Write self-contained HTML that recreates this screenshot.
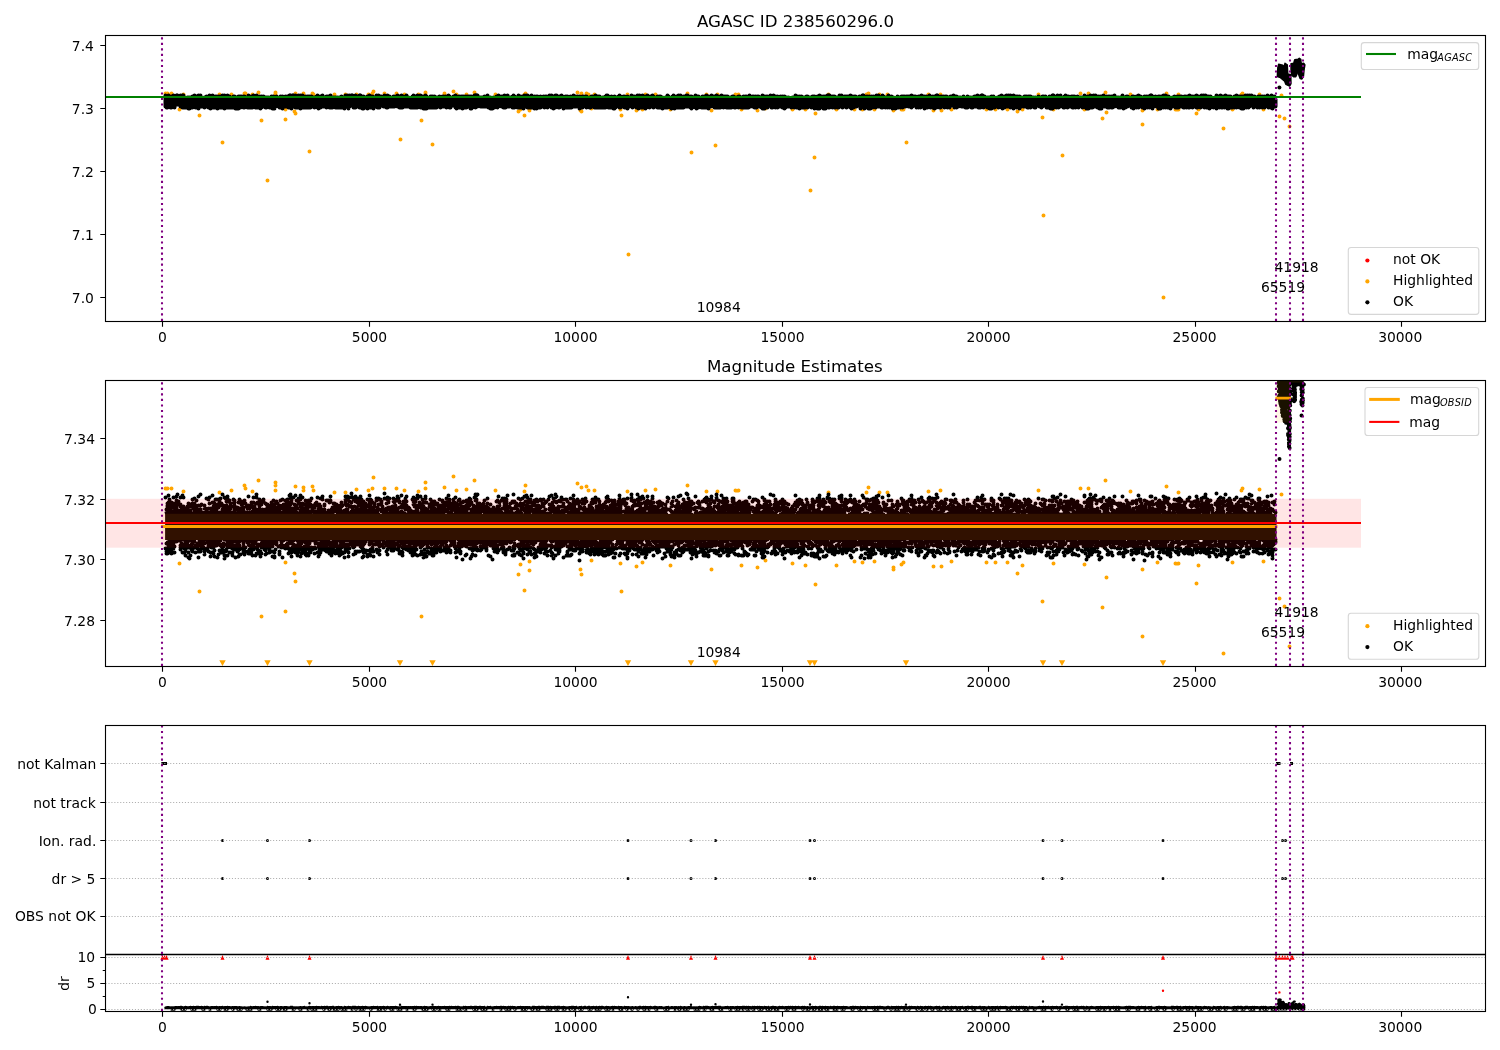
<!DOCTYPE html>
<html><head><meta charset="utf-8"><title>AGASC ID 238560296.0</title>
<style>html,body{margin:0;padding:0;background:#fff}svg{display:block}text{font-family:'DejaVu Sans','Liberation Sans',sans-serif;font-size:13.89px;fill:#000}.t{font-size:16.67px}.sub{font-size:9.72px;font-style:oblique}.sp{fill:none;stroke:#000;stroke-width:1.11;shape-rendering:auto}.tk{stroke:#000;stroke-width:1.11;fill:none}.vl{stroke:#800080;stroke-width:2.08;stroke-dasharray:2.08 3.44;fill:none}.gr{stroke:#b0b0b0;stroke-width:1.11;stroke-dasharray:1.11 1.83;fill:none}.pk{stroke:#000;stroke-linecap:round;fill:none}.po{stroke:#ffa500;stroke-linecap:round;fill:none}.pr{stroke:#f00;stroke-linecap:round;fill:none}.lg{fill:#fff;fill-opacity:.8;stroke:#ccc;stroke-opacity:.8;stroke-width:1.11}</style></head><body>
<svg width="1500" height="1050" viewBox="0 0 1500 1050">
<rect width="1500" height="1050" fill="#fff"/>
<defs>
<clipPath id="c1"><rect x="105.5" y="35.5" width="1380.0" height="286.0"/></clipPath>
<clipPath id="c2"><rect x="105.5" y="380.5" width="1380.0" height="286.0"/></clipPath>
<clipPath id="c3"><rect x="105.5" y="725.5" width="1380.0" height="286.0"/></clipPath>
</defs>
<g clip-path="url(#c1)">
<path class="po" stroke-width="4.0" d="M179.5 109.5h0M199.5 115.5h0M261.5 120.5h0M285.5 119.5h0M285.5 109.5h0M294.5 111.5h0M295.5 113.5h0M421.5 120.5h0M518.5 111.5h0M520.5 109.5h0M524.5 115.5h0M529.5 109.5h0M529.5 110.5h0M580.5 110.5h0M581.5 111.5h0M591.5 108.5h0M620.5 109.5h0M621.5 115.5h0M636.5 110.5h0M642.5 109.5h0M670.5 109.5h0M711.5 110.5h0M741.5 109.5h0M757.5 110.5h0M765.5 108.5h0M792.5 109.5h0M805.5 109.5h0M815.5 113.5h0M836.5 109.5h0M854.5 109.5h0M862.5 109.5h0M874.5 109.5h0M893.5 110.5h0M893.5 110.5h0M901.5 109.5h0M903.5 109.5h0M933.5 110.5h0M941.5 110.5h0M951.5 109.5h0M986.5 109.5h0M995.5 109.5h0M1007.5 109.5h0M1017.5 111.5h0M1022.5 109.5h0M1042.5 117.5h0M1053.5 109.5h0M1084.5 109.5h0M1102.5 118.5h0M1106.5 112.5h0M1142.5 124.5h0M1142.5 110.5h0M1157.5 109.5h0M1175.5 109.5h0M1178.5 109.5h0M1196.5 113.5h0M1198.5 109.5h0M1223.5 128.5h0M1232.5 109.5h0M1263.5 109.5h0M1279.5 116.5h0M1284.5 118.5h0M1289.5 126.5h0M1281.5 95.5h0M165.5 93.5h0M167.5 93.5h0M171.5 93.5h0M183.5 94.5h0M219.5 94.5h0M231.5 94.5h0M244.5 93.5h0M245.5 93.5h0M252.5 94.5h0M258.5 92.5h0M275.5 92.5h0M275.5 93.5h0M275.5 94.5h0M295.5 93.5h0M303.5 93.5h0M303.5 94.5h0M312.5 93.5h0M313.5 94.5h0M334.5 94.5h0M345.5 94.5h0M356.5 94.5h0M368.5 94.5h0M372.5 93.5h0M373.5 91.5h0M384.5 93.5h0M396.5 93.5h0M404.5 94.5h0M418.5 94.5h0M425.5 92.5h0M425.5 93.5h0M444.5 93.5h0M453.5 91.5h0M456.5 94.5h0M466.5 94.5h0M474.5 92.5h0M495.5 94.5h0M525.5 93.5h0M524.5 94.5h0M577.5 92.5h0M581.5 93.5h0M586.5 93.5h0M588.5 94.5h0M594.5 94.5h0M627.5 94.5h0M645.5 94.5h0M655.5 94.5h0M687.5 93.5h0M706.5 94.5h0M717.5 94.5h0M735.5 94.5h0M738.5 94.5h0M828.5 94.5h0M868.5 93.5h0M866.5 94.5h0M879.5 94.5h0M887.5 94.5h0M928.5 94.5h0M940.5 94.5h0M1038.5 94.5h0M1080.5 93.5h0M1088.5 93.5h0M1105.5 92.5h0M1130.5 94.5h0M1166.5 93.5h0M1178.5 94.5h0M1242.5 93.5h0M1241.5 94.5h0M1259.5 94.5h0M222.5 142.5h0M267.5 180.5h0M309.5 151.5h0M400.5 139.5h0M432.5 144.5h0M628.5 254.5h0M691.5 152.5h0M715.5 145.5h0M810.5 190.5h0M814.5 157.5h0M906.5 142.5h0M1043.5 215.5h0M1062.5 155.5h0M1163.5 297.5h0"/>
<path class="pk" stroke-width="4.0" d="M165.5 95.5V106.5M166.5 98.5V107.5M167.5 97.5V107.5M168.5 95.5V106.5M169.5 96.5V106.5M170.5 98.5V107.5M171.5 96.5V107.5M172.5 97.5V105.5M173.5 95.5V106.5M174.5 97.5V107.5M175.5 97.5V104.5M176.5 95.5V104.5M177.5 95.5V104.5M178.5 96.5V104.5M179.5 98.5V104.5M180.5 95.5V106.5M181.5 98.5V105.5M182.5 95.5V107.5M183.5 95.5V106.5M184.5 98.5V107.5M185.5 99.5V107.5M186.5 98.5V106.5M187.5 97.5V106.5M188.5 97.5V108.5M189.5 97.5V108.5M190.5 97.5V107.5M191.5 97.5V106.5M192.5 96.5V107.5M193.5 98.5V104.5M194.5 95.5V106.5M195.5 97.5V107.5M196.5 96.5V105.5M197.5 98.5V106.5M198.5 95.5V108.5M199.5 99.5V105.5M200.5 95.5V106.5M201.5 97.5V106.5M202.5 99.5V106.5M203.5 99.5V106.5M204.5 97.5V107.5M205.5 98.5V104.5M206.5 96.5V106.5M207.5 99.5V106.5M208.5 96.5V107.5M209.5 95.5V106.5M210.5 98.5V108.5M211.5 98.5V106.5M212.5 95.5V107.5M213.5 96.5V107.5M214.5 97.5V107.5M215.5 96.5V105.5M216.5 96.5V105.5M217.5 97.5V108.5M218.5 96.5V107.5M219.5 96.5V106.5M220.5 96.5V107.5M221.5 97.5V106.5M222.5 95.5V107.5M223.5 97.5V106.5M224.5 95.5V108.5M225.5 96.5V107.5M226.5 96.5V106.5M227.5 95.5V107.5M228.5 97.5V105.5M229.5 96.5V107.5M230.5 97.5V107.5M231.5 99.5V105.5M232.5 98.5V107.5M233.5 96.5V106.5M234.5 96.5V106.5M235.5 99.5V108.5M236.5 97.5V106.5M237.5 97.5V107.5M238.5 96.5V108.5M239.5 96.5V107.5M240.5 96.5V107.5M241.5 96.5V104.5M242.5 99.5V106.5M243.5 96.5V107.5M244.5 96.5V107.5M245.5 97.5V106.5M246.5 97.5V104.5M247.5 97.5V107.5M248.5 95.5V107.5M249.5 97.5V107.5M250.5 98.5V106.5M251.5 96.5V107.5M252.5 97.5V107.5M253.5 95.5V106.5M254.5 97.5V104.5M255.5 98.5V107.5M256.5 95.5V107.5M257.5 96.5V106.5M258.5 100.5V107.5M259.5 96.5V104.5M260.5 98.5V108.5M261.5 96.5V107.5M262.5 98.5V105.5M263.5 96.5V105.5M264.5 98.5V106.5M265.5 97.5V107.5M266.5 97.5V107.5M267.5 97.5V104.5M268.5 97.5V106.5M269.5 98.5V107.5M270.5 100.5V105.5M271.5 96.5V104.5M272.5 98.5V108.5M273.5 96.5V105.5M274.5 97.5V108.5M275.5 99.5V106.5M276.5 96.5V105.5M277.5 97.5V104.5M278.5 98.5V106.5M279.5 97.5V107.5M280.5 96.5V105.5M281.5 100.5V106.5M282.5 96.5V108.5M283.5 97.5V106.5M284.5 97.5V105.5M285.5 96.5V106.5M286.5 97.5V105.5M287.5 96.5V105.5M288.5 97.5V107.5M289.5 95.5V106.5M290.5 95.5V107.5M291.5 96.5V108.5M292.5 95.5V106.5M293.5 95.5V105.5M294.5 97.5V106.5M295.5 95.5V107.5M296.5 96.5V106.5M297.5 98.5V107.5M298.5 95.5V107.5M299.5 96.5V106.5M300.5 95.5V108.5M301.5 97.5V107.5M302.5 95.5V104.5M303.5 97.5V107.5M304.5 98.5V106.5M305.5 96.5V107.5M306.5 97.5V107.5M307.5 96.5V106.5M308.5 96.5V107.5M309.5 96.5V107.5M310.5 96.5V107.5M311.5 96.5V106.5M312.5 98.5V106.5M313.5 97.5V106.5M314.5 97.5V107.5M315.5 97.5V106.5M316.5 96.5V104.5M317.5 95.5V107.5M318.5 97.5V108.5M319.5 97.5V107.5M320.5 96.5V107.5M321.5 99.5V105.5M322.5 95.5V106.5M323.5 98.5V105.5M324.5 97.5V106.5M325.5 99.5V106.5M326.5 96.5V107.5M327.5 96.5V106.5M328.5 96.5V106.5M329.5 96.5V107.5M330.5 95.5V105.5M331.5 98.5V107.5M332.5 97.5V107.5M333.5 97.5V105.5M334.5 97.5V106.5M335.5 97.5V107.5M336.5 97.5V107.5M337.5 97.5V106.5M338.5 98.5V107.5M339.5 97.5V107.5M340.5 97.5V107.5M341.5 96.5V107.5M342.5 97.5V107.5M343.5 98.5V107.5M344.5 98.5V108.5M345.5 95.5V106.5M346.5 96.5V106.5M347.5 95.5V105.5M348.5 97.5V108.5M349.5 95.5V106.5M350.5 99.5V105.5M351.5 95.5V104.5M352.5 95.5V105.5M353.5 96.5V107.5M354.5 97.5V105.5M355.5 95.5V107.5M356.5 97.5V104.5M357.5 96.5V106.5M358.5 97.5V105.5M359.5 95.5V107.5M360.5 95.5V105.5M361.5 96.5V106.5M362.5 98.5V108.5M363.5 96.5V108.5M364.5 97.5V107.5M365.5 97.5V107.5M366.5 97.5V106.5M367.5 96.5V108.5M368.5 97.5V107.5M369.5 95.5V107.5M370.5 96.5V107.5M371.5 96.5V107.5M372.5 96.5V106.5M373.5 98.5V108.5M374.5 97.5V104.5M375.5 99.5V105.5M376.5 95.5V106.5M377.5 97.5V107.5M378.5 95.5V103.5M379.5 96.5V107.5M380.5 96.5V105.5M381.5 96.5V105.5M382.5 97.5V105.5M383.5 99.5V106.5M384.5 95.5V105.5M385.5 98.5V105.5M386.5 97.5V107.5M387.5 95.5V107.5M388.5 96.5V105.5M389.5 96.5V106.5M390.5 97.5V105.5M391.5 98.5V106.5M392.5 97.5V106.5M393.5 96.5V106.5M394.5 96.5V106.5M395.5 97.5V104.5M396.5 96.5V105.5M397.5 95.5V106.5M398.5 96.5V106.5M399.5 96.5V107.5M400.5 99.5V107.5M401.5 95.5V107.5M402.5 97.5V107.5M403.5 96.5V106.5M404.5 97.5V105.5M405.5 96.5V106.5M406.5 95.5V106.5M407.5 97.5V106.5M408.5 97.5V106.5M409.5 98.5V105.5M410.5 98.5V107.5M411.5 98.5V106.5M412.5 96.5V107.5M413.5 95.5V106.5M414.5 96.5V107.5M415.5 96.5V107.5M416.5 97.5V106.5M417.5 95.5V107.5M418.5 99.5V105.5M419.5 96.5V104.5M420.5 95.5V107.5M421.5 97.5V106.5M422.5 96.5V105.5M423.5 96.5V108.5M424.5 98.5V107.5M425.5 95.5V105.5M426.5 96.5V108.5M427.5 98.5V107.5M428.5 100.5V106.5M429.5 97.5V107.5M430.5 96.5V105.5M431.5 96.5V107.5M432.5 96.5V107.5M433.5 98.5V107.5M434.5 96.5V107.5M435.5 97.5V106.5M436.5 97.5V107.5M437.5 97.5V106.5M438.5 97.5V106.5M439.5 96.5V106.5M440.5 97.5V107.5M441.5 97.5V105.5M442.5 96.5V106.5M443.5 96.5V106.5M444.5 97.5V106.5M445.5 96.5V105.5M446.5 96.5V107.5M447.5 96.5V106.5M448.5 95.5V106.5M449.5 96.5V107.5M450.5 97.5V107.5M451.5 98.5V105.5M452.5 97.5V105.5M453.5 96.5V105.5M454.5 96.5V105.5M455.5 95.5V107.5M456.5 97.5V108.5M457.5 97.5V104.5M458.5 96.5V107.5M459.5 96.5V107.5M460.5 99.5V107.5M461.5 96.5V106.5M462.5 96.5V108.5M463.5 96.5V105.5M464.5 97.5V104.5M465.5 96.5V107.5M466.5 96.5V107.5M467.5 96.5V105.5M468.5 96.5V104.5M469.5 96.5V106.5M470.5 96.5V108.5M471.5 96.5V108.5M472.5 98.5V107.5M473.5 97.5V105.5M474.5 95.5V106.5M475.5 95.5V107.5M476.5 95.5V106.5M477.5 95.5V106.5M478.5 97.5V104.5M479.5 97.5V105.5M480.5 97.5V106.5M481.5 97.5V106.5M482.5 97.5V106.5M483.5 97.5V105.5M484.5 96.5V106.5M485.5 97.5V106.5M486.5 98.5V106.5M487.5 95.5V105.5M488.5 98.5V107.5M489.5 98.5V104.5M490.5 97.5V108.5M491.5 98.5V105.5M492.5 99.5V108.5M493.5 97.5V106.5M494.5 98.5V107.5M495.5 98.5V106.5M496.5 96.5V106.5M497.5 96.5V107.5M498.5 95.5V106.5M499.5 96.5V104.5M500.5 98.5V105.5M501.5 96.5V106.5M502.5 96.5V106.5M503.5 98.5V107.5M504.5 95.5V105.5M505.5 96.5V107.5M506.5 96.5V105.5M507.5 95.5V106.5M508.5 97.5V104.5M509.5 97.5V106.5M510.5 97.5V105.5M511.5 98.5V106.5M512.5 96.5V107.5M513.5 95.5V106.5M514.5 96.5V107.5M515.5 97.5V105.5M516.5 97.5V103.5M517.5 98.5V107.5M518.5 95.5V107.5M519.5 98.5V107.5M520.5 96.5V106.5M521.5 97.5V107.5M522.5 96.5V106.5M523.5 97.5V108.5M524.5 95.5V104.5M525.5 96.5V106.5M526.5 95.5V105.5M527.5 95.5V107.5M528.5 96.5V106.5M529.5 97.5V107.5M530.5 96.5V107.5M531.5 95.5V107.5M532.5 97.5V104.5M533.5 98.5V106.5M534.5 96.5V108.5M535.5 97.5V107.5M536.5 96.5V108.5M537.5 96.5V106.5M538.5 97.5V107.5M539.5 97.5V106.5M540.5 96.5V107.5M541.5 97.5V106.5M542.5 97.5V106.5M543.5 96.5V106.5M544.5 97.5V107.5M545.5 96.5V106.5M546.5 96.5V106.5M547.5 99.5V107.5M548.5 96.5V105.5M549.5 95.5V104.5M550.5 99.5V106.5M551.5 95.5V107.5M552.5 96.5V107.5M553.5 96.5V108.5M554.5 96.5V105.5M555.5 95.5V107.5M556.5 95.5V105.5M557.5 96.5V106.5M558.5 97.5V107.5M559.5 96.5V107.5M560.5 96.5V104.5M561.5 95.5V106.5M562.5 96.5V105.5M563.5 97.5V108.5M564.5 98.5V104.5M565.5 96.5V105.5M566.5 96.5V107.5M567.5 96.5V107.5M568.5 97.5V107.5M569.5 97.5V106.5M570.5 96.5V107.5M571.5 97.5V107.5M572.5 98.5V104.5M573.5 95.5V106.5M574.5 97.5V106.5M575.5 96.5V106.5M576.5 97.5V106.5M577.5 96.5V105.5M578.5 97.5V106.5M579.5 96.5V108.5M580.5 97.5V106.5M581.5 98.5V105.5M582.5 96.5V107.5M583.5 96.5V106.5M584.5 97.5V105.5M585.5 96.5V105.5M586.5 96.5V107.5M587.5 98.5V106.5M588.5 99.5V105.5M589.5 97.5V107.5M590.5 97.5V107.5M591.5 96.5V106.5M592.5 96.5V106.5M593.5 98.5V105.5M594.5 96.5V107.5M595.5 95.5V106.5M596.5 97.5V107.5M597.5 96.5V107.5M598.5 96.5V107.5M599.5 96.5V107.5M600.5 98.5V107.5M601.5 98.5V106.5M602.5 97.5V107.5M603.5 97.5V107.5M604.5 97.5V105.5M605.5 96.5V107.5M606.5 95.5V106.5M607.5 95.5V106.5M608.5 96.5V107.5M609.5 98.5V107.5M610.5 97.5V107.5M611.5 96.5V104.5M612.5 97.5V107.5M613.5 97.5V108.5M614.5 96.5V108.5M615.5 98.5V107.5M616.5 97.5V106.5M617.5 98.5V104.5M618.5 96.5V104.5M619.5 95.5V107.5M620.5 96.5V107.5M621.5 97.5V105.5M622.5 97.5V106.5M623.5 96.5V106.5M624.5 96.5V107.5M625.5 97.5V107.5M626.5 97.5V107.5M627.5 96.5V108.5M628.5 97.5V104.5M629.5 98.5V106.5M630.5 98.5V105.5M631.5 95.5V106.5M632.5 97.5V107.5M633.5 96.5V106.5M634.5 96.5V106.5M635.5 97.5V105.5M636.5 98.5V107.5M637.5 95.5V106.5M638.5 96.5V108.5M639.5 95.5V105.5M640.5 96.5V106.5M641.5 97.5V107.5M642.5 95.5V106.5M643.5 96.5V107.5M644.5 96.5V106.5M645.5 96.5V108.5M646.5 96.5V107.5M647.5 95.5V106.5M648.5 99.5V105.5M649.5 97.5V107.5M650.5 96.5V105.5M651.5 97.5V106.5M652.5 95.5V106.5M653.5 96.5V107.5M654.5 97.5V105.5M655.5 98.5V106.5M656.5 97.5V106.5M657.5 96.5V107.5M658.5 97.5V106.5M659.5 96.5V107.5M660.5 96.5V105.5M661.5 97.5V106.5M662.5 97.5V108.5M663.5 98.5V105.5M664.5 100.5V107.5M665.5 97.5V107.5M666.5 99.5V106.5M667.5 95.5V107.5M668.5 96.5V105.5M669.5 98.5V106.5M670.5 98.5V107.5M671.5 97.5V108.5M672.5 96.5V106.5M673.5 95.5V104.5M674.5 99.5V108.5M675.5 97.5V107.5M676.5 96.5V107.5M677.5 97.5V105.5M678.5 95.5V107.5M679.5 97.5V106.5M680.5 95.5V107.5M681.5 99.5V105.5M682.5 97.5V107.5M683.5 96.5V107.5M684.5 96.5V105.5M685.5 96.5V106.5M686.5 95.5V106.5M687.5 95.5V106.5M688.5 96.5V106.5M689.5 97.5V106.5M690.5 96.5V107.5M691.5 96.5V108.5M692.5 97.5V107.5M693.5 97.5V106.5M694.5 98.5V105.5M695.5 95.5V107.5M696.5 98.5V108.5M697.5 96.5V105.5M698.5 96.5V107.5M699.5 97.5V105.5M700.5 98.5V106.5M701.5 98.5V107.5M702.5 96.5V107.5M703.5 100.5V107.5M704.5 96.5V107.5M705.5 96.5V107.5M706.5 95.5V106.5M707.5 98.5V106.5M708.5 96.5V108.5M709.5 97.5V105.5M710.5 97.5V106.5M711.5 95.5V105.5M712.5 99.5V105.5M713.5 96.5V106.5M714.5 96.5V107.5M715.5 99.5V107.5M716.5 95.5V107.5M717.5 97.5V107.5M718.5 96.5V107.5M719.5 98.5V107.5M720.5 96.5V107.5M721.5 95.5V106.5M722.5 96.5V106.5M723.5 96.5V107.5M724.5 96.5V106.5M725.5 96.5V105.5M726.5 96.5V107.5M727.5 96.5V107.5M728.5 97.5V107.5M729.5 98.5V107.5M730.5 97.5V107.5M731.5 97.5V107.5M732.5 96.5V106.5M733.5 96.5V105.5M734.5 97.5V107.5M735.5 97.5V107.5M736.5 97.5V106.5M737.5 98.5V106.5M738.5 96.5V107.5M739.5 96.5V105.5M740.5 97.5V105.5M741.5 97.5V107.5M742.5 97.5V106.5M743.5 96.5V107.5M744.5 97.5V107.5M745.5 96.5V107.5M746.5 96.5V107.5M747.5 97.5V107.5M748.5 97.5V107.5M749.5 95.5V105.5M750.5 97.5V106.5M751.5 98.5V104.5M752.5 96.5V106.5M753.5 96.5V106.5M754.5 99.5V107.5M755.5 96.5V107.5M756.5 98.5V107.5M757.5 96.5V106.5M758.5 96.5V106.5M759.5 97.5V106.5M760.5 97.5V106.5M761.5 97.5V107.5M762.5 95.5V108.5M763.5 98.5V108.5M764.5 96.5V108.5M765.5 97.5V106.5M766.5 96.5V106.5M767.5 96.5V107.5M768.5 97.5V105.5M769.5 96.5V105.5M770.5 95.5V105.5M771.5 98.5V107.5M772.5 98.5V107.5M773.5 95.5V105.5M774.5 97.5V106.5M775.5 96.5V107.5M776.5 98.5V104.5M777.5 96.5V107.5M778.5 97.5V106.5M779.5 97.5V106.5M780.5 96.5V106.5M781.5 98.5V104.5M782.5 96.5V107.5M783.5 97.5V106.5M784.5 96.5V108.5M785.5 97.5V107.5M786.5 97.5V106.5M787.5 98.5V106.5M788.5 97.5V105.5M789.5 98.5V106.5M790.5 98.5V105.5M791.5 98.5V107.5M792.5 97.5V105.5M793.5 98.5V106.5M794.5 97.5V107.5M795.5 95.5V104.5M796.5 97.5V107.5M797.5 96.5V107.5M798.5 97.5V106.5M799.5 96.5V108.5M800.5 97.5V107.5M801.5 96.5V107.5M802.5 97.5V107.5M803.5 97.5V107.5M804.5 97.5V107.5M805.5 98.5V107.5M806.5 96.5V104.5M807.5 96.5V107.5M808.5 98.5V106.5M809.5 97.5V105.5M810.5 97.5V105.5M811.5 98.5V107.5M812.5 96.5V105.5M813.5 96.5V107.5M814.5 96.5V108.5M815.5 99.5V107.5M816.5 98.5V104.5M817.5 96.5V108.5M818.5 97.5V107.5M819.5 95.5V108.5M820.5 98.5V106.5M821.5 96.5V105.5M822.5 98.5V107.5M823.5 96.5V108.5M824.5 96.5V105.5M825.5 96.5V108.5M826.5 98.5V107.5M827.5 95.5V106.5M828.5 95.5V107.5M829.5 95.5V107.5M830.5 96.5V106.5M831.5 98.5V106.5M832.5 96.5V107.5M833.5 96.5V106.5M834.5 96.5V107.5M835.5 97.5V107.5M836.5 97.5V105.5M837.5 98.5V107.5M838.5 97.5V107.5M839.5 95.5V106.5M840.5 96.5V106.5M841.5 95.5V104.5M842.5 97.5V107.5M843.5 97.5V106.5M844.5 96.5V105.5M845.5 96.5V106.5M846.5 96.5V107.5M847.5 96.5V106.5M848.5 96.5V106.5M849.5 99.5V106.5M850.5 95.5V107.5M851.5 99.5V108.5M852.5 96.5V105.5M853.5 97.5V107.5M854.5 96.5V105.5M855.5 96.5V104.5M856.5 97.5V106.5M857.5 97.5V103.5M858.5 97.5V105.5M859.5 96.5V105.5M860.5 97.5V108.5M861.5 98.5V107.5M862.5 95.5V105.5M863.5 95.5V104.5M864.5 97.5V108.5M865.5 97.5V107.5M866.5 96.5V106.5M867.5 96.5V106.5M868.5 99.5V108.5M869.5 96.5V104.5M870.5 98.5V108.5M871.5 96.5V107.5M872.5 97.5V107.5M873.5 96.5V106.5M874.5 97.5V105.5M875.5 97.5V107.5M876.5 95.5V104.5M877.5 96.5V106.5M878.5 95.5V106.5M879.5 97.5V106.5M880.5 98.5V106.5M881.5 98.5V107.5M882.5 95.5V107.5M883.5 96.5V106.5M884.5 97.5V106.5M885.5 97.5V107.5M886.5 97.5V105.5M887.5 99.5V107.5M888.5 95.5V105.5M889.5 98.5V107.5M890.5 98.5V105.5M891.5 96.5V107.5M892.5 97.5V108.5M893.5 97.5V107.5M894.5 98.5V105.5M895.5 98.5V108.5M896.5 97.5V107.5M897.5 96.5V107.5M898.5 99.5V107.5M899.5 97.5V106.5M900.5 99.5V107.5M901.5 96.5V105.5M902.5 96.5V107.5M903.5 96.5V106.5M904.5 96.5V106.5M905.5 99.5V106.5M906.5 96.5V104.5M907.5 96.5V105.5M908.5 96.5V106.5M909.5 96.5V106.5M910.5 98.5V106.5M911.5 95.5V107.5M912.5 96.5V106.5M913.5 96.5V105.5M914.5 96.5V104.5M915.5 96.5V105.5M916.5 98.5V107.5M917.5 98.5V106.5M918.5 96.5V107.5M919.5 96.5V105.5M920.5 99.5V107.5M921.5 95.5V106.5M922.5 96.5V106.5M923.5 96.5V106.5M924.5 96.5V108.5M925.5 98.5V107.5M926.5 96.5V107.5M927.5 97.5V107.5M928.5 96.5V106.5M929.5 95.5V106.5M930.5 97.5V107.5M931.5 97.5V105.5M932.5 96.5V107.5M933.5 99.5V107.5M934.5 96.5V108.5M935.5 96.5V104.5M936.5 95.5V107.5M937.5 95.5V106.5M938.5 97.5V106.5M939.5 97.5V107.5M940.5 96.5V107.5M941.5 96.5V105.5M942.5 97.5V105.5M943.5 96.5V106.5M944.5 97.5V107.5M945.5 96.5V105.5M946.5 96.5V105.5M947.5 99.5V107.5M948.5 97.5V106.5M949.5 98.5V107.5M950.5 96.5V105.5M951.5 96.5V104.5M952.5 97.5V105.5M953.5 95.5V105.5M954.5 96.5V107.5M955.5 96.5V105.5M956.5 96.5V107.5M957.5 98.5V106.5M958.5 97.5V106.5M959.5 97.5V104.5M960.5 97.5V105.5M961.5 98.5V106.5M962.5 98.5V106.5M963.5 96.5V106.5M964.5 98.5V106.5M965.5 99.5V107.5M966.5 97.5V107.5M967.5 96.5V107.5M968.5 98.5V104.5M969.5 97.5V106.5M970.5 97.5V105.5M971.5 98.5V107.5M972.5 97.5V107.5M973.5 97.5V105.5M974.5 96.5V106.5M975.5 96.5V106.5M976.5 96.5V106.5M977.5 95.5V105.5M978.5 97.5V107.5M979.5 96.5V107.5M980.5 98.5V107.5M981.5 95.5V104.5M982.5 95.5V106.5M983.5 97.5V107.5M984.5 96.5V106.5M985.5 97.5V105.5M986.5 98.5V103.5M987.5 97.5V107.5M988.5 97.5V106.5M989.5 97.5V108.5M990.5 98.5V104.5M991.5 96.5V108.5M992.5 97.5V105.5M993.5 96.5V107.5M994.5 98.5V107.5M995.5 98.5V105.5M996.5 98.5V105.5M997.5 97.5V106.5M998.5 98.5V107.5M999.5 96.5V105.5M1000.5 96.5V104.5M1001.5 95.5V107.5M1002.5 96.5V108.5M1003.5 98.5V107.5M1004.5 96.5V107.5M1005.5 98.5V105.5M1006.5 95.5V106.5M1007.5 96.5V105.5M1008.5 95.5V106.5M1009.5 96.5V106.5M1010.5 95.5V107.5M1011.5 96.5V105.5M1012.5 97.5V107.5M1013.5 95.5V108.5M1014.5 97.5V106.5M1015.5 96.5V106.5M1016.5 96.5V107.5M1017.5 96.5V106.5M1018.5 98.5V104.5M1019.5 96.5V108.5M1020.5 97.5V106.5M1021.5 97.5V106.5M1022.5 98.5V105.5M1023.5 97.5V106.5M1024.5 96.5V106.5M1025.5 96.5V106.5M1026.5 96.5V106.5M1027.5 97.5V107.5M1028.5 96.5V107.5M1029.5 96.5V105.5M1030.5 96.5V107.5M1031.5 98.5V106.5M1032.5 97.5V106.5M1033.5 97.5V105.5M1034.5 98.5V107.5M1035.5 97.5V107.5M1036.5 98.5V105.5M1037.5 99.5V104.5M1038.5 96.5V105.5M1039.5 98.5V106.5M1040.5 97.5V105.5M1041.5 97.5V107.5M1042.5 96.5V106.5M1043.5 96.5V104.5M1044.5 97.5V105.5M1045.5 96.5V105.5M1046.5 99.5V107.5M1047.5 98.5V107.5M1048.5 97.5V107.5M1049.5 96.5V107.5M1050.5 98.5V108.5M1051.5 96.5V106.5M1052.5 95.5V108.5M1053.5 95.5V107.5M1054.5 96.5V105.5M1055.5 98.5V105.5M1056.5 96.5V107.5M1057.5 95.5V106.5M1058.5 97.5V107.5M1059.5 99.5V106.5M1060.5 95.5V106.5M1061.5 97.5V105.5M1062.5 100.5V106.5M1063.5 97.5V107.5M1064.5 96.5V107.5M1065.5 95.5V106.5M1066.5 97.5V106.5M1067.5 96.5V107.5M1068.5 96.5V106.5M1069.5 97.5V106.5M1070.5 97.5V106.5M1071.5 96.5V106.5M1072.5 96.5V107.5M1073.5 96.5V107.5M1074.5 96.5V105.5M1075.5 97.5V107.5M1076.5 99.5V105.5M1077.5 96.5V106.5M1078.5 97.5V107.5M1079.5 97.5V104.5M1080.5 97.5V105.5M1081.5 97.5V106.5M1082.5 98.5V107.5M1083.5 99.5V106.5M1084.5 95.5V105.5M1085.5 100.5V107.5M1086.5 97.5V108.5M1087.5 96.5V108.5M1088.5 96.5V108.5M1089.5 96.5V107.5M1090.5 95.5V107.5M1091.5 96.5V107.5M1092.5 96.5V107.5M1093.5 95.5V104.5M1094.5 96.5V106.5M1095.5 95.5V106.5M1096.5 96.5V105.5M1097.5 98.5V107.5M1098.5 96.5V107.5M1099.5 98.5V108.5M1100.5 96.5V105.5M1101.5 96.5V108.5M1102.5 97.5V104.5M1103.5 95.5V105.5M1104.5 97.5V106.5M1105.5 97.5V106.5M1106.5 96.5V105.5M1107.5 98.5V107.5M1108.5 96.5V107.5M1109.5 96.5V107.5M1110.5 99.5V106.5M1111.5 96.5V107.5M1112.5 96.5V107.5M1113.5 96.5V105.5M1114.5 95.5V106.5M1115.5 97.5V104.5M1116.5 98.5V105.5M1117.5 97.5V106.5M1118.5 97.5V107.5M1119.5 98.5V107.5M1120.5 97.5V107.5M1121.5 98.5V105.5M1122.5 95.5V105.5M1123.5 97.5V108.5M1124.5 97.5V106.5M1125.5 97.5V107.5M1126.5 96.5V104.5M1127.5 96.5V106.5M1128.5 97.5V105.5M1129.5 97.5V104.5M1130.5 98.5V105.5M1131.5 97.5V107.5M1132.5 96.5V105.5M1133.5 96.5V108.5M1134.5 99.5V107.5M1135.5 98.5V105.5M1136.5 96.5V107.5M1137.5 98.5V106.5M1138.5 95.5V107.5M1139.5 96.5V105.5M1140.5 96.5V106.5M1141.5 97.5V104.5M1142.5 97.5V107.5M1143.5 98.5V106.5M1144.5 96.5V108.5M1145.5 97.5V107.5M1146.5 96.5V105.5M1147.5 97.5V107.5M1148.5 96.5V106.5M1149.5 97.5V107.5M1150.5 95.5V105.5M1151.5 95.5V105.5M1152.5 96.5V108.5M1153.5 97.5V106.5M1154.5 98.5V105.5M1155.5 96.5V105.5M1156.5 97.5V106.5M1157.5 97.5V104.5M1158.5 96.5V108.5M1159.5 96.5V107.5M1160.5 98.5V108.5M1161.5 96.5V106.5M1162.5 97.5V106.5M1163.5 95.5V107.5M1164.5 96.5V104.5M1165.5 95.5V107.5M1166.5 96.5V104.5M1167.5 96.5V107.5M1168.5 96.5V107.5M1169.5 97.5V107.5M1170.5 98.5V108.5M1171.5 99.5V105.5M1172.5 97.5V106.5M1173.5 97.5V105.5M1174.5 96.5V105.5M1175.5 97.5V107.5M1176.5 100.5V107.5M1177.5 96.5V107.5M1178.5 96.5V107.5M1179.5 96.5V105.5M1180.5 96.5V106.5M1181.5 96.5V106.5M1182.5 98.5V105.5M1183.5 97.5V107.5M1184.5 96.5V107.5M1185.5 96.5V104.5M1186.5 99.5V107.5M1187.5 96.5V106.5M1188.5 96.5V107.5M1189.5 95.5V107.5M1190.5 97.5V106.5M1191.5 96.5V105.5M1192.5 96.5V107.5M1193.5 97.5V105.5M1194.5 96.5V106.5M1195.5 96.5V106.5M1196.5 95.5V107.5M1197.5 96.5V107.5M1198.5 96.5V106.5M1199.5 97.5V105.5M1200.5 98.5V107.5M1201.5 95.5V106.5M1202.5 97.5V106.5M1203.5 95.5V105.5M1204.5 97.5V107.5M1205.5 95.5V106.5M1206.5 96.5V107.5M1207.5 96.5V107.5M1208.5 96.5V106.5M1209.5 97.5V108.5M1210.5 96.5V107.5M1211.5 97.5V106.5M1212.5 98.5V104.5M1213.5 100.5V107.5M1214.5 100.5V104.5M1215.5 97.5V107.5M1216.5 95.5V108.5M1217.5 96.5V106.5M1218.5 96.5V105.5M1219.5 96.5V107.5M1220.5 95.5V105.5M1221.5 97.5V107.5M1222.5 96.5V107.5M1223.5 96.5V106.5M1224.5 96.5V107.5M1225.5 95.5V104.5M1226.5 100.5V107.5M1227.5 96.5V108.5M1228.5 96.5V108.5M1229.5 96.5V106.5M1230.5 96.5V107.5M1231.5 97.5V107.5M1232.5 98.5V107.5M1233.5 97.5V106.5M1234.5 96.5V107.5M1235.5 97.5V106.5M1236.5 95.5V107.5M1237.5 97.5V106.5M1238.5 96.5V104.5M1239.5 96.5V107.5M1240.5 96.5V107.5M1241.5 96.5V108.5M1242.5 96.5V105.5M1243.5 96.5V108.5M1244.5 97.5V104.5M1245.5 95.5V104.5M1246.5 99.5V107.5M1247.5 95.5V106.5M1248.5 96.5V107.5M1249.5 95.5V106.5M1250.5 98.5V103.5M1251.5 95.5V105.5M1252.5 96.5V104.5M1253.5 98.5V107.5M1254.5 96.5V105.5M1255.5 97.5V106.5M1256.5 97.5V106.5M1257.5 97.5V107.5M1258.5 96.5V106.5M1259.5 96.5V107.5M1260.5 96.5V106.5M1261.5 97.5V106.5M1262.5 96.5V107.5M1263.5 98.5V106.5M1264.5 96.5V107.5M1265.5 97.5V104.5M1266.5 96.5V105.5M1267.5 95.5V106.5M1268.5 96.5V107.5M1269.5 98.5V106.5M1270.5 98.5V107.5M1271.5 95.5V107.5M1272.5 96.5V108.5M1273.5 99.5V105.5M1274.5 96.5V106.5M1275.5 99.5V106.5"/>
<polygon points="1278.7,64.4 1282.8,65.2 1284.3,67.4 1285,63.4 1287.2,64.8 1287.7,74 1290.7,74.8 1290.9,83.6 1289.7,86 1285.9,84.3 1284.7,81.1 1280.5,77.6 1277.4,76.4 1277.9,67.6" fill="#000" stroke="#000" stroke-width="1.6" stroke-linejoin="round"/>
<polygon points="1291.1,63.7 1293.8,63.3 1294.8,59.7 1298,59.3 1299.3,58.3 1300.7,59.3 1301.1,63.7 1303.8,63.3 1304.8,64.9 1303.9,70.5 1303.4,76.1 1301.9,78.9 1300.2,78.4 1298.4,73.6 1297.6,71.7 1296.5,71.2 1296.7,74.5 1295.7,76.8 1293.8,76.8 1291.8,75.2 1291.1,69.3" fill="#000" stroke="#000" stroke-width="1.6" stroke-linejoin="round"/>
<path class="pk" stroke-width="4.0" d="M1279.4 87.5h0"/>
</g>
<path d="M105.5 97H1361" stroke="#008000" stroke-width="2.08" fill="none"/>
<g clip-path="url(#c2)">
<path class="po" stroke-width="4.0" d="M179.5 563.5h0M199.5 591.5h0M261.5 616.5h0M285.5 611.5h0M285.5 562.5h0M294.5 573.5h0M295.5 581.5h0M421.5 616.5h0M518.5 574.5h0M520.5 564.5h0M524.5 590.5h0M529.5 561.5h0M529.5 570.5h0M580.5 569.5h0M581.5 574.5h0M591.5 560.5h0M620.5 563.5h0M621.5 591.5h0M636.5 566.5h0M642.5 562.5h0M670.5 565.5h0M711.5 569.5h0M741.5 565.5h0M757.5 567.5h0M765.5 560.5h0M792.5 563.5h0M805.5 565.5h0M815.5 584.5h0M836.5 565.5h0M854.5 561.5h0M862.5 562.5h0M874.5 561.5h0M893.5 567.5h0M893.5 569.5h0M901.5 564.5h0M903.5 562.5h0M933.5 566.5h0M941.5 566.5h0M951.5 561.5h0M986.5 562.5h0M995.5 562.5h0M1007.5 562.5h0M1017.5 573.5h0M1022.5 565.5h0M1042.5 601.5h0M1053.5 563.5h0M1084.5 564.5h0M1102.5 607.5h0M1106.5 577.5h0M1142.5 636.5h0M1142.5 569.5h0M1157.5 562.5h0M1175.5 563.5h0M1178.5 563.5h0M1196.5 583.5h0M1198.5 565.5h0M1223.5 653.5h0M1232.5 562.5h0M1263.5 561.5h0M1279.5 598.5h0M1284.5 606.5h0M1289.5 646.5h0M1281.5 494.5h0M165.5 488.5h0M167.5 488.5h0M171.5 488.5h0M183.5 491.5h0M219.5 492.5h0M231.5 490.5h0M244.5 485.5h0M245.5 488.5h0M252.5 491.5h0M258.5 480.5h0M275.5 482.5h0M275.5 485.5h0M275.5 490.5h0M295.5 486.5h0M303.5 487.5h0M303.5 490.5h0M312.5 486.5h0M313.5 490.5h0M334.5 492.5h0M345.5 492.5h0M356.5 489.5h0M368.5 490.5h0M372.5 488.5h0M373.5 477.5h0M384.5 488.5h0M396.5 488.5h0M404.5 490.5h0M418.5 491.5h0M425.5 482.5h0M425.5 488.5h0M444.5 487.5h0M453.5 476.5h0M456.5 490.5h0M466.5 489.5h0M474.5 480.5h0M495.5 490.5h0M525.5 485.5h0M524.5 491.5h0M577.5 483.5h0M581.5 487.5h0M586.5 486.5h0M588.5 490.5h0M594.5 490.5h0M627.5 491.5h0M645.5 490.5h0M655.5 489.5h0M687.5 485.5h0M706.5 491.5h0M717.5 491.5h0M735.5 490.5h0M738.5 490.5h0M828.5 492.5h0M868.5 487.5h0M866.5 492.5h0M879.5 492.5h0M887.5 492.5h0M928.5 491.5h0M940.5 490.5h0M1038.5 490.5h0M1080.5 488.5h0M1088.5 488.5h0M1105.5 480.5h0M1130.5 491.5h0M1166.5 486.5h0M1178.5 492.5h0M1242.5 488.5h0M1241.5 490.5h0M1259.5 489.5h0"/>
<path d="M222.5 660.3l3.2 0l-3.2 5.8l-3.2 -5.8zM267.5 660.3l3.2 0l-3.2 5.8l-3.2 -5.8zM309.5 660.3l3.2 0l-3.2 5.8l-3.2 -5.8zM400 660.3l3.2 0l-3.2 5.8l-3.2 -5.8zM432.5 660.3l3.2 0l-3.2 5.8l-3.2 -5.8zM628 660.3l3.2 0l-3.2 5.8l-3.2 -5.8zM691 660.3l3.2 0l-3.2 5.8l-3.2 -5.8zM715.5 660.3l3.2 0l-3.2 5.8l-3.2 -5.8zM810 660.3l3.2 0l-3.2 5.8l-3.2 -5.8zM814.5 660.3l3.2 0l-3.2 5.8l-3.2 -5.8zM906 660.3l3.2 0l-3.2 5.8l-3.2 -5.8zM1043 660.3l3.2 0l-3.2 5.8l-3.2 -5.8zM1062 660.3l3.2 0l-3.2 5.8l-3.2 -5.8zM1163 660.3l3.2 0l-3.2 5.8l-3.2 -5.8z" fill="#ffa500"/>
<rect x="165.1" y="514.0" width="1111.4" height="26.0" fill="#000"/>
<path class="pk" stroke-width="4.0" d="M165.5 497.5h0M165.5 548.5h0M166.5 509.5h0M166.5 512.5h0M166.5 543.5h0M166.5 551.5h0M166.5 553.5h0M167.5 503.5h0M167.5 505.5h0M167.5 506.5h0M167.5 507.5h0M167.5 508.5h0M167.5 510.5h0M167.5 513.5h0M167.5 542.5h0M167.5 543.5h0M167.5 553.5h0M168.5 495.5h0M168.5 502.5h0M168.5 503.5h0M168.5 514.5h0M168.5 542.5h0M168.5 545.5h0M168.5 546.5h0M168.5 548.5h0M168.5 551.5h0M169.5 499.5h0M169.5 504.5h0M169.5 505.5h0M169.5 507.5h0M169.5 514.5h0M169.5 540.5h0M169.5 541.5h0M169.5 550.5h0M170.5 509.5h0M170.5 510.5h0M170.5 511.5h0M170.5 514.5h0M170.5 541.5h0M170.5 542.5h0M170.5 552.5h0M171.5 502.5h0M171.5 505.5h0M171.5 511.5h0M171.5 539.5h0M171.5 541.5h0M171.5 545.5h0M171.5 546.5h0M171.5 549.5h0M171.5 551.5h0M171.5 553.5h0M172.5 505.5h0M172.5 506.5h0M172.5 507.5h0M172.5 541.5h0M172.5 545.5h0M173.5 497.5h0M173.5 503.5h0M173.5 504.5h0M173.5 511.5h0M173.5 512.5h0M173.5 539.5h0M173.5 541.5h0M173.5 543.5h0M173.5 548.5h0M174.5 507.5h0M174.5 512.5h0M174.5 540.5h0M174.5 541.5h0M174.5 546.5h0M174.5 552.5h0M175.5 503.5h0M175.5 505.5h0M175.5 508.5h0M175.5 509.5h0M176.5 496.5h0M176.5 500.5h0M176.5 507.5h0M176.5 511.5h0M176.5 513.5h0M176.5 514.5h0M176.5 539.5h0M176.5 540.5h0M176.5 541.5h0M177.5 494.5h0M177.5 504.5h0M177.5 510.5h0M177.5 511.5h0M177.5 512.5h0M178.5 501.5h0M178.5 502.5h0M178.5 510.5h0M178.5 511.5h0M178.5 513.5h0M178.5 540.5h0M179.5 511.5h0M179.5 512.5h0M179.5 539.5h0M179.5 540.5h0M180.5 497.5h0M180.5 504.5h0M180.5 506.5h0M180.5 512.5h0M180.5 545.5h0M180.5 547.5h0M180.5 549.5h0M181.5 509.5h0M181.5 511.5h0M181.5 539.5h0M181.5 543.5h0M182.5 495.5h0M182.5 509.5h0M182.5 510.5h0M182.5 511.5h0M182.5 514.5h0M182.5 552.5h0M183.5 497.5h0M183.5 506.5h0M183.5 508.5h0M183.5 510.5h0M183.5 539.5h0M183.5 544.5h0M183.5 545.5h0M183.5 547.5h0M184.5 508.5h0M184.5 511.5h0M184.5 512.5h0M184.5 513.5h0M184.5 544.5h0M184.5 548.5h0M184.5 552.5h0M185.5 514.5h0M185.5 539.5h0M185.5 540.5h0M185.5 541.5h0M185.5 545.5h0M185.5 549.5h0M185.5 550.5h0M185.5 555.5h0M186.5 511.5h0M186.5 512.5h0M186.5 545.5h0M186.5 547.5h0M187.5 506.5h0M187.5 508.5h0M187.5 510.5h0M187.5 512.5h0M187.5 513.5h0M187.5 514.5h0M187.5 540.5h0M187.5 542.5h0M187.5 545.5h0M187.5 547.5h0M188.5 503.5h0M188.5 511.5h0M188.5 514.5h0M188.5 552.5h0M188.5 557.5h0M189.5 504.5h0M189.5 506.5h0M189.5 540.5h0M189.5 547.5h0M189.5 558.5h0M190.5 504.5h0M190.5 510.5h0M190.5 545.5h0M190.5 555.5h0M191.5 506.5h0M191.5 513.5h0M191.5 514.5h0M191.5 544.5h0M191.5 545.5h0M191.5 547.5h0M191.5 549.5h0M192.5 499.5h0M192.5 503.5h0M192.5 504.5h0M192.5 539.5h0M192.5 542.5h0M192.5 543.5h0M192.5 549.5h0M192.5 551.5h0M193.5 508.5h0M193.5 514.5h0M193.5 540.5h0M193.5 541.5h0M194.5 498.5h0M194.5 503.5h0M194.5 504.5h0M194.5 509.5h0M194.5 511.5h0M194.5 541.5h0M194.5 547.5h0M195.5 505.5h0M195.5 509.5h0M195.5 512.5h0M195.5 545.5h0M195.5 552.5h0M196.5 500.5h0M196.5 506.5h0M196.5 512.5h0M196.5 546.5h0M197.5 509.5h0M197.5 513.5h0M197.5 543.5h0M197.5 546.5h0M197.5 547.5h0M197.5 548.5h0M198.5 496.5h0M198.5 505.5h0M198.5 510.5h0M198.5 512.5h0M198.5 513.5h0M198.5 514.5h0M198.5 545.5h0M198.5 551.5h0M198.5 557.5h0M199.5 540.5h0M199.5 543.5h0M200.5 494.5h0M200.5 505.5h0M200.5 509.5h0M200.5 511.5h0M200.5 541.5h0M200.5 544.5h0M200.5 545.5h0M200.5 549.5h0M200.5 551.5h0M201.5 504.5h0M201.5 514.5h0M201.5 539.5h0M201.5 542.5h0M201.5 548.5h0M202.5 512.5h0M202.5 539.5h0M202.5 540.5h0M202.5 541.5h0M202.5 542.5h0M202.5 546.5h0M203.5 541.5h0M203.5 547.5h0M203.5 548.5h0M204.5 505.5h0M204.5 508.5h0M204.5 513.5h0M204.5 539.5h0M204.5 543.5h0M204.5 549.5h0M204.5 551.5h0M204.5 554.5h0M205.5 508.5h0M205.5 512.5h0M205.5 539.5h0M206.5 498.5h0M206.5 510.5h0M206.5 548.5h0M207.5 541.5h0M207.5 542.5h0M207.5 549.5h0M208.5 499.5h0M208.5 508.5h0M208.5 513.5h0M208.5 539.5h0M208.5 541.5h0M208.5 545.5h0M208.5 551.5h0M209.5 497.5h0M209.5 503.5h0M209.5 512.5h0M209.5 542.5h0M209.5 545.5h0M209.5 546.5h0M210.5 508.5h0M210.5 514.5h0M210.5 539.5h0M210.5 552.5h0M210.5 556.5h0M211.5 511.5h0M211.5 514.5h0M211.5 540.5h0M211.5 543.5h0M211.5 547.5h0M212.5 495.5h0M212.5 502.5h0M212.5 509.5h0M212.5 539.5h0M212.5 540.5h0M212.5 552.5h0M213.5 502.5h0M213.5 506.5h0M213.5 509.5h0M213.5 512.5h0M213.5 545.5h0M213.5 547.5h0M213.5 553.5h0M214.5 503.5h0M214.5 504.5h0M214.5 507.5h0M214.5 513.5h0M214.5 539.5h0M214.5 541.5h0M214.5 543.5h0M214.5 545.5h0M214.5 550.5h0M214.5 556.5h0M215.5 499.5h0M215.5 505.5h0M215.5 510.5h0M215.5 512.5h0M215.5 513.5h0M215.5 543.5h0M216.5 499.5h0M216.5 508.5h0M216.5 509.5h0M216.5 540.5h0M216.5 541.5h0M216.5 542.5h0M216.5 543.5h0M216.5 545.5h0M217.5 504.5h0M217.5 505.5h0M217.5 512.5h0M217.5 513.5h0M217.5 543.5h0M217.5 544.5h0M217.5 557.5h0M218.5 499.5h0M218.5 507.5h0M218.5 514.5h0M218.5 554.5h0M219.5 500.5h0M219.5 502.5h0M219.5 505.5h0M219.5 512.5h0M219.5 540.5h0M219.5 544.5h0M219.5 550.5h0M220.5 498.5h0M220.5 540.5h0M220.5 544.5h0M220.5 545.5h0M220.5 550.5h0M220.5 552.5h0M221.5 503.5h0M221.5 504.5h0M221.5 505.5h0M221.5 513.5h0M221.5 546.5h0M222.5 494.5h0M222.5 509.5h0M222.5 510.5h0M222.5 511.5h0M222.5 512.5h0M222.5 514.5h0M222.5 547.5h0M222.5 549.5h0M222.5 552.5h0M223.5 505.5h0M223.5 506.5h0M223.5 507.5h0M223.5 508.5h0M223.5 510.5h0M223.5 511.5h0M223.5 513.5h0M223.5 543.5h0M223.5 545.5h0M223.5 546.5h0M223.5 550.5h0M224.5 497.5h0M224.5 510.5h0M224.5 511.5h0M224.5 513.5h0M224.5 539.5h0M224.5 555.5h0M224.5 558.5h0M225.5 498.5h0M225.5 511.5h0M225.5 512.5h0M225.5 514.5h0M225.5 551.5h0M226.5 501.5h0M226.5 505.5h0M226.5 507.5h0M226.5 508.5h0M226.5 512.5h0M226.5 544.5h0M226.5 549.5h0M226.5 550.5h0M227.5 496.5h0M227.5 498.5h0M227.5 501.5h0M227.5 513.5h0M227.5 541.5h0M227.5 542.5h0M227.5 547.5h0M227.5 555.5h0M228.5 507.5h0M228.5 510.5h0M228.5 512.5h0M228.5 513.5h0M228.5 543.5h0M228.5 546.5h0M229.5 500.5h0M229.5 508.5h0M229.5 510.5h0M229.5 541.5h0M229.5 552.5h0M230.5 503.5h0M230.5 505.5h0M230.5 508.5h0M230.5 514.5h0M230.5 540.5h0M230.5 545.5h0M230.5 547.5h0M230.5 552.5h0M231.5 539.5h0M231.5 543.5h0M231.5 546.5h0M232.5 512.5h0M232.5 513.5h0M232.5 547.5h0M232.5 548.5h0M232.5 552.5h0M232.5 555.5h0M233.5 499.5h0M233.5 502.5h0M233.5 506.5h0M233.5 514.5h0M233.5 541.5h0M233.5 545.5h0M233.5 547.5h0M234.5 500.5h0M234.5 502.5h0M234.5 505.5h0M234.5 509.5h0M234.5 511.5h0M234.5 540.5h0M234.5 545.5h0M234.5 546.5h0M234.5 549.5h0M235.5 513.5h0M235.5 541.5h0M235.5 547.5h0M235.5 557.5h0M236.5 507.5h0M236.5 540.5h0M236.5 541.5h0M236.5 545.5h0M236.5 547.5h0M237.5 507.5h0M237.5 509.5h0M237.5 542.5h0M237.5 543.5h0M237.5 546.5h0M237.5 549.5h0M237.5 551.5h0M238.5 502.5h0M238.5 511.5h0M238.5 512.5h0M238.5 513.5h0M238.5 542.5h0M238.5 543.5h0M238.5 544.5h0M238.5 550.5h0M238.5 556.5h0M239.5 499.5h0M239.5 500.5h0M239.5 508.5h0M239.5 511.5h0M239.5 539.5h0M239.5 541.5h0M239.5 545.5h0M239.5 547.5h0M239.5 549.5h0M239.5 554.5h0M240.5 501.5h0M240.5 508.5h0M240.5 513.5h0M240.5 514.5h0M240.5 554.5h0M241.5 501.5h0M241.5 504.5h0M241.5 507.5h0M241.5 509.5h0M241.5 513.5h0M241.5 539.5h0M242.5 540.5h0M242.5 548.5h0M243.5 501.5h0M243.5 503.5h0M243.5 507.5h0M243.5 510.5h0M243.5 514.5h0M243.5 540.5h0M243.5 541.5h0M243.5 543.5h0M243.5 546.5h0M243.5 548.5h0M243.5 551.5h0M243.5 552.5h0M244.5 500.5h0M244.5 502.5h0M244.5 512.5h0M244.5 513.5h0M244.5 539.5h0M244.5 548.5h0M244.5 551.5h0M244.5 554.5h0M245.5 503.5h0M245.5 513.5h0M245.5 547.5h0M246.5 506.5h0M246.5 512.5h0M246.5 540.5h0M247.5 506.5h0M247.5 508.5h0M247.5 512.5h0M247.5 539.5h0M247.5 541.5h0M247.5 542.5h0M247.5 551.5h0M248.5 496.5h0M248.5 505.5h0M248.5 513.5h0M248.5 514.5h0M248.5 539.5h0M248.5 540.5h0M248.5 541.5h0M248.5 544.5h0M248.5 553.5h0M249.5 506.5h0M249.5 508.5h0M249.5 512.5h0M249.5 539.5h0M249.5 545.5h0M249.5 549.5h0M249.5 551.5h0M249.5 553.5h0M250.5 512.5h0M250.5 513.5h0M250.5 540.5h0M250.5 541.5h0M250.5 550.5h0M251.5 502.5h0M251.5 504.5h0M251.5 505.5h0M251.5 513.5h0M251.5 539.5h0M251.5 540.5h0M251.5 545.5h0M251.5 546.5h0M251.5 549.5h0M251.5 550.5h0M251.5 553.5h0M252.5 506.5h0M252.5 511.5h0M252.5 539.5h0M252.5 544.5h0M252.5 555.5h0M253.5 497.5h0M253.5 502.5h0M253.5 507.5h0M253.5 508.5h0M253.5 512.5h0M253.5 539.5h0M253.5 540.5h0M253.5 541.5h0M253.5 544.5h0M253.5 546.5h0M253.5 549.5h0M254.5 506.5h0M254.5 507.5h0M254.5 510.5h0M254.5 514.5h0M255.5 510.5h0M255.5 539.5h0M255.5 541.5h0M255.5 543.5h0M255.5 555.5h0M256.5 494.5h0M256.5 497.5h0M256.5 503.5h0M256.5 509.5h0M256.5 512.5h0M256.5 514.5h0M256.5 547.5h0M256.5 553.5h0M257.5 502.5h0M257.5 511.5h0M257.5 513.5h0M257.5 514.5h0M257.5 539.5h0M257.5 544.5h0M257.5 546.5h0M257.5 549.5h0M258.5 544.5h0M258.5 550.5h0M258.5 553.5h0M259.5 499.5h0M259.5 501.5h0M259.5 503.5h0M259.5 504.5h0M259.5 505.5h0M259.5 506.5h0M259.5 509.5h0M260.5 511.5h0M260.5 514.5h0M260.5 539.5h0M260.5 545.5h0M260.5 551.5h0M260.5 554.5h0M260.5 556.5h0M261.5 501.5h0M261.5 503.5h0M261.5 504.5h0M261.5 511.5h0M261.5 514.5h0M261.5 543.5h0M261.5 547.5h0M261.5 553.5h0M262.5 509.5h0M262.5 541.5h0M262.5 543.5h0M262.5 544.5h0M262.5 545.5h0M263.5 499.5h0M263.5 501.5h0M263.5 539.5h0M263.5 544.5h0M264.5 511.5h0M264.5 513.5h0M264.5 539.5h0M264.5 541.5h0M264.5 548.5h0M264.5 549.5h0M265.5 503.5h0M265.5 509.5h0M265.5 514.5h0M265.5 542.5h0M265.5 546.5h0M265.5 549.5h0M265.5 550.5h0M265.5 554.5h0M266.5 504.5h0M266.5 513.5h0M266.5 514.5h0M266.5 540.5h0M266.5 541.5h0M266.5 543.5h0M266.5 547.5h0M266.5 553.5h0M267.5 504.5h0M267.5 505.5h0M267.5 506.5h0M267.5 514.5h0M267.5 539.5h0M268.5 505.5h0M268.5 507.5h0M268.5 510.5h0M268.5 511.5h0M268.5 514.5h0M268.5 540.5h0M268.5 542.5h0M268.5 546.5h0M269.5 509.5h0M269.5 512.5h0M269.5 541.5h0M269.5 545.5h0M269.5 547.5h0M269.5 549.5h0M269.5 550.5h0M269.5 552.5h0M270.5 539.5h0M270.5 541.5h0M270.5 544.5h0M271.5 502.5h0M271.5 505.5h0M271.5 506.5h0M271.5 508.5h0M271.5 511.5h0M272.5 508.5h0M272.5 509.5h0M272.5 513.5h0M272.5 544.5h0M272.5 546.5h0M272.5 551.5h0M272.5 556.5h0M273.5 500.5h0M273.5 506.5h0M273.5 539.5h0M273.5 541.5h0M273.5 543.5h0M274.5 504.5h0M274.5 507.5h0M274.5 511.5h0M274.5 512.5h0M274.5 552.5h0M274.5 556.5h0M274.5 557.5h0M275.5 513.5h0M275.5 543.5h0M275.5 549.5h0M276.5 501.5h0M276.5 508.5h0M276.5 540.5h0M276.5 542.5h0M276.5 543.5h0M276.5 544.5h0M277.5 503.5h0M277.5 507.5h0M277.5 510.5h0M277.5 514.5h0M278.5 510.5h0M278.5 511.5h0M278.5 513.5h0M278.5 546.5h0M279.5 505.5h0M279.5 508.5h0M279.5 509.5h0M279.5 510.5h0M279.5 513.5h0M279.5 539.5h0M279.5 546.5h0M279.5 551.5h0M279.5 553.5h0M279.5 554.5h0M280.5 500.5h0M280.5 506.5h0M280.5 508.5h0M280.5 539.5h0M280.5 545.5h0M281.5 539.5h0M281.5 542.5h0M281.5 544.5h0M281.5 547.5h0M282.5 499.5h0M282.5 505.5h0M282.5 512.5h0M282.5 539.5h0M282.5 545.5h0M282.5 557.5h0M283.5 504.5h0M283.5 507.5h0M283.5 508.5h0M283.5 511.5h0M283.5 513.5h0M283.5 539.5h0M283.5 540.5h0M283.5 547.5h0M284.5 504.5h0M284.5 505.5h0M284.5 506.5h0M284.5 507.5h0M284.5 539.5h0M284.5 546.5h0M285.5 500.5h0M285.5 507.5h0M285.5 511.5h0M285.5 512.5h0M285.5 545.5h0M285.5 548.5h0M286.5 503.5h0M286.5 511.5h0M286.5 539.5h0M286.5 544.5h0M287.5 499.5h0M287.5 502.5h0M287.5 506.5h0M287.5 508.5h0M287.5 510.5h0M287.5 512.5h0M287.5 543.5h0M287.5 546.5h0M288.5 505.5h0M288.5 510.5h0M288.5 512.5h0M288.5 514.5h0M288.5 539.5h0M288.5 548.5h0M288.5 553.5h0M289.5 495.5h0M289.5 498.5h0M289.5 503.5h0M289.5 507.5h0M289.5 509.5h0M289.5 511.5h0M289.5 512.5h0M289.5 539.5h0M289.5 542.5h0M289.5 543.5h0M289.5 548.5h0M289.5 550.5h0M290.5 494.5h0M290.5 502.5h0M290.5 503.5h0M290.5 504.5h0M290.5 509.5h0M290.5 510.5h0M290.5 511.5h0M290.5 512.5h0M290.5 514.5h0M290.5 541.5h0M290.5 542.5h0M290.5 551.5h0M291.5 500.5h0M291.5 502.5h0M291.5 508.5h0M291.5 513.5h0M291.5 514.5h0M291.5 542.5h0M291.5 543.5h0M291.5 550.5h0M291.5 552.5h0M291.5 556.5h0M292.5 497.5h0M292.5 508.5h0M292.5 509.5h0M292.5 539.5h0M292.5 547.5h0M292.5 551.5h0M293.5 497.5h0M293.5 508.5h0M293.5 510.5h0M293.5 513.5h0M293.5 540.5h0M293.5 544.5h0M294.5 504.5h0M294.5 509.5h0M294.5 548.5h0M294.5 549.5h0M295.5 495.5h0M295.5 505.5h0M295.5 509.5h0M295.5 510.5h0M295.5 511.5h0M295.5 539.5h0M295.5 545.5h0M295.5 552.5h0M296.5 500.5h0M296.5 505.5h0M296.5 507.5h0M296.5 512.5h0M296.5 549.5h0M297.5 508.5h0M297.5 540.5h0M297.5 547.5h0M297.5 548.5h0M297.5 553.5h0M297.5 554.5h0M297.5 555.5h0M298.5 498.5h0M298.5 502.5h0M298.5 513.5h0M298.5 539.5h0M298.5 542.5h0M298.5 543.5h0M298.5 544.5h0M298.5 551.5h0M299.5 503.5h0M299.5 513.5h0M299.5 541.5h0M299.5 542.5h0M299.5 547.5h0M299.5 548.5h0M300.5 495.5h0M300.5 499.5h0M300.5 506.5h0M300.5 510.5h0M300.5 511.5h0M300.5 513.5h0M300.5 541.5h0M300.5 546.5h0M300.5 556.5h0M301.5 504.5h0M301.5 509.5h0M301.5 512.5h0M301.5 514.5h0M301.5 543.5h0M301.5 548.5h0M301.5 549.5h0M301.5 553.5h0M302.5 497.5h0M302.5 503.5h0M302.5 504.5h0M302.5 508.5h0M302.5 540.5h0M302.5 541.5h0M303.5 504.5h0M303.5 508.5h0M303.5 510.5h0M303.5 547.5h0M303.5 548.5h0M303.5 552.5h0M304.5 510.5h0M304.5 512.5h0M304.5 513.5h0M304.5 539.5h0M304.5 546.5h0M304.5 551.5h0M305.5 500.5h0M305.5 504.5h0M305.5 512.5h0M305.5 540.5h0M305.5 542.5h0M305.5 545.5h0M305.5 546.5h0M305.5 550.5h0M305.5 551.5h0M305.5 554.5h0M306.5 506.5h0M306.5 544.5h0M306.5 546.5h0M306.5 553.5h0M306.5 555.5h0M307.5 501.5h0M307.5 503.5h0M307.5 505.5h0M307.5 508.5h0M307.5 509.5h0M307.5 510.5h0M307.5 511.5h0M307.5 512.5h0M307.5 513.5h0M307.5 542.5h0M307.5 548.5h0M308.5 500.5h0M308.5 501.5h0M308.5 502.5h0M308.5 512.5h0M308.5 513.5h0M308.5 514.5h0M308.5 539.5h0M308.5 542.5h0M308.5 546.5h0M308.5 555.5h0M309.5 502.5h0M309.5 503.5h0M309.5 514.5h0M309.5 540.5h0M309.5 543.5h0M309.5 547.5h0M309.5 550.5h0M309.5 552.5h0M310.5 500.5h0M310.5 504.5h0M310.5 506.5h0M310.5 511.5h0M310.5 512.5h0M310.5 513.5h0M310.5 539.5h0M310.5 551.5h0M310.5 552.5h0M311.5 498.5h0M311.5 506.5h0M311.5 540.5h0M311.5 547.5h0M312.5 508.5h0M312.5 509.5h0M312.5 549.5h0M313.5 505.5h0M313.5 511.5h0M313.5 540.5h0M313.5 548.5h0M314.5 507.5h0M314.5 513.5h0M314.5 540.5h0M314.5 547.5h0M314.5 553.5h0M315.5 503.5h0M315.5 505.5h0M315.5 511.5h0M315.5 512.5h0M315.5 513.5h0M315.5 540.5h0M315.5 541.5h0M315.5 543.5h0M315.5 548.5h0M316.5 502.5h0M316.5 511.5h0M316.5 513.5h0M316.5 539.5h0M317.5 497.5h0M317.5 511.5h0M317.5 512.5h0M317.5 513.5h0M317.5 543.5h0M317.5 552.5h0M318.5 505.5h0M318.5 508.5h0M318.5 511.5h0M318.5 513.5h0M318.5 539.5h0M318.5 546.5h0M318.5 556.5h0M319.5 504.5h0M319.5 507.5h0M319.5 509.5h0M319.5 539.5h0M319.5 546.5h0M319.5 549.5h0M319.5 550.5h0M319.5 554.5h0M320.5 498.5h0M320.5 506.5h0M320.5 510.5h0M320.5 543.5h0M320.5 544.5h0M320.5 547.5h0M320.5 550.5h0M320.5 551.5h0M320.5 552.5h0M321.5 512.5h0M321.5 540.5h0M321.5 541.5h0M321.5 545.5h0M322.5 496.5h0M322.5 499.5h0M322.5 509.5h0M322.5 511.5h0M322.5 514.5h0M322.5 541.5h0M322.5 543.5h0M322.5 547.5h0M322.5 549.5h0M323.5 510.5h0M323.5 540.5h0M323.5 541.5h0M323.5 542.5h0M324.5 504.5h0M324.5 505.5h0M324.5 509.5h0M324.5 512.5h0M324.5 539.5h0M324.5 543.5h0M324.5 545.5h0M324.5 546.5h0M325.5 539.5h0M325.5 540.5h0M325.5 542.5h0M325.5 548.5h0M325.5 550.5h0M326.5 500.5h0M326.5 539.5h0M326.5 543.5h0M326.5 547.5h0M326.5 549.5h0M326.5 551.5h0M327.5 500.5h0M327.5 512.5h0M327.5 513.5h0M327.5 544.5h0M327.5 549.5h0M328.5 500.5h0M328.5 510.5h0M328.5 540.5h0M328.5 548.5h0M329.5 502.5h0M329.5 513.5h0M329.5 514.5h0M329.5 543.5h0M329.5 550.5h0M329.5 553.5h0M330.5 496.5h0M330.5 500.5h0M330.5 501.5h0M330.5 513.5h0M330.5 546.5h0M331.5 509.5h0M331.5 510.5h0M331.5 513.5h0M331.5 514.5h0M331.5 542.5h0M331.5 544.5h0M331.5 547.5h0M331.5 555.5h0M332.5 507.5h0M332.5 509.5h0M332.5 513.5h0M332.5 514.5h0M332.5 548.5h0M332.5 549.5h0M332.5 552.5h0M333.5 503.5h0M333.5 507.5h0M333.5 511.5h0M333.5 539.5h0M333.5 542.5h0M333.5 545.5h0M334.5 503.5h0M334.5 511.5h0M334.5 540.5h0M334.5 542.5h0M334.5 545.5h0M334.5 550.5h0M335.5 505.5h0M335.5 508.5h0M335.5 509.5h0M335.5 546.5h0M335.5 553.5h0M336.5 504.5h0M336.5 507.5h0M336.5 508.5h0M336.5 539.5h0M336.5 542.5h0M336.5 543.5h0M336.5 552.5h0M337.5 505.5h0M337.5 506.5h0M337.5 507.5h0M337.5 508.5h0M337.5 510.5h0M337.5 512.5h0M337.5 547.5h0M337.5 550.5h0M338.5 509.5h0M338.5 510.5h0M338.5 546.5h0M338.5 553.5h0M339.5 506.5h0M339.5 507.5h0M339.5 511.5h0M339.5 513.5h0M339.5 540.5h0M339.5 549.5h0M339.5 551.5h0M339.5 555.5h0M340.5 505.5h0M340.5 506.5h0M340.5 509.5h0M340.5 511.5h0M340.5 514.5h0M340.5 541.5h0M340.5 544.5h0M340.5 547.5h0M340.5 550.5h0M340.5 554.5h0M341.5 502.5h0M341.5 506.5h0M341.5 544.5h0M341.5 547.5h0M341.5 553.5h0M342.5 505.5h0M342.5 513.5h0M342.5 539.5h0M342.5 546.5h0M342.5 552.5h0M342.5 553.5h0M343.5 511.5h0M343.5 512.5h0M343.5 542.5h0M343.5 552.5h0M344.5 510.5h0M344.5 512.5h0M344.5 540.5h0M344.5 545.5h0M344.5 546.5h0M344.5 552.5h0M344.5 557.5h0M345.5 496.5h0M345.5 499.5h0M345.5 501.5h0M345.5 503.5h0M345.5 546.5h0M345.5 549.5h0M346.5 499.5h0M346.5 505.5h0M346.5 509.5h0M346.5 511.5h0M346.5 514.5h0M346.5 544.5h0M346.5 548.5h0M346.5 549.5h0M346.5 550.5h0M347.5 496.5h0M347.5 499.5h0M347.5 504.5h0M347.5 509.5h0M347.5 511.5h0M347.5 512.5h0M347.5 514.5h0M347.5 540.5h0M347.5 546.5h0M348.5 505.5h0M348.5 539.5h0M348.5 540.5h0M348.5 548.5h0M348.5 552.5h0M348.5 556.5h0M349.5 497.5h0M349.5 501.5h0M349.5 506.5h0M349.5 513.5h0M349.5 544.5h0M349.5 548.5h0M350.5 513.5h0M350.5 539.5h0M350.5 541.5h0M350.5 544.5h0M351.5 493.5h0M351.5 496.5h0M351.5 502.5h0M351.5 506.5h0M351.5 511.5h0M351.5 512.5h0M351.5 513.5h0M351.5 541.5h0M352.5 497.5h0M352.5 507.5h0M352.5 508.5h0M352.5 510.5h0M352.5 511.5h0M352.5 514.5h0M352.5 539.5h0M352.5 540.5h0M352.5 543.5h0M352.5 544.5h0M352.5 545.5h0M353.5 499.5h0M353.5 510.5h0M353.5 514.5h0M353.5 539.5h0M353.5 540.5h0M353.5 547.5h0M353.5 554.5h0M354.5 506.5h0M354.5 511.5h0M354.5 540.5h0M354.5 546.5h0M355.5 496.5h0M355.5 498.5h0M355.5 501.5h0M355.5 510.5h0M355.5 511.5h0M355.5 512.5h0M355.5 539.5h0M355.5 541.5h0M355.5 544.5h0M355.5 551.5h0M355.5 553.5h0M356.5 507.5h0M356.5 510.5h0M357.5 498.5h0M357.5 500.5h0M357.5 502.5h0M357.5 543.5h0M357.5 544.5h0M357.5 551.5h0M358.5 505.5h0M358.5 509.5h0M358.5 510.5h0M358.5 511.5h0M358.5 514.5h0M358.5 539.5h0M358.5 541.5h0M359.5 498.5h0M359.5 501.5h0M359.5 502.5h0M359.5 504.5h0M359.5 509.5h0M359.5 510.5h0M359.5 512.5h0M359.5 514.5h0M359.5 543.5h0M359.5 551.5h0M360.5 496.5h0M360.5 500.5h0M360.5 502.5h0M360.5 511.5h0M360.5 541.5h0M360.5 543.5h0M360.5 544.5h0M360.5 546.5h0M361.5 499.5h0M361.5 500.5h0M361.5 503.5h0M361.5 507.5h0M361.5 512.5h0M361.5 513.5h0M361.5 539.5h0M361.5 541.5h0M361.5 542.5h0M361.5 547.5h0M362.5 509.5h0M362.5 511.5h0M362.5 514.5h0M362.5 546.5h0M362.5 547.5h0M362.5 550.5h0M362.5 557.5h0M363.5 501.5h0M363.5 505.5h0M363.5 508.5h0M363.5 539.5h0M363.5 540.5h0M363.5 542.5h0M363.5 543.5h0M363.5 544.5h0M363.5 549.5h0M363.5 552.5h0M363.5 556.5h0M364.5 503.5h0M364.5 509.5h0M364.5 510.5h0M364.5 511.5h0M364.5 514.5h0M364.5 542.5h0M364.5 543.5h0M364.5 551.5h0M365.5 503.5h0M365.5 509.5h0M365.5 513.5h0M365.5 541.5h0M365.5 550.5h0M365.5 552.5h0M366.5 505.5h0M366.5 506.5h0M366.5 513.5h0M366.5 514.5h0M366.5 539.5h0M366.5 550.5h0M367.5 499.5h0M367.5 506.5h0M367.5 511.5h0M367.5 514.5h0M367.5 555.5h0M367.5 556.5h0M368.5 506.5h0M368.5 510.5h0M368.5 513.5h0M368.5 554.5h0M369.5 495.5h0M369.5 501.5h0M369.5 503.5h0M369.5 506.5h0M369.5 511.5h0M369.5 514.5h0M369.5 539.5h0M369.5 542.5h0M369.5 544.5h0M369.5 550.5h0M369.5 554.5h0M370.5 499.5h0M370.5 500.5h0M370.5 502.5h0M370.5 505.5h0M370.5 508.5h0M370.5 513.5h0M370.5 541.5h0M370.5 542.5h0M370.5 549.5h0M370.5 550.5h0M370.5 551.5h0M370.5 555.5h0M371.5 500.5h0M371.5 507.5h0M371.5 510.5h0M371.5 514.5h0M371.5 541.5h0M371.5 542.5h0M371.5 543.5h0M371.5 551.5h0M372.5 502.5h0M372.5 509.5h0M372.5 512.5h0M372.5 513.5h0M372.5 539.5h0M372.5 547.5h0M372.5 548.5h0M373.5 509.5h0M373.5 544.5h0M373.5 551.5h0M373.5 556.5h0M374.5 503.5h0M374.5 504.5h0M374.5 506.5h0M374.5 510.5h0M374.5 539.5h0M374.5 540.5h0M375.5 513.5h0M375.5 544.5h0M376.5 498.5h0M376.5 500.5h0M376.5 510.5h0M376.5 513.5h0M376.5 541.5h0M376.5 542.5h0M376.5 549.5h0M377.5 507.5h0M377.5 510.5h0M377.5 513.5h0M377.5 543.5h0M377.5 544.5h0M377.5 552.5h0M378.5 498.5h0M378.5 499.5h0M378.5 504.5h0M378.5 514.5h0M379.5 499.5h0M379.5 504.5h0M379.5 509.5h0M379.5 540.5h0M379.5 543.5h0M379.5 544.5h0M379.5 546.5h0M379.5 550.5h0M379.5 554.5h0M380.5 499.5h0M380.5 539.5h0M380.5 544.5h0M381.5 501.5h0M381.5 502.5h0M381.5 503.5h0M381.5 510.5h0M381.5 511.5h0M381.5 545.5h0M382.5 506.5h0M382.5 509.5h0M382.5 510.5h0M382.5 544.5h0M383.5 512.5h0M383.5 540.5h0M383.5 541.5h0M383.5 547.5h0M384.5 493.5h0M384.5 498.5h0M384.5 509.5h0M384.5 543.5h0M385.5 509.5h0M385.5 512.5h0M385.5 513.5h0M385.5 542.5h0M386.5 503.5h0M386.5 508.5h0M386.5 509.5h0M386.5 512.5h0M386.5 514.5h0M386.5 543.5h0M386.5 545.5h0M386.5 551.5h0M387.5 497.5h0M387.5 499.5h0M387.5 508.5h0M387.5 513.5h0M387.5 539.5h0M387.5 541.5h0M387.5 545.5h0M387.5 549.5h0M387.5 554.5h0M388.5 499.5h0M388.5 501.5h0M388.5 502.5h0M388.5 507.5h0M388.5 513.5h0M388.5 514.5h0M388.5 541.5h0M388.5 543.5h0M389.5 498.5h0M389.5 507.5h0M389.5 508.5h0M389.5 509.5h0M389.5 513.5h0M389.5 541.5h0M389.5 542.5h0M389.5 545.5h0M389.5 547.5h0M390.5 507.5h0M390.5 510.5h0M390.5 539.5h0M390.5 543.5h0M390.5 545.5h0M391.5 508.5h0M391.5 511.5h0M391.5 514.5h0M391.5 541.5h0M391.5 543.5h0M391.5 544.5h0M391.5 550.5h0M392.5 506.5h0M392.5 512.5h0M392.5 542.5h0M392.5 544.5h0M392.5 548.5h0M393.5 498.5h0M393.5 501.5h0M393.5 512.5h0M393.5 514.5h0M393.5 541.5h0M393.5 545.5h0M393.5 550.5h0M394.5 502.5h0M394.5 505.5h0M394.5 506.5h0M394.5 507.5h0M394.5 508.5h0M394.5 510.5h0M394.5 511.5h0M394.5 539.5h0M394.5 544.5h0M394.5 545.5h0M394.5 547.5h0M394.5 548.5h0M395.5 505.5h0M395.5 539.5h0M396.5 499.5h0M396.5 510.5h0M396.5 512.5h0M396.5 513.5h0M396.5 543.5h0M396.5 544.5h0M397.5 496.5h0M397.5 498.5h0M397.5 500.5h0M397.5 508.5h0M397.5 509.5h0M397.5 512.5h0M397.5 544.5h0M397.5 549.5h0M398.5 498.5h0M398.5 513.5h0M398.5 540.5h0M398.5 541.5h0M398.5 547.5h0M398.5 548.5h0M399.5 501.5h0M399.5 502.5h0M399.5 507.5h0M399.5 512.5h0M399.5 545.5h0M399.5 551.5h0M399.5 553.5h0M400.5 514.5h0M400.5 551.5h0M401.5 495.5h0M401.5 506.5h0M401.5 511.5h0M401.5 512.5h0M401.5 513.5h0M401.5 539.5h0M401.5 540.5h0M401.5 543.5h0M401.5 552.5h0M402.5 504.5h0M402.5 507.5h0M402.5 512.5h0M402.5 514.5h0M402.5 539.5h0M402.5 542.5h0M402.5 547.5h0M402.5 552.5h0M402.5 555.5h0M403.5 501.5h0M403.5 504.5h0M403.5 506.5h0M403.5 513.5h0M403.5 540.5h0M403.5 545.5h0M403.5 548.5h0M404.5 504.5h0M404.5 506.5h0M404.5 513.5h0M404.5 543.5h0M405.5 498.5h0M405.5 505.5h0M405.5 509.5h0M405.5 514.5h0M405.5 546.5h0M405.5 547.5h0M406.5 496.5h0M406.5 501.5h0M406.5 505.5h0M406.5 514.5h0M406.5 541.5h0M406.5 542.5h0M406.5 549.5h0M407.5 507.5h0M407.5 508.5h0M407.5 539.5h0M407.5 540.5h0M407.5 541.5h0M407.5 542.5h0M407.5 549.5h0M408.5 507.5h0M408.5 509.5h0M408.5 510.5h0M408.5 513.5h0M408.5 541.5h0M408.5 546.5h0M408.5 550.5h0M409.5 508.5h0M409.5 510.5h0M409.5 542.5h0M409.5 544.5h0M410.5 510.5h0M410.5 511.5h0M410.5 514.5h0M410.5 539.5h0M410.5 542.5h0M410.5 543.5h0M410.5 547.5h0M410.5 552.5h0M411.5 511.5h0M411.5 513.5h0M411.5 543.5h0M411.5 548.5h0M411.5 550.5h0M412.5 499.5h0M412.5 511.5h0M412.5 513.5h0M412.5 514.5h0M412.5 541.5h0M412.5 547.5h0M412.5 548.5h0M412.5 555.5h0M413.5 497.5h0M413.5 501.5h0M413.5 504.5h0M413.5 514.5h0M413.5 539.5h0M413.5 543.5h0M413.5 550.5h0M413.5 551.5h0M414.5 498.5h0M414.5 506.5h0M414.5 514.5h0M414.5 539.5h0M414.5 540.5h0M414.5 544.5h0M414.5 546.5h0M414.5 549.5h0M414.5 551.5h0M414.5 552.5h0M415.5 501.5h0M415.5 505.5h0M415.5 506.5h0M415.5 511.5h0M415.5 514.5h0M415.5 539.5h0M415.5 540.5h0M415.5 545.5h0M415.5 546.5h0M415.5 554.5h0M416.5 505.5h0M416.5 506.5h0M416.5 507.5h0M416.5 509.5h0M416.5 512.5h0M416.5 542.5h0M416.5 543.5h0M416.5 549.5h0M417.5 495.5h0M417.5 498.5h0M417.5 508.5h0M417.5 510.5h0M417.5 514.5h0M417.5 539.5h0M417.5 541.5h0M417.5 543.5h0M417.5 544.5h0M417.5 555.5h0M418.5 513.5h0M418.5 542.5h0M418.5 543.5h0M418.5 544.5h0M419.5 502.5h0M419.5 504.5h0M419.5 506.5h0M420.5 496.5h0M420.5 505.5h0M420.5 513.5h0M420.5 540.5h0M420.5 541.5h0M420.5 543.5h0M420.5 545.5h0M420.5 547.5h0M420.5 554.5h0M421.5 504.5h0M421.5 508.5h0M421.5 511.5h0M421.5 512.5h0M421.5 513.5h0M421.5 540.5h0M421.5 545.5h0M421.5 546.5h0M421.5 551.5h0M422.5 499.5h0M422.5 508.5h0M422.5 510.5h0M422.5 513.5h0M422.5 540.5h0M422.5 545.5h0M423.5 502.5h0M423.5 506.5h0M423.5 543.5h0M423.5 544.5h0M423.5 554.5h0M423.5 557.5h0M424.5 511.5h0M424.5 514.5h0M424.5 539.5h0M424.5 540.5h0M424.5 541.5h0M424.5 543.5h0M424.5 549.5h0M424.5 553.5h0M425.5 496.5h0M425.5 498.5h0M425.5 502.5h0M425.5 508.5h0M425.5 509.5h0M425.5 511.5h0M425.5 512.5h0M425.5 540.5h0M425.5 541.5h0M425.5 543.5h0M426.5 502.5h0M426.5 510.5h0M426.5 511.5h0M426.5 512.5h0M426.5 513.5h0M426.5 514.5h0M426.5 539.5h0M426.5 541.5h0M426.5 556.5h0M427.5 509.5h0M427.5 510.5h0M427.5 513.5h0M427.5 540.5h0M427.5 542.5h0M427.5 544.5h0M427.5 546.5h0M427.5 547.5h0M427.5 551.5h0M427.5 552.5h0M428.5 547.5h0M429.5 504.5h0M429.5 506.5h0M429.5 539.5h0M429.5 552.5h0M429.5 553.5h0M430.5 499.5h0M430.5 511.5h0M430.5 513.5h0M430.5 541.5h0M430.5 542.5h0M431.5 501.5h0M431.5 503.5h0M431.5 508.5h0M431.5 543.5h0M431.5 544.5h0M431.5 548.5h0M431.5 549.5h0M431.5 551.5h0M432.5 501.5h0M432.5 504.5h0M432.5 505.5h0M432.5 508.5h0M432.5 510.5h0M432.5 513.5h0M432.5 514.5h0M432.5 543.5h0M432.5 554.5h0M432.5 555.5h0M433.5 511.5h0M433.5 514.5h0M433.5 541.5h0M433.5 542.5h0M433.5 543.5h0M433.5 553.5h0M433.5 555.5h0M434.5 501.5h0M434.5 508.5h0M434.5 510.5h0M434.5 512.5h0M434.5 540.5h0M434.5 542.5h0M434.5 547.5h0M434.5 550.5h0M434.5 552.5h0M435.5 504.5h0M435.5 511.5h0M435.5 539.5h0M435.5 545.5h0M435.5 549.5h0M435.5 550.5h0M436.5 503.5h0M436.5 509.5h0M436.5 513.5h0M436.5 539.5h0M436.5 541.5h0M436.5 546.5h0M436.5 551.5h0M436.5 552.5h0M437.5 503.5h0M437.5 511.5h0M437.5 512.5h0M437.5 514.5h0M437.5 540.5h0M437.5 543.5h0M437.5 549.5h0M438.5 506.5h0M438.5 511.5h0M438.5 513.5h0M438.5 547.5h0M438.5 548.5h0M439.5 499.5h0M439.5 508.5h0M439.5 510.5h0M439.5 514.5h0M439.5 539.5h0M439.5 548.5h0M440.5 505.5h0M440.5 508.5h0M440.5 539.5h0M440.5 541.5h0M440.5 542.5h0M440.5 546.5h0M440.5 549.5h0M440.5 551.5h0M441.5 505.5h0M441.5 511.5h0M441.5 514.5h0M441.5 540.5h0M441.5 542.5h0M441.5 543.5h0M441.5 544.5h0M442.5 500.5h0M442.5 501.5h0M442.5 505.5h0M442.5 510.5h0M442.5 511.5h0M442.5 514.5h0M442.5 539.5h0M442.5 540.5h0M442.5 542.5h0M442.5 544.5h0M442.5 550.5h0M443.5 502.5h0M443.5 503.5h0M443.5 508.5h0M443.5 509.5h0M443.5 510.5h0M443.5 511.5h0M443.5 514.5h0M443.5 541.5h0M443.5 550.5h0M444.5 504.5h0M444.5 507.5h0M444.5 511.5h0M444.5 541.5h0M444.5 542.5h0M444.5 547.5h0M445.5 502.5h0M445.5 503.5h0M445.5 505.5h0M445.5 511.5h0M445.5 542.5h0M446.5 498.5h0M446.5 502.5h0M446.5 505.5h0M446.5 510.5h0M446.5 541.5h0M446.5 545.5h0M446.5 547.5h0M446.5 549.5h0M446.5 552.5h0M447.5 502.5h0M447.5 504.5h0M447.5 509.5h0M447.5 539.5h0M447.5 547.5h0M448.5 495.5h0M448.5 508.5h0M448.5 513.5h0M448.5 514.5h0M448.5 548.5h0M449.5 499.5h0M449.5 502.5h0M449.5 506.5h0M449.5 512.5h0M449.5 513.5h0M449.5 514.5h0M449.5 551.5h0M450.5 503.5h0M450.5 505.5h0M450.5 507.5h0M450.5 513.5h0M450.5 540.5h0M450.5 545.5h0M450.5 550.5h0M450.5 552.5h0M451.5 509.5h0M451.5 511.5h0M451.5 542.5h0M451.5 543.5h0M451.5 544.5h0M452.5 503.5h0M452.5 504.5h0M452.5 507.5h0M452.5 514.5h0M452.5 540.5h0M452.5 541.5h0M452.5 542.5h0M452.5 544.5h0M453.5 499.5h0M453.5 500.5h0M453.5 506.5h0M453.5 509.5h0M453.5 540.5h0M453.5 544.5h0M454.5 502.5h0M454.5 505.5h0M454.5 539.5h0M454.5 540.5h0M454.5 542.5h0M454.5 545.5h0M454.5 546.5h0M455.5 497.5h0M455.5 507.5h0M455.5 508.5h0M455.5 511.5h0M455.5 513.5h0M455.5 548.5h0M455.5 552.5h0M456.5 503.5h0M456.5 507.5h0M456.5 512.5h0M456.5 514.5h0M456.5 546.5h0M456.5 551.5h0M456.5 557.5h0M457.5 505.5h0M457.5 508.5h0M457.5 509.5h0M457.5 511.5h0M457.5 514.5h0M458.5 500.5h0M458.5 508.5h0M458.5 509.5h0M458.5 512.5h0M458.5 514.5h0M458.5 539.5h0M458.5 543.5h0M458.5 550.5h0M458.5 551.5h0M459.5 499.5h0M459.5 504.5h0M459.5 511.5h0M459.5 512.5h0M459.5 541.5h0M459.5 542.5h0M459.5 546.5h0M459.5 547.5h0M459.5 550.5h0M459.5 551.5h0M460.5 541.5h0M460.5 546.5h0M460.5 551.5h0M460.5 553.5h0M461.5 502.5h0M461.5 506.5h0M461.5 509.5h0M461.5 512.5h0M461.5 539.5h0M461.5 543.5h0M461.5 546.5h0M462.5 502.5h0M462.5 507.5h0M462.5 510.5h0M462.5 513.5h0M462.5 514.5h0M462.5 541.5h0M462.5 544.5h0M462.5 559.5h0M463.5 501.5h0M463.5 510.5h0M463.5 543.5h0M463.5 545.5h0M464.5 506.5h0M464.5 509.5h0M464.5 510.5h0M464.5 512.5h0M464.5 513.5h0M464.5 540.5h0M464.5 541.5h0M465.5 501.5h0M465.5 507.5h0M465.5 508.5h0M465.5 510.5h0M465.5 539.5h0M465.5 541.5h0M465.5 555.5h0M466.5 500.5h0M466.5 505.5h0M466.5 508.5h0M466.5 510.5h0M466.5 511.5h0M466.5 539.5h0M466.5 540.5h0M466.5 542.5h0M466.5 545.5h0M466.5 546.5h0M466.5 554.5h0M467.5 500.5h0M467.5 502.5h0M467.5 504.5h0M467.5 506.5h0M467.5 514.5h0M467.5 540.5h0M467.5 541.5h0M467.5 544.5h0M468.5 500.5h0M468.5 502.5h0M468.5 508.5h0M468.5 514.5h0M468.5 540.5h0M469.5 498.5h0M469.5 499.5h0M469.5 500.5h0M469.5 503.5h0M469.5 505.5h0M469.5 513.5h0M469.5 514.5h0M469.5 540.5h0M469.5 541.5h0M469.5 542.5h0M469.5 548.5h0M470.5 499.5h0M470.5 513.5h0M470.5 539.5h0M470.5 540.5h0M470.5 541.5h0M470.5 544.5h0M470.5 558.5h0M471.5 502.5h0M471.5 503.5h0M471.5 509.5h0M471.5 510.5h0M471.5 513.5h0M471.5 540.5h0M471.5 541.5h0M471.5 548.5h0M471.5 556.5h0M472.5 511.5h0M472.5 512.5h0M472.5 513.5h0M472.5 514.5h0M472.5 540.5h0M472.5 544.5h0M472.5 550.5h0M472.5 554.5h0M473.5 505.5h0M473.5 507.5h0M473.5 508.5h0M473.5 514.5h0M473.5 543.5h0M473.5 545.5h0M473.5 546.5h0M474.5 497.5h0M474.5 507.5h0M474.5 540.5h0M474.5 542.5h0M474.5 546.5h0M474.5 549.5h0M475.5 494.5h0M475.5 500.5h0M475.5 510.5h0M475.5 511.5h0M475.5 513.5h0M475.5 555.5h0M476.5 495.5h0M476.5 499.5h0M476.5 500.5h0M476.5 506.5h0M476.5 512.5h0M476.5 539.5h0M476.5 543.5h0M476.5 547.5h0M476.5 549.5h0M477.5 494.5h0M477.5 503.5h0M477.5 509.5h0M477.5 513.5h0M477.5 541.5h0M477.5 549.5h0M477.5 550.5h0M478.5 507.5h0M478.5 510.5h0M478.5 540.5h0M478.5 541.5h0M479.5 503.5h0M479.5 540.5h0M479.5 542.5h0M480.5 505.5h0M480.5 510.5h0M480.5 512.5h0M480.5 541.5h0M480.5 546.5h0M480.5 550.5h0M481.5 507.5h0M481.5 510.5h0M481.5 542.5h0M481.5 548.5h0M481.5 549.5h0M482.5 504.5h0M482.5 539.5h0M482.5 546.5h0M483.5 503.5h0M483.5 507.5h0M483.5 511.5h0M483.5 539.5h0M483.5 542.5h0M483.5 543.5h0M484.5 500.5h0M484.5 512.5h0M484.5 547.5h0M485.5 506.5h0M485.5 508.5h0M485.5 510.5h0M485.5 514.5h0M485.5 540.5h0M485.5 543.5h0M485.5 544.5h0M485.5 547.5h0M486.5 508.5h0M486.5 510.5h0M486.5 539.5h0M486.5 542.5h0M486.5 544.5h0M486.5 547.5h0M486.5 549.5h0M486.5 550.5h0M487.5 498.5h0M487.5 503.5h0M487.5 507.5h0M487.5 512.5h0M487.5 514.5h0M487.5 542.5h0M487.5 544.5h0M488.5 508.5h0M488.5 510.5h0M488.5 511.5h0M488.5 513.5h0M488.5 539.5h0M488.5 555.5h0M489.5 511.5h0M489.5 513.5h0M489.5 540.5h0M490.5 504.5h0M490.5 509.5h0M490.5 512.5h0M490.5 541.5h0M490.5 542.5h0M490.5 545.5h0M490.5 556.5h0M491.5 510.5h0M491.5 540.5h0M491.5 542.5h0M491.5 545.5h0M492.5 513.5h0M492.5 543.5h0M492.5 559.5h0M493.5 507.5h0M493.5 509.5h0M493.5 540.5h0M493.5 545.5h0M493.5 548.5h0M494.5 509.5h0M494.5 511.5h0M494.5 539.5h0M494.5 551.5h0M495.5 509.5h0M495.5 514.5h0M495.5 539.5h0M495.5 542.5h0M495.5 547.5h0M495.5 548.5h0M496.5 501.5h0M496.5 510.5h0M496.5 511.5h0M496.5 540.5h0M496.5 545.5h0M496.5 549.5h0M497.5 500.5h0M497.5 506.5h0M497.5 511.5h0M497.5 540.5h0M497.5 545.5h0M497.5 548.5h0M497.5 552.5h0M498.5 496.5h0M498.5 508.5h0M498.5 509.5h0M498.5 510.5h0M498.5 513.5h0M498.5 539.5h0M498.5 541.5h0M498.5 550.5h0M499.5 502.5h0M499.5 505.5h0M499.5 514.5h0M500.5 509.5h0M500.5 513.5h0M500.5 514.5h0M500.5 539.5h0M500.5 543.5h0M500.5 544.5h0M501.5 500.5h0M501.5 512.5h0M501.5 513.5h0M501.5 539.5h0M501.5 548.5h0M502.5 498.5h0M502.5 508.5h0M502.5 513.5h0M502.5 514.5h0M502.5 539.5h0M502.5 542.5h0M502.5 545.5h0M502.5 548.5h0M503.5 508.5h0M503.5 542.5h0M503.5 543.5h0M503.5 547.5h0M503.5 551.5h0M503.5 552.5h0M504.5 498.5h0M504.5 501.5h0M504.5 503.5h0M504.5 505.5h0M504.5 513.5h0M504.5 540.5h0M504.5 542.5h0M504.5 543.5h0M505.5 502.5h0M505.5 506.5h0M505.5 509.5h0M505.5 512.5h0M505.5 550.5h0M505.5 552.5h0M505.5 553.5h0M505.5 554.5h0M506.5 499.5h0M506.5 501.5h0M506.5 503.5h0M506.5 508.5h0M506.5 511.5h0M506.5 513.5h0M506.5 541.5h0M506.5 543.5h0M507.5 495.5h0M507.5 506.5h0M507.5 507.5h0M507.5 508.5h0M507.5 512.5h0M507.5 513.5h0M507.5 541.5h0M507.5 549.5h0M508.5 507.5h0M508.5 511.5h0M508.5 513.5h0M509.5 506.5h0M509.5 514.5h0M509.5 541.5h0M509.5 547.5h0M509.5 548.5h0M510.5 503.5h0M510.5 511.5h0M510.5 514.5h0M510.5 539.5h0M510.5 542.5h0M511.5 508.5h0M511.5 511.5h0M511.5 512.5h0M511.5 541.5h0M511.5 550.5h0M512.5 501.5h0M512.5 539.5h0M512.5 550.5h0M512.5 555.5h0M513.5 494.5h0M513.5 501.5h0M513.5 502.5h0M513.5 514.5h0M513.5 546.5h0M513.5 547.5h0M513.5 550.5h0M514.5 501.5h0M514.5 508.5h0M514.5 513.5h0M514.5 514.5h0M514.5 539.5h0M514.5 543.5h0M514.5 548.5h0M514.5 554.5h0M514.5 555.5h0M515.5 506.5h0M515.5 507.5h0M515.5 514.5h0M515.5 545.5h0M516.5 503.5h0M516.5 512.5h0M516.5 513.5h0M517.5 509.5h0M517.5 511.5h0M517.5 514.5h0M517.5 552.5h0M518.5 498.5h0M518.5 505.5h0M518.5 544.5h0M518.5 546.5h0M518.5 552.5h0M519.5 512.5h0M519.5 539.5h0M519.5 544.5h0M519.5 548.5h0M519.5 554.5h0M520.5 499.5h0M520.5 503.5h0M520.5 504.5h0M520.5 511.5h0M520.5 549.5h0M521.5 507.5h0M521.5 508.5h0M521.5 509.5h0M521.5 513.5h0M521.5 539.5h0M521.5 542.5h0M521.5 545.5h0M521.5 550.5h0M521.5 555.5h0M522.5 498.5h0M522.5 506.5h0M522.5 508.5h0M522.5 550.5h0M523.5 503.5h0M523.5 504.5h0M523.5 540.5h0M523.5 541.5h0M523.5 543.5h0M523.5 545.5h0M523.5 547.5h0M523.5 552.5h0M523.5 553.5h0M523.5 558.5h0M524.5 496.5h0M524.5 510.5h0M524.5 541.5h0M525.5 501.5h0M525.5 508.5h0M525.5 513.5h0M525.5 514.5h0M525.5 539.5h0M525.5 547.5h0M525.5 548.5h0M526.5 495.5h0M526.5 505.5h0M526.5 510.5h0M526.5 545.5h0M527.5 497.5h0M527.5 500.5h0M527.5 504.5h0M527.5 512.5h0M527.5 513.5h0M527.5 514.5h0M527.5 539.5h0M527.5 541.5h0M527.5 543.5h0M527.5 549.5h0M527.5 554.5h0M528.5 502.5h0M528.5 507.5h0M528.5 510.5h0M528.5 511.5h0M528.5 512.5h0M528.5 514.5h0M528.5 541.5h0M528.5 545.5h0M528.5 547.5h0M529.5 506.5h0M529.5 511.5h0M529.5 512.5h0M529.5 513.5h0M529.5 541.5h0M529.5 552.5h0M530.5 499.5h0M530.5 539.5h0M530.5 547.5h0M530.5 551.5h0M531.5 495.5h0M531.5 502.5h0M531.5 505.5h0M531.5 506.5h0M531.5 507.5h0M531.5 510.5h0M531.5 543.5h0M531.5 554.5h0M532.5 505.5h0M532.5 509.5h0M532.5 540.5h0M533.5 512.5h0M533.5 514.5h0M533.5 544.5h0M533.5 548.5h0M534.5 500.5h0M534.5 503.5h0M534.5 539.5h0M534.5 541.5h0M534.5 542.5h0M534.5 549.5h0M534.5 553.5h0M534.5 557.5h0M535.5 505.5h0M535.5 508.5h0M535.5 509.5h0M535.5 539.5h0M535.5 540.5h0M535.5 542.5h0M535.5 554.5h0M536.5 499.5h0M536.5 508.5h0M536.5 510.5h0M536.5 513.5h0M536.5 540.5h0M536.5 550.5h0M536.5 551.5h0M536.5 556.5h0M537.5 500.5h0M537.5 501.5h0M537.5 506.5h0M537.5 507.5h0M537.5 510.5h0M537.5 511.5h0M537.5 550.5h0M538.5 505.5h0M538.5 506.5h0M538.5 510.5h0M538.5 511.5h0M538.5 513.5h0M538.5 514.5h0M538.5 539.5h0M538.5 547.5h0M538.5 551.5h0M539.5 506.5h0M539.5 508.5h0M539.5 511.5h0M539.5 512.5h0M539.5 514.5h0M539.5 540.5h0M539.5 548.5h0M540.5 499.5h0M540.5 500.5h0M540.5 507.5h0M540.5 513.5h0M540.5 540.5h0M540.5 544.5h0M540.5 552.5h0M541.5 506.5h0M541.5 513.5h0M541.5 542.5h0M541.5 545.5h0M541.5 547.5h0M541.5 549.5h0M542.5 503.5h0M542.5 511.5h0M542.5 542.5h0M542.5 546.5h0M542.5 547.5h0M542.5 548.5h0M543.5 499.5h0M543.5 506.5h0M543.5 511.5h0M543.5 513.5h0M543.5 539.5h0M543.5 542.5h0M543.5 545.5h0M543.5 547.5h0M544.5 503.5h0M544.5 512.5h0M544.5 540.5h0M544.5 544.5h0M544.5 547.5h0M544.5 553.5h0M545.5 502.5h0M545.5 509.5h0M545.5 539.5h0M545.5 540.5h0M545.5 542.5h0M545.5 543.5h0M545.5 546.5h0M545.5 550.5h0M546.5 501.5h0M546.5 540.5h0M546.5 547.5h0M547.5 513.5h0M547.5 545.5h0M547.5 551.5h0M547.5 555.5h0M548.5 499.5h0M548.5 545.5h0M549.5 496.5h0M549.5 504.5h0M549.5 508.5h0M549.5 509.5h0M549.5 513.5h0M549.5 514.5h0M550.5 514.5h0M550.5 539.5h0M550.5 540.5h0M550.5 545.5h0M550.5 550.5h0M551.5 495.5h0M551.5 505.5h0M551.5 510.5h0M551.5 539.5h0M551.5 540.5h0M551.5 541.5h0M551.5 545.5h0M551.5 547.5h0M551.5 552.5h0M551.5 555.5h0M552.5 502.5h0M552.5 505.5h0M552.5 508.5h0M552.5 510.5h0M552.5 511.5h0M552.5 541.5h0M552.5 553.5h0M553.5 498.5h0M553.5 506.5h0M553.5 507.5h0M553.5 511.5h0M553.5 558.5h0M554.5 501.5h0M554.5 510.5h0M554.5 512.5h0M554.5 540.5h0M554.5 546.5h0M555.5 494.5h0M555.5 497.5h0M555.5 511.5h0M555.5 548.5h0M555.5 549.5h0M555.5 555.5h0M556.5 496.5h0M556.5 502.5h0M556.5 508.5h0M556.5 539.5h0M556.5 540.5h0M556.5 541.5h0M556.5 542.5h0M556.5 543.5h0M556.5 545.5h0M557.5 501.5h0M557.5 508.5h0M557.5 512.5h0M557.5 539.5h0M557.5 543.5h0M557.5 545.5h0M557.5 548.5h0M558.5 506.5h0M558.5 508.5h0M558.5 512.5h0M558.5 543.5h0M558.5 544.5h0M558.5 551.5h0M558.5 553.5h0M559.5 500.5h0M559.5 511.5h0M559.5 513.5h0M559.5 540.5h0M559.5 542.5h0M559.5 548.5h0M559.5 550.5h0M559.5 551.5h0M560.5 501.5h0M560.5 512.5h0M560.5 540.5h0M560.5 541.5h0M561.5 497.5h0M561.5 506.5h0M561.5 512.5h0M561.5 514.5h0M561.5 540.5h0M561.5 541.5h0M561.5 543.5h0M561.5 544.5h0M561.5 546.5h0M562.5 499.5h0M562.5 510.5h0M562.5 513.5h0M562.5 542.5h0M563.5 503.5h0M563.5 506.5h0M563.5 511.5h0M563.5 513.5h0M563.5 540.5h0M563.5 545.5h0M563.5 557.5h0M564.5 510.5h0M565.5 499.5h0M565.5 507.5h0M565.5 508.5h0M565.5 510.5h0M565.5 540.5h0M565.5 543.5h0M566.5 499.5h0M566.5 508.5h0M566.5 511.5h0M566.5 539.5h0M566.5 555.5h0M567.5 501.5h0M567.5 508.5h0M567.5 539.5h0M567.5 541.5h0M567.5 546.5h0M567.5 551.5h0M567.5 552.5h0M568.5 506.5h0M568.5 508.5h0M568.5 512.5h0M568.5 540.5h0M568.5 541.5h0M568.5 546.5h0M568.5 555.5h0M569.5 503.5h0M569.5 504.5h0M569.5 512.5h0M569.5 513.5h0M569.5 514.5h0M569.5 549.5h0M570.5 498.5h0M570.5 504.5h0M570.5 508.5h0M570.5 512.5h0M570.5 539.5h0M570.5 544.5h0M570.5 555.5h0M571.5 504.5h0M571.5 506.5h0M571.5 508.5h0M571.5 510.5h0M571.5 511.5h0M571.5 512.5h0M571.5 540.5h0M571.5 543.5h0M571.5 545.5h0M571.5 546.5h0M571.5 547.5h0M571.5 549.5h0M571.5 554.5h0M572.5 511.5h0M572.5 539.5h0M573.5 495.5h0M573.5 499.5h0M573.5 501.5h0M573.5 507.5h0M573.5 508.5h0M573.5 509.5h0M573.5 513.5h0M573.5 539.5h0M573.5 543.5h0M573.5 544.5h0M573.5 550.5h0M574.5 504.5h0M574.5 507.5h0M574.5 513.5h0M574.5 540.5h0M574.5 543.5h0M574.5 549.5h0M575.5 501.5h0M575.5 509.5h0M575.5 511.5h0M575.5 513.5h0M575.5 545.5h0M575.5 550.5h0M576.5 503.5h0M576.5 514.5h0M576.5 540.5h0M576.5 541.5h0M576.5 542.5h0M576.5 548.5h0M577.5 499.5h0M577.5 500.5h0M577.5 503.5h0M577.5 510.5h0M577.5 512.5h0M577.5 514.5h0M577.5 539.5h0M577.5 540.5h0M577.5 541.5h0M577.5 542.5h0M577.5 544.5h0M578.5 503.5h0M578.5 509.5h0M578.5 511.5h0M578.5 542.5h0M578.5 548.5h0M579.5 501.5h0M579.5 506.5h0M579.5 507.5h0M579.5 508.5h0M579.5 543.5h0M579.5 545.5h0M579.5 548.5h0M579.5 553.5h0M579.5 560.5h0M580.5 507.5h0M580.5 508.5h0M580.5 514.5h0M580.5 546.5h0M580.5 547.5h0M580.5 551.5h0M581.5 508.5h0M581.5 513.5h0M581.5 540.5h0M581.5 543.5h0M582.5 499.5h0M582.5 503.5h0M582.5 508.5h0M582.5 539.5h0M582.5 541.5h0M582.5 542.5h0M582.5 543.5h0M582.5 549.5h0M582.5 551.5h0M583.5 501.5h0M583.5 508.5h0M583.5 509.5h0M583.5 513.5h0M583.5 514.5h0M583.5 540.5h0M583.5 542.5h0M583.5 546.5h0M584.5 503.5h0M584.5 507.5h0M584.5 511.5h0M584.5 514.5h0M584.5 541.5h0M585.5 498.5h0M585.5 539.5h0M585.5 541.5h0M585.5 544.5h0M586.5 501.5h0M586.5 510.5h0M586.5 512.5h0M586.5 543.5h0M586.5 546.5h0M586.5 549.5h0M586.5 551.5h0M586.5 552.5h0M587.5 509.5h0M587.5 512.5h0M587.5 543.5h0M587.5 544.5h0M587.5 548.5h0M587.5 549.5h0M588.5 513.5h0M588.5 539.5h0M588.5 545.5h0M589.5 505.5h0M589.5 506.5h0M589.5 511.5h0M589.5 514.5h0M589.5 539.5h0M589.5 541.5h0M589.5 543.5h0M589.5 550.5h0M589.5 553.5h0M590.5 507.5h0M590.5 511.5h0M590.5 554.5h0M591.5 502.5h0M591.5 503.5h0M591.5 507.5h0M591.5 540.5h0M591.5 544.5h0M591.5 545.5h0M591.5 546.5h0M591.5 548.5h0M591.5 551.5h0M592.5 499.5h0M592.5 503.5h0M592.5 508.5h0M592.5 509.5h0M592.5 513.5h0M592.5 542.5h0M592.5 548.5h0M593.5 511.5h0M593.5 512.5h0M593.5 513.5h0M593.5 539.5h0M593.5 540.5h0M593.5 542.5h0M593.5 544.5h0M594.5 499.5h0M594.5 502.5h0M594.5 513.5h0M594.5 550.5h0M594.5 551.5h0M594.5 552.5h0M594.5 554.5h0M595.5 497.5h0M595.5 502.5h0M595.5 513.5h0M595.5 540.5h0M595.5 541.5h0M595.5 544.5h0M595.5 545.5h0M595.5 547.5h0M595.5 550.5h0M596.5 506.5h0M596.5 509.5h0M596.5 511.5h0M596.5 542.5h0M596.5 549.5h0M596.5 551.5h0M596.5 553.5h0M597.5 499.5h0M597.5 506.5h0M597.5 507.5h0M597.5 509.5h0M597.5 511.5h0M597.5 513.5h0M597.5 514.5h0M597.5 543.5h0M597.5 544.5h0M597.5 551.5h0M598.5 499.5h0M598.5 509.5h0M598.5 513.5h0M598.5 547.5h0M598.5 554.5h0M599.5 501.5h0M599.5 504.5h0M599.5 508.5h0M599.5 510.5h0M599.5 513.5h0M599.5 543.5h0M599.5 544.5h0M599.5 549.5h0M599.5 551.5h0M599.5 552.5h0M600.5 507.5h0M600.5 509.5h0M600.5 512.5h0M600.5 539.5h0M600.5 541.5h0M600.5 544.5h0M600.5 551.5h0M600.5 553.5h0M601.5 509.5h0M601.5 512.5h0M601.5 539.5h0M601.5 546.5h0M601.5 548.5h0M602.5 505.5h0M602.5 508.5h0M602.5 540.5h0M602.5 542.5h0M602.5 546.5h0M602.5 551.5h0M602.5 552.5h0M602.5 554.5h0M603.5 504.5h0M603.5 507.5h0M603.5 511.5h0M603.5 514.5h0M603.5 539.5h0M603.5 541.5h0M603.5 545.5h0M603.5 547.5h0M603.5 555.5h0M604.5 506.5h0M604.5 512.5h0M604.5 514.5h0M604.5 541.5h0M605.5 502.5h0M605.5 506.5h0M605.5 507.5h0M605.5 539.5h0M605.5 540.5h0M605.5 542.5h0M605.5 546.5h0M605.5 551.5h0M605.5 555.5h0M606.5 497.5h0M606.5 500.5h0M606.5 506.5h0M606.5 508.5h0M606.5 511.5h0M606.5 514.5h0M606.5 544.5h0M606.5 547.5h0M606.5 551.5h0M607.5 496.5h0M607.5 499.5h0M607.5 509.5h0M607.5 512.5h0M607.5 540.5h0M607.5 541.5h0M607.5 548.5h0M607.5 550.5h0M608.5 499.5h0M608.5 501.5h0M608.5 508.5h0M608.5 509.5h0M608.5 514.5h0M608.5 539.5h0M608.5 541.5h0M608.5 543.5h0M608.5 545.5h0M608.5 550.5h0M608.5 554.5h0M609.5 508.5h0M609.5 511.5h0M609.5 512.5h0M609.5 539.5h0M609.5 550.5h0M609.5 553.5h0M610.5 505.5h0M610.5 506.5h0M610.5 511.5h0M610.5 512.5h0M610.5 542.5h0M610.5 548.5h0M610.5 553.5h0M611.5 500.5h0M611.5 505.5h0M612.5 503.5h0M612.5 506.5h0M612.5 508.5h0M612.5 509.5h0M612.5 510.5h0M612.5 513.5h0M612.5 539.5h0M612.5 544.5h0M612.5 546.5h0M612.5 547.5h0M612.5 549.5h0M612.5 552.5h0M613.5 503.5h0M613.5 505.5h0M613.5 506.5h0M613.5 511.5h0M613.5 512.5h0M613.5 547.5h0M613.5 549.5h0M613.5 557.5h0M614.5 500.5h0M614.5 501.5h0M614.5 509.5h0M614.5 510.5h0M614.5 511.5h0M614.5 512.5h0M614.5 514.5h0M614.5 548.5h0M614.5 557.5h0M615.5 508.5h0M615.5 513.5h0M615.5 547.5h0M615.5 553.5h0M616.5 504.5h0M616.5 508.5h0M616.5 509.5h0M616.5 510.5h0M616.5 512.5h0M616.5 544.5h0M616.5 548.5h0M617.5 509.5h0M617.5 510.5h0M617.5 511.5h0M617.5 541.5h0M618.5 501.5h0M618.5 503.5h0M618.5 508.5h0M618.5 510.5h0M619.5 495.5h0M619.5 498.5h0M619.5 499.5h0M619.5 506.5h0M619.5 511.5h0M619.5 512.5h0M619.5 513.5h0M619.5 543.5h0M619.5 547.5h0M619.5 555.5h0M620.5 500.5h0M620.5 501.5h0M620.5 506.5h0M620.5 507.5h0M620.5 508.5h0M620.5 511.5h0M620.5 512.5h0M620.5 513.5h0M620.5 540.5h0M620.5 553.5h0M621.5 503.5h0M621.5 539.5h0M621.5 543.5h0M621.5 544.5h0M621.5 545.5h0M622.5 503.5h0M622.5 539.5h0M622.5 541.5h0M622.5 544.5h0M622.5 548.5h0M623.5 499.5h0M623.5 511.5h0M623.5 539.5h0M623.5 547.5h0M623.5 548.5h0M624.5 499.5h0M624.5 501.5h0M624.5 502.5h0M624.5 548.5h0M624.5 553.5h0M625.5 505.5h0M625.5 511.5h0M625.5 514.5h0M625.5 539.5h0M625.5 545.5h0M625.5 547.5h0M625.5 548.5h0M625.5 554.5h0M626.5 503.5h0M626.5 508.5h0M626.5 509.5h0M626.5 511.5h0M626.5 512.5h0M626.5 514.5h0M626.5 548.5h0M626.5 553.5h0M627.5 498.5h0M627.5 508.5h0M627.5 512.5h0M627.5 514.5h0M627.5 542.5h0M627.5 543.5h0M627.5 549.5h0M627.5 550.5h0M627.5 552.5h0M627.5 553.5h0M627.5 557.5h0M627.5 558.5h0M628.5 507.5h0M628.5 514.5h0M628.5 540.5h0M629.5 509.5h0M629.5 510.5h0M629.5 513.5h0M629.5 539.5h0M629.5 542.5h0M629.5 545.5h0M629.5 548.5h0M629.5 550.5h0M630.5 511.5h0M630.5 539.5h0M630.5 545.5h0M631.5 494.5h0M631.5 497.5h0M631.5 498.5h0M631.5 500.5h0M631.5 509.5h0M631.5 514.5h0M631.5 539.5h0M631.5 540.5h0M631.5 543.5h0M631.5 546.5h0M631.5 547.5h0M632.5 506.5h0M632.5 507.5h0M632.5 510.5h0M632.5 512.5h0M632.5 514.5h0M632.5 539.5h0M632.5 544.5h0M632.5 547.5h0M632.5 554.5h0M633.5 501.5h0M633.5 505.5h0M633.5 512.5h0M633.5 514.5h0M633.5 548.5h0M634.5 500.5h0M634.5 501.5h0M634.5 512.5h0M634.5 513.5h0M634.5 539.5h0M634.5 540.5h0M634.5 541.5h0M634.5 542.5h0M634.5 545.5h0M634.5 549.5h0M635.5 504.5h0M635.5 505.5h0M635.5 542.5h0M635.5 543.5h0M635.5 545.5h0M636.5 511.5h0M636.5 540.5h0M636.5 545.5h0M636.5 549.5h0M636.5 554.5h0M637.5 494.5h0M637.5 499.5h0M637.5 510.5h0M637.5 513.5h0M637.5 546.5h0M637.5 548.5h0M638.5 499.5h0M638.5 502.5h0M638.5 505.5h0M638.5 513.5h0M638.5 514.5h0M638.5 551.5h0M638.5 556.5h0M639.5 497.5h0M639.5 509.5h0M639.5 511.5h0M639.5 512.5h0M639.5 513.5h0M639.5 514.5h0M639.5 539.5h0M639.5 540.5h0M639.5 541.5h0M639.5 542.5h0M640.5 498.5h0M640.5 499.5h0M640.5 504.5h0M640.5 505.5h0M640.5 508.5h0M640.5 514.5h0M640.5 547.5h0M640.5 549.5h0M641.5 503.5h0M641.5 508.5h0M641.5 511.5h0M641.5 512.5h0M641.5 513.5h0M641.5 541.5h0M641.5 553.5h0M642.5 496.5h0M642.5 498.5h0M642.5 510.5h0M642.5 514.5h0M642.5 539.5h0M642.5 544.5h0M642.5 550.5h0M643.5 498.5h0M643.5 510.5h0M643.5 512.5h0M643.5 514.5h0M643.5 553.5h0M644.5 502.5h0M644.5 508.5h0M644.5 509.5h0M644.5 510.5h0M644.5 512.5h0M644.5 548.5h0M645.5 502.5h0M645.5 504.5h0M645.5 506.5h0M645.5 513.5h0M645.5 514.5h0M645.5 545.5h0M645.5 546.5h0M645.5 549.5h0M645.5 551.5h0M645.5 557.5h0M646.5 501.5h0M646.5 506.5h0M646.5 507.5h0M646.5 508.5h0M646.5 513.5h0M646.5 540.5h0M646.5 547.5h0M646.5 552.5h0M646.5 554.5h0M647.5 496.5h0M647.5 500.5h0M647.5 501.5h0M647.5 503.5h0M647.5 508.5h0M647.5 542.5h0M647.5 549.5h0M648.5 513.5h0M648.5 539.5h0M648.5 542.5h0M648.5 543.5h0M648.5 544.5h0M649.5 507.5h0M649.5 509.5h0M649.5 511.5h0M649.5 512.5h0M649.5 513.5h0M649.5 542.5h0M649.5 548.5h0M649.5 549.5h0M649.5 551.5h0M650.5 501.5h0M650.5 504.5h0M650.5 544.5h0M651.5 503.5h0M651.5 508.5h0M651.5 511.5h0M651.5 513.5h0M651.5 514.5h0M651.5 548.5h0M652.5 496.5h0M652.5 498.5h0M652.5 506.5h0M652.5 510.5h0M652.5 540.5h0M652.5 546.5h0M652.5 549.5h0M653.5 502.5h0M653.5 507.5h0M653.5 511.5h0M653.5 512.5h0M653.5 514.5h0M653.5 541.5h0M653.5 555.5h0M654.5 506.5h0M654.5 508.5h0M654.5 513.5h0M654.5 539.5h0M654.5 540.5h0M654.5 542.5h0M655.5 509.5h0M655.5 511.5h0M655.5 512.5h0M655.5 542.5h0M655.5 543.5h0M655.5 547.5h0M655.5 548.5h0M656.5 507.5h0M656.5 508.5h0M656.5 512.5h0M656.5 513.5h0M656.5 514.5h0M656.5 540.5h0M656.5 546.5h0M656.5 550.5h0M657.5 502.5h0M657.5 508.5h0M657.5 514.5h0M657.5 545.5h0M657.5 546.5h0M657.5 547.5h0M657.5 552.5h0M658.5 504.5h0M658.5 505.5h0M658.5 506.5h0M658.5 511.5h0M658.5 540.5h0M658.5 541.5h0M658.5 549.5h0M659.5 501.5h0M659.5 502.5h0M659.5 512.5h0M659.5 540.5h0M659.5 541.5h0M659.5 546.5h0M659.5 551.5h0M660.5 502.5h0M660.5 510.5h0M660.5 511.5h0M660.5 512.5h0M660.5 514.5h0M660.5 539.5h0M660.5 543.5h0M661.5 505.5h0M661.5 512.5h0M661.5 540.5h0M661.5 546.5h0M662.5 503.5h0M662.5 509.5h0M662.5 510.5h0M662.5 558.5h0M663.5 508.5h0M663.5 513.5h0M663.5 514.5h0M663.5 540.5h0M663.5 543.5h0M663.5 546.5h0M664.5 542.5h0M664.5 553.5h0M665.5 504.5h0M665.5 507.5h0M665.5 510.5h0M665.5 511.5h0M665.5 512.5h0M665.5 539.5h0M665.5 540.5h0M665.5 556.5h0M666.5 514.5h0M666.5 540.5h0M666.5 545.5h0M666.5 548.5h0M667.5 497.5h0M667.5 501.5h0M667.5 509.5h0M667.5 540.5h0M667.5 543.5h0M667.5 545.5h0M667.5 547.5h0M667.5 551.5h0M668.5 498.5h0M668.5 540.5h0M668.5 541.5h0M668.5 543.5h0M668.5 544.5h0M669.5 509.5h0M669.5 539.5h0M669.5 546.5h0M669.5 548.5h0M669.5 551.5h0M670.5 510.5h0M670.5 541.5h0M670.5 549.5h0M670.5 551.5h0M670.5 554.5h0M671.5 503.5h0M671.5 506.5h0M671.5 511.5h0M671.5 514.5h0M671.5 539.5h0M671.5 546.5h0M671.5 549.5h0M671.5 555.5h0M671.5 556.5h0M672.5 501.5h0M672.5 505.5h0M672.5 512.5h0M672.5 513.5h0M672.5 514.5h0M672.5 541.5h0M672.5 546.5h0M672.5 547.5h0M673.5 497.5h0M673.5 514.5h0M674.5 514.5h0M674.5 544.5h0M674.5 552.5h0M674.5 553.5h0M674.5 554.5h0M674.5 555.5h0M674.5 557.5h0M675.5 506.5h0M675.5 510.5h0M675.5 512.5h0M675.5 514.5h0M675.5 540.5h0M675.5 553.5h0M676.5 500.5h0M676.5 506.5h0M676.5 507.5h0M676.5 509.5h0M676.5 512.5h0M676.5 514.5h0M676.5 540.5h0M676.5 543.5h0M676.5 550.5h0M676.5 553.5h0M677.5 504.5h0M677.5 513.5h0M677.5 514.5h0M677.5 543.5h0M678.5 496.5h0M678.5 502.5h0M678.5 505.5h0M678.5 506.5h0M678.5 507.5h0M678.5 540.5h0M678.5 544.5h0M678.5 545.5h0M678.5 549.5h0M678.5 555.5h0M679.5 506.5h0M679.5 507.5h0M679.5 509.5h0M679.5 511.5h0M679.5 513.5h0M679.5 548.5h0M680.5 495.5h0M680.5 506.5h0M680.5 513.5h0M680.5 514.5h0M680.5 541.5h0M680.5 550.5h0M680.5 555.5h0M681.5 513.5h0M681.5 514.5h0M681.5 542.5h0M682.5 504.5h0M682.5 507.5h0M682.5 511.5h0M682.5 514.5h0M682.5 539.5h0M682.5 541.5h0M682.5 547.5h0M682.5 548.5h0M682.5 552.5h0M683.5 499.5h0M683.5 508.5h0M683.5 539.5h0M683.5 540.5h0M683.5 547.5h0M683.5 550.5h0M683.5 551.5h0M684.5 502.5h0M684.5 504.5h0M684.5 508.5h0M684.5 509.5h0M684.5 510.5h0M684.5 545.5h0M685.5 502.5h0M685.5 510.5h0M685.5 512.5h0M685.5 514.5h0M685.5 539.5h0M685.5 540.5h0M685.5 545.5h0M685.5 549.5h0M686.5 493.5h0M686.5 506.5h0M686.5 511.5h0M686.5 539.5h0M686.5 541.5h0M686.5 549.5h0M687.5 494.5h0M687.5 504.5h0M687.5 506.5h0M687.5 507.5h0M687.5 512.5h0M687.5 513.5h0M687.5 514.5h0M687.5 539.5h0M687.5 541.5h0M687.5 549.5h0M688.5 498.5h0M688.5 502.5h0M688.5 508.5h0M688.5 510.5h0M688.5 539.5h0M688.5 543.5h0M688.5 545.5h0M688.5 548.5h0M689.5 503.5h0M689.5 508.5h0M689.5 512.5h0M689.5 513.5h0M689.5 546.5h0M689.5 549.5h0M690.5 501.5h0M690.5 506.5h0M690.5 507.5h0M690.5 510.5h0M690.5 539.5h0M690.5 540.5h0M690.5 544.5h0M690.5 546.5h0M690.5 552.5h0M691.5 501.5h0M691.5 504.5h0M691.5 514.5h0M691.5 540.5h0M691.5 542.5h0M691.5 546.5h0M691.5 548.5h0M691.5 558.5h0M692.5 503.5h0M692.5 540.5h0M692.5 543.5h0M692.5 549.5h0M692.5 552.5h0M692.5 554.5h0M693.5 503.5h0M693.5 508.5h0M693.5 547.5h0M693.5 549.5h0M694.5 509.5h0M694.5 543.5h0M695.5 496.5h0M695.5 507.5h0M695.5 513.5h0M695.5 550.5h0M695.5 553.5h0M696.5 511.5h0M696.5 539.5h0M696.5 541.5h0M696.5 546.5h0M696.5 553.5h0M696.5 556.5h0M697.5 502.5h0M697.5 513.5h0M697.5 540.5h0M697.5 543.5h0M697.5 544.5h0M698.5 501.5h0M698.5 502.5h0M698.5 503.5h0M698.5 507.5h0M698.5 514.5h0M698.5 539.5h0M698.5 542.5h0M698.5 552.5h0M699.5 503.5h0M699.5 505.5h0M699.5 513.5h0M699.5 539.5h0M699.5 541.5h0M700.5 512.5h0M700.5 541.5h0M700.5 544.5h0M700.5 546.5h0M700.5 547.5h0M700.5 550.5h0M701.5 508.5h0M701.5 540.5h0M701.5 546.5h0M701.5 549.5h0M701.5 551.5h0M702.5 501.5h0M702.5 508.5h0M702.5 512.5h0M702.5 513.5h0M702.5 539.5h0M702.5 544.5h0M702.5 551.5h0M703.5 544.5h0M703.5 546.5h0M703.5 550.5h0M703.5 553.5h0M703.5 555.5h0M704.5 499.5h0M704.5 509.5h0M704.5 512.5h0M704.5 513.5h0M704.5 541.5h0M704.5 542.5h0M704.5 545.5h0M704.5 552.5h0M705.5 498.5h0M705.5 501.5h0M705.5 512.5h0M705.5 514.5h0M705.5 553.5h0M705.5 555.5h0M706.5 497.5h0M706.5 502.5h0M706.5 510.5h0M706.5 514.5h0M706.5 545.5h0M706.5 547.5h0M706.5 548.5h0M707.5 508.5h0M707.5 510.5h0M707.5 514.5h0M707.5 539.5h0M707.5 543.5h0M707.5 546.5h0M708.5 499.5h0M708.5 500.5h0M708.5 505.5h0M708.5 507.5h0M708.5 509.5h0M708.5 510.5h0M708.5 551.5h0M708.5 555.5h0M708.5 556.5h0M709.5 504.5h0M709.5 509.5h0M709.5 512.5h0M709.5 542.5h0M709.5 544.5h0M709.5 545.5h0M709.5 546.5h0M710.5 503.5h0M710.5 507.5h0M710.5 513.5h0M710.5 514.5h0M710.5 539.5h0M710.5 541.5h0M710.5 542.5h0M710.5 544.5h0M710.5 550.5h0M711.5 496.5h0M711.5 499.5h0M711.5 509.5h0M711.5 511.5h0M711.5 512.5h0M711.5 513.5h0M711.5 541.5h0M711.5 545.5h0M711.5 546.5h0M712.5 513.5h0M712.5 514.5h0M712.5 540.5h0M712.5 542.5h0M713.5 501.5h0M713.5 509.5h0M713.5 511.5h0M713.5 512.5h0M713.5 513.5h0M713.5 541.5h0M713.5 542.5h0M713.5 543.5h0M713.5 545.5h0M713.5 550.5h0M714.5 501.5h0M714.5 502.5h0M714.5 506.5h0M714.5 511.5h0M714.5 513.5h0M714.5 544.5h0M714.5 551.5h0M714.5 552.5h0M715.5 543.5h0M715.5 545.5h0M715.5 550.5h0M715.5 552.5h0M716.5 494.5h0M716.5 497.5h0M716.5 499.5h0M716.5 506.5h0M716.5 513.5h0M716.5 514.5h0M716.5 540.5h0M716.5 541.5h0M716.5 542.5h0M716.5 543.5h0M716.5 544.5h0M716.5 553.5h0M717.5 507.5h0M717.5 512.5h0M717.5 514.5h0M717.5 551.5h0M718.5 500.5h0M718.5 504.5h0M718.5 508.5h0M718.5 511.5h0M718.5 542.5h0M718.5 544.5h0M718.5 551.5h0M719.5 510.5h0M719.5 511.5h0M719.5 545.5h0M719.5 549.5h0M719.5 555.5h0M720.5 501.5h0M720.5 507.5h0M720.5 512.5h0M720.5 513.5h0M720.5 539.5h0M720.5 541.5h0M720.5 542.5h0M720.5 555.5h0M721.5 495.5h0M721.5 507.5h0M721.5 511.5h0M721.5 514.5h0M721.5 540.5h0M721.5 545.5h0M721.5 548.5h0M722.5 501.5h0M722.5 502.5h0M722.5 506.5h0M722.5 509.5h0M722.5 514.5h0M722.5 540.5h0M722.5 541.5h0M722.5 544.5h0M722.5 550.5h0M723.5 498.5h0M723.5 501.5h0M723.5 502.5h0M723.5 508.5h0M723.5 512.5h0M723.5 547.5h0M723.5 552.5h0M724.5 499.5h0M724.5 504.5h0M724.5 507.5h0M724.5 508.5h0M724.5 510.5h0M724.5 512.5h0M724.5 514.5h0M724.5 547.5h0M725.5 500.5h0M725.5 540.5h0M725.5 541.5h0M726.5 498.5h0M726.5 501.5h0M726.5 503.5h0M726.5 504.5h0M726.5 505.5h0M726.5 506.5h0M726.5 508.5h0M726.5 513.5h0M726.5 514.5h0M726.5 539.5h0M726.5 545.5h0M726.5 547.5h0M726.5 550.5h0M726.5 551.5h0M727.5 501.5h0M727.5 505.5h0M727.5 508.5h0M727.5 509.5h0M727.5 514.5h0M727.5 540.5h0M727.5 542.5h0M727.5 547.5h0M727.5 549.5h0M727.5 551.5h0M727.5 555.5h0M728.5 505.5h0M728.5 511.5h0M728.5 512.5h0M728.5 539.5h0M728.5 544.5h0M728.5 550.5h0M728.5 555.5h0M729.5 507.5h0M729.5 510.5h0M729.5 511.5h0M729.5 512.5h0M729.5 539.5h0M729.5 544.5h0M729.5 549.5h0M729.5 552.5h0M730.5 505.5h0M730.5 511.5h0M730.5 512.5h0M730.5 544.5h0M730.5 545.5h0M730.5 550.5h0M730.5 551.5h0M731.5 506.5h0M731.5 508.5h0M731.5 510.5h0M731.5 512.5h0M731.5 513.5h0M731.5 514.5h0M731.5 539.5h0M731.5 540.5h0M731.5 548.5h0M731.5 551.5h0M732.5 498.5h0M732.5 499.5h0M732.5 501.5h0M732.5 509.5h0M732.5 510.5h0M732.5 512.5h0M732.5 513.5h0M732.5 514.5h0M732.5 544.5h0M732.5 548.5h0M733.5 498.5h0M733.5 499.5h0M733.5 500.5h0M733.5 502.5h0M733.5 503.5h0M733.5 507.5h0M733.5 508.5h0M733.5 510.5h0M733.5 539.5h0M733.5 542.5h0M734.5 507.5h0M734.5 513.5h0M734.5 541.5h0M734.5 548.5h0M734.5 549.5h0M734.5 553.5h0M735.5 503.5h0M735.5 507.5h0M735.5 511.5h0M735.5 513.5h0M735.5 544.5h0M735.5 545.5h0M735.5 554.5h0M736.5 504.5h0M736.5 507.5h0M736.5 508.5h0M736.5 510.5h0M736.5 511.5h0M736.5 513.5h0M736.5 514.5h0M736.5 541.5h0M736.5 542.5h0M736.5 547.5h0M737.5 509.5h0M737.5 512.5h0M737.5 541.5h0M737.5 547.5h0M738.5 502.5h0M738.5 506.5h0M738.5 543.5h0M738.5 545.5h0M738.5 554.5h0M738.5 555.5h0M739.5 501.5h0M739.5 505.5h0M739.5 514.5h0M739.5 539.5h0M739.5 545.5h0M740.5 503.5h0M740.5 509.5h0M740.5 513.5h0M740.5 514.5h0M740.5 542.5h0M740.5 544.5h0M741.5 503.5h0M741.5 505.5h0M741.5 511.5h0M741.5 543.5h0M741.5 555.5h0M742.5 507.5h0M742.5 508.5h0M742.5 510.5h0M742.5 512.5h0M742.5 539.5h0M742.5 541.5h0M742.5 546.5h0M742.5 548.5h0M743.5 502.5h0M743.5 539.5h0M743.5 540.5h0M743.5 555.5h0M744.5 504.5h0M744.5 510.5h0M744.5 512.5h0M744.5 514.5h0M744.5 539.5h0M744.5 540.5h0M744.5 551.5h0M744.5 552.5h0M745.5 501.5h0M745.5 505.5h0M745.5 508.5h0M745.5 513.5h0M745.5 540.5h0M745.5 542.5h0M745.5 552.5h0M745.5 553.5h0M746.5 501.5h0M746.5 502.5h0M746.5 504.5h0M746.5 509.5h0M746.5 510.5h0M746.5 511.5h0M746.5 514.5h0M746.5 539.5h0M746.5 553.5h0M747.5 505.5h0M747.5 508.5h0M747.5 539.5h0M747.5 544.5h0M747.5 545.5h0M747.5 555.5h0M748.5 504.5h0M748.5 509.5h0M748.5 512.5h0M748.5 513.5h0M748.5 540.5h0M748.5 542.5h0M748.5 544.5h0M748.5 554.5h0M749.5 497.5h0M749.5 507.5h0M749.5 512.5h0M749.5 542.5h0M749.5 544.5h0M750.5 507.5h0M750.5 508.5h0M750.5 509.5h0M750.5 541.5h0M750.5 549.5h0M751.5 507.5h0M752.5 501.5h0M752.5 507.5h0M752.5 547.5h0M752.5 549.5h0M753.5 499.5h0M753.5 511.5h0M753.5 539.5h0M753.5 543.5h0M753.5 544.5h0M753.5 548.5h0M754.5 513.5h0M754.5 540.5h0M754.5 548.5h0M754.5 549.5h0M754.5 555.5h0M755.5 499.5h0M755.5 508.5h0M755.5 539.5h0M755.5 542.5h0M755.5 545.5h0M755.5 546.5h0M755.5 555.5h0M756.5 509.5h0M756.5 510.5h0M756.5 513.5h0M756.5 539.5h0M756.5 545.5h0M756.5 546.5h0M756.5 551.5h0M757.5 500.5h0M757.5 505.5h0M757.5 507.5h0M757.5 511.5h0M757.5 540.5h0M757.5 546.5h0M758.5 501.5h0M758.5 504.5h0M758.5 507.5h0M758.5 508.5h0M758.5 509.5h0M758.5 512.5h0M758.5 513.5h0M758.5 547.5h0M758.5 548.5h0M759.5 505.5h0M759.5 506.5h0M759.5 512.5h0M759.5 513.5h0M759.5 539.5h0M759.5 540.5h0M759.5 541.5h0M759.5 542.5h0M759.5 549.5h0M760.5 507.5h0M760.5 544.5h0M760.5 548.5h0M761.5 506.5h0M761.5 512.5h0M761.5 513.5h0M761.5 540.5h0M761.5 543.5h0M761.5 549.5h0M761.5 551.5h0M761.5 553.5h0M762.5 497.5h0M762.5 512.5h0M762.5 514.5h0M762.5 539.5h0M762.5 540.5h0M762.5 541.5h0M762.5 543.5h0M762.5 544.5h0M762.5 545.5h0M762.5 554.5h0M762.5 557.5h0M763.5 507.5h0M763.5 511.5h0M763.5 539.5h0M763.5 547.5h0M763.5 552.5h0M763.5 557.5h0M764.5 499.5h0M764.5 500.5h0M764.5 504.5h0M764.5 506.5h0M764.5 509.5h0M764.5 514.5h0M764.5 543.5h0M764.5 546.5h0M764.5 550.5h0M764.5 556.5h0M765.5 504.5h0M765.5 508.5h0M765.5 512.5h0M765.5 540.5h0M765.5 547.5h0M766.5 502.5h0M766.5 504.5h0M766.5 508.5h0M766.5 510.5h0M766.5 539.5h0M766.5 546.5h0M767.5 501.5h0M767.5 506.5h0M767.5 510.5h0M767.5 512.5h0M767.5 539.5h0M767.5 547.5h0M767.5 552.5h0M768.5 506.5h0M768.5 512.5h0M768.5 544.5h0M768.5 545.5h0M768.5 546.5h0M769.5 501.5h0M769.5 505.5h0M769.5 507.5h0M769.5 510.5h0M769.5 512.5h0M769.5 544.5h0M770.5 494.5h0M770.5 504.5h0M770.5 514.5h0M770.5 543.5h0M770.5 544.5h0M771.5 509.5h0M771.5 513.5h0M771.5 514.5h0M771.5 541.5h0M771.5 553.5h0M772.5 508.5h0M772.5 512.5h0M772.5 539.5h0M772.5 542.5h0M772.5 551.5h0M772.5 552.5h0M773.5 495.5h0M773.5 543.5h0M774.5 504.5h0M774.5 505.5h0M774.5 507.5h0M774.5 514.5h0M774.5 540.5h0M774.5 544.5h0M774.5 546.5h0M774.5 547.5h0M774.5 548.5h0M775.5 499.5h0M775.5 501.5h0M775.5 503.5h0M775.5 509.5h0M775.5 513.5h0M775.5 544.5h0M775.5 546.5h0M775.5 551.5h0M775.5 554.5h0M776.5 511.5h0M776.5 539.5h0M777.5 502.5h0M777.5 505.5h0M777.5 508.5h0M777.5 542.5h0M777.5 544.5h0M777.5 553.5h0M778.5 506.5h0M778.5 507.5h0M778.5 508.5h0M778.5 541.5h0M778.5 543.5h0M778.5 544.5h0M778.5 547.5h0M779.5 503.5h0M779.5 510.5h0M779.5 539.5h0M779.5 545.5h0M779.5 548.5h0M780.5 501.5h0M780.5 508.5h0M780.5 514.5h0M780.5 540.5h0M780.5 543.5h0M780.5 549.5h0M780.5 550.5h0M781.5 509.5h0M782.5 499.5h0M782.5 500.5h0M782.5 504.5h0M782.5 506.5h0M782.5 509.5h0M782.5 513.5h0M782.5 514.5h0M782.5 551.5h0M782.5 554.5h0M783.5 504.5h0M783.5 510.5h0M783.5 511.5h0M783.5 540.5h0M783.5 542.5h0M783.5 548.5h0M784.5 501.5h0M784.5 541.5h0M784.5 551.5h0M784.5 558.5h0M785.5 507.5h0M785.5 509.5h0M785.5 511.5h0M785.5 514.5h0M785.5 541.5h0M785.5 542.5h0M785.5 544.5h0M785.5 552.5h0M786.5 503.5h0M786.5 509.5h0M786.5 511.5h0M786.5 539.5h0M786.5 541.5h0M786.5 545.5h0M786.5 546.5h0M787.5 508.5h0M787.5 510.5h0M787.5 511.5h0M787.5 539.5h0M787.5 542.5h0M787.5 543.5h0M787.5 550.5h0M788.5 504.5h0M788.5 510.5h0M788.5 513.5h0M788.5 540.5h0M788.5 545.5h0M789.5 512.5h0M789.5 542.5h0M789.5 546.5h0M789.5 550.5h0M789.5 551.5h0M790.5 510.5h0M790.5 512.5h0M790.5 541.5h0M790.5 543.5h0M790.5 544.5h0M791.5 508.5h0M791.5 510.5h0M791.5 513.5h0M791.5 514.5h0M791.5 548.5h0M791.5 550.5h0M791.5 553.5h0M792.5 506.5h0M792.5 510.5h0M792.5 512.5h0M792.5 513.5h0M792.5 542.5h0M792.5 543.5h0M792.5 545.5h0M793.5 509.5h0M793.5 512.5h0M793.5 514.5h0M793.5 539.5h0M793.5 550.5h0M794.5 504.5h0M794.5 510.5h0M794.5 511.5h0M794.5 541.5h0M794.5 543.5h0M794.5 545.5h0M794.5 546.5h0M794.5 547.5h0M794.5 552.5h0M795.5 495.5h0M795.5 502.5h0M795.5 505.5h0M795.5 509.5h0M795.5 540.5h0M796.5 503.5h0M796.5 539.5h0M796.5 542.5h0M796.5 551.5h0M797.5 500.5h0M797.5 504.5h0M797.5 506.5h0M797.5 513.5h0M797.5 514.5h0M797.5 540.5h0M797.5 544.5h0M797.5 546.5h0M797.5 552.5h0M798.5 504.5h0M798.5 512.5h0M798.5 513.5h0M798.5 514.5h0M798.5 540.5h0M798.5 548.5h0M798.5 549.5h0M799.5 499.5h0M799.5 503.5h0M799.5 539.5h0M799.5 540.5h0M799.5 557.5h0M800.5 503.5h0M800.5 509.5h0M800.5 510.5h0M800.5 512.5h0M800.5 540.5h0M800.5 547.5h0M800.5 548.5h0M800.5 551.5h0M801.5 500.5h0M801.5 508.5h0M801.5 509.5h0M801.5 512.5h0M801.5 540.5h0M801.5 541.5h0M801.5 542.5h0M801.5 543.5h0M801.5 547.5h0M801.5 555.5h0M802.5 503.5h0M802.5 504.5h0M802.5 510.5h0M802.5 511.5h0M802.5 512.5h0M802.5 539.5h0M802.5 541.5h0M802.5 547.5h0M802.5 550.5h0M802.5 553.5h0M803.5 505.5h0M803.5 514.5h0M803.5 542.5h0M803.5 545.5h0M803.5 547.5h0M803.5 549.5h0M803.5 551.5h0M803.5 553.5h0M804.5 505.5h0M804.5 508.5h0M804.5 511.5h0M804.5 513.5h0M804.5 539.5h0M804.5 545.5h0M804.5 553.5h0M805.5 507.5h0M805.5 511.5h0M805.5 514.5h0M805.5 552.5h0M805.5 553.5h0M806.5 499.5h0M806.5 510.5h0M806.5 539.5h0M806.5 540.5h0M807.5 502.5h0M807.5 503.5h0M807.5 504.5h0M807.5 510.5h0M807.5 513.5h0M807.5 546.5h0M807.5 554.5h0M808.5 510.5h0M808.5 540.5h0M808.5 542.5h0M808.5 545.5h0M808.5 548.5h0M809.5 506.5h0M809.5 507.5h0M809.5 511.5h0M809.5 541.5h0M810.5 505.5h0M810.5 506.5h0M810.5 513.5h0M810.5 542.5h0M810.5 543.5h0M811.5 508.5h0M811.5 514.5h0M811.5 543.5h0M811.5 548.5h0M811.5 553.5h0M811.5 555.5h0M812.5 499.5h0M812.5 501.5h0M812.5 504.5h0M812.5 544.5h0M812.5 545.5h0M812.5 546.5h0M813.5 501.5h0M813.5 503.5h0M813.5 505.5h0M813.5 508.5h0M813.5 511.5h0M813.5 512.5h0M813.5 514.5h0M813.5 539.5h0M813.5 545.5h0M813.5 553.5h0M814.5 501.5h0M814.5 502.5h0M814.5 511.5h0M814.5 512.5h0M814.5 514.5h0M814.5 554.5h0M814.5 556.5h0M815.5 513.5h0M815.5 540.5h0M815.5 541.5h0M815.5 545.5h0M815.5 554.5h0M816.5 510.5h0M816.5 513.5h0M816.5 514.5h0M817.5 498.5h0M817.5 499.5h0M817.5 501.5h0M817.5 511.5h0M817.5 542.5h0M817.5 547.5h0M817.5 553.5h0M817.5 556.5h0M818.5 505.5h0M818.5 509.5h0M818.5 512.5h0M818.5 539.5h0M818.5 546.5h0M818.5 549.5h0M818.5 551.5h0M819.5 495.5h0M819.5 498.5h0M819.5 502.5h0M819.5 507.5h0M819.5 511.5h0M819.5 512.5h0M819.5 513.5h0M819.5 558.5h0M820.5 512.5h0M820.5 514.5h0M820.5 539.5h0M820.5 540.5h0M820.5 542.5h0M820.5 544.5h0M820.5 549.5h0M820.5 551.5h0M821.5 501.5h0M821.5 505.5h0M821.5 514.5h0M821.5 539.5h0M821.5 541.5h0M822.5 512.5h0M822.5 539.5h0M822.5 551.5h0M823.5 499.5h0M823.5 504.5h0M823.5 506.5h0M823.5 543.5h0M823.5 556.5h0M824.5 501.5h0M824.5 510.5h0M824.5 512.5h0M824.5 513.5h0M824.5 544.5h0M825.5 502.5h0M825.5 507.5h0M825.5 508.5h0M825.5 509.5h0M825.5 514.5h0M825.5 541.5h0M825.5 543.5h0M825.5 547.5h0M825.5 548.5h0M825.5 556.5h0M826.5 510.5h0M826.5 513.5h0M826.5 539.5h0M826.5 544.5h0M826.5 555.5h0M827.5 497.5h0M827.5 498.5h0M827.5 510.5h0M827.5 513.5h0M827.5 541.5h0M827.5 544.5h0M827.5 550.5h0M828.5 494.5h0M828.5 507.5h0M828.5 509.5h0M828.5 511.5h0M828.5 551.5h0M829.5 498.5h0M829.5 501.5h0M829.5 510.5h0M829.5 543.5h0M829.5 546.5h0M829.5 548.5h0M829.5 551.5h0M830.5 502.5h0M830.5 511.5h0M830.5 512.5h0M830.5 546.5h0M830.5 548.5h0M830.5 550.5h0M831.5 509.5h0M831.5 510.5h0M831.5 512.5h0M831.5 514.5h0M831.5 539.5h0M831.5 540.5h0M831.5 544.5h0M831.5 548.5h0M832.5 499.5h0M832.5 502.5h0M832.5 505.5h0M832.5 506.5h0M832.5 508.5h0M832.5 512.5h0M832.5 514.5h0M832.5 546.5h0M832.5 551.5h0M832.5 553.5h0M833.5 501.5h0M833.5 505.5h0M833.5 510.5h0M833.5 514.5h0M833.5 541.5h0M833.5 547.5h0M833.5 548.5h0M834.5 499.5h0M834.5 508.5h0M834.5 510.5h0M834.5 539.5h0M834.5 548.5h0M834.5 550.5h0M834.5 551.5h0M834.5 554.5h0M835.5 503.5h0M835.5 508.5h0M835.5 509.5h0M835.5 512.5h0M835.5 540.5h0M835.5 548.5h0M835.5 552.5h0M836.5 504.5h0M836.5 506.5h0M836.5 508.5h0M836.5 511.5h0M836.5 539.5h0M836.5 545.5h0M837.5 508.5h0M837.5 509.5h0M837.5 514.5h0M837.5 540.5h0M837.5 545.5h0M837.5 551.5h0M838.5 505.5h0M838.5 509.5h0M838.5 511.5h0M838.5 512.5h0M838.5 540.5h0M838.5 544.5h0M838.5 552.5h0M839.5 496.5h0M839.5 498.5h0M839.5 507.5h0M839.5 512.5h0M839.5 513.5h0M839.5 539.5h0M839.5 541.5h0M839.5 546.5h0M839.5 547.5h0M840.5 498.5h0M840.5 512.5h0M840.5 514.5h0M840.5 549.5h0M840.5 550.5h0M841.5 495.5h0M841.5 497.5h0M841.5 498.5h0M841.5 501.5h0M841.5 505.5h0M841.5 509.5h0M842.5 505.5h0M842.5 510.5h0M842.5 513.5h0M842.5 514.5h0M842.5 540.5h0M842.5 544.5h0M842.5 552.5h0M842.5 553.5h0M843.5 505.5h0M843.5 509.5h0M843.5 539.5h0M843.5 543.5h0M843.5 547.5h0M843.5 550.5h0M844.5 502.5h0M844.5 511.5h0M844.5 513.5h0M844.5 514.5h0M844.5 539.5h0M844.5 541.5h0M844.5 545.5h0M845.5 499.5h0M845.5 502.5h0M845.5 504.5h0M845.5 508.5h0M845.5 509.5h0M845.5 541.5h0M845.5 542.5h0M845.5 548.5h0M846.5 500.5h0M846.5 503.5h0M846.5 507.5h0M846.5 508.5h0M846.5 539.5h0M846.5 549.5h0M846.5 552.5h0M847.5 502.5h0M847.5 540.5h0M847.5 541.5h0M847.5 545.5h0M847.5 550.5h0M848.5 500.5h0M848.5 509.5h0M848.5 510.5h0M848.5 539.5h0M848.5 540.5h0M848.5 542.5h0M848.5 545.5h0M848.5 546.5h0M848.5 549.5h0M849.5 514.5h0M849.5 539.5h0M849.5 547.5h0M850.5 495.5h0M850.5 499.5h0M850.5 501.5h0M850.5 508.5h0M850.5 514.5h0M850.5 541.5h0M850.5 542.5h0M850.5 555.5h0M851.5 513.5h0M851.5 539.5h0M851.5 542.5h0M851.5 545.5h0M851.5 548.5h0M851.5 550.5h0M851.5 557.5h0M852.5 501.5h0M852.5 502.5h0M852.5 510.5h0M852.5 513.5h0M852.5 541.5h0M852.5 542.5h0M852.5 545.5h0M853.5 507.5h0M853.5 510.5h0M853.5 512.5h0M853.5 513.5h0M853.5 540.5h0M853.5 546.5h0M853.5 551.5h0M854.5 499.5h0M854.5 505.5h0M854.5 506.5h0M854.5 509.5h0M854.5 542.5h0M854.5 545.5h0M855.5 501.5h0M855.5 503.5h0M855.5 508.5h0M855.5 509.5h0M855.5 539.5h0M856.5 504.5h0M856.5 512.5h0M856.5 542.5h0M856.5 544.5h0M856.5 549.5h0M857.5 507.5h0M857.5 511.5h0M858.5 505.5h0M858.5 511.5h0M858.5 512.5h0M858.5 544.5h0M859.5 501.5h0M859.5 506.5h0M859.5 509.5h0M859.5 512.5h0M859.5 541.5h0M860.5 506.5h0M860.5 509.5h0M860.5 514.5h0M860.5 540.5h0M860.5 544.5h0M860.5 557.5h0M861.5 508.5h0M861.5 540.5h0M861.5 547.5h0M861.5 549.5h0M861.5 555.5h0M862.5 495.5h0M862.5 505.5h0M862.5 509.5h0M862.5 542.5h0M862.5 543.5h0M863.5 497.5h0M863.5 504.5h0M863.5 514.5h0M864.5 504.5h0M864.5 513.5h0M864.5 514.5h0M864.5 539.5h0M864.5 541.5h0M864.5 544.5h0M864.5 545.5h0M864.5 548.5h0M864.5 558.5h0M865.5 504.5h0M865.5 506.5h0M865.5 542.5h0M865.5 547.5h0M865.5 553.5h0M866.5 499.5h0M866.5 502.5h0M866.5 513.5h0M866.5 514.5h0M866.5 541.5h0M866.5 543.5h0M866.5 547.5h0M867.5 499.5h0M867.5 500.5h0M867.5 508.5h0M867.5 513.5h0M867.5 514.5h0M867.5 540.5h0M867.5 542.5h0M867.5 544.5h0M867.5 549.5h0M868.5 541.5h0M868.5 543.5h0M868.5 551.5h0M868.5 555.5h0M868.5 557.5h0M869.5 500.5h0M869.5 504.5h0M869.5 506.5h0M869.5 509.5h0M869.5 541.5h0M870.5 509.5h0M870.5 540.5h0M870.5 541.5h0M870.5 544.5h0M870.5 549.5h0M870.5 554.5h0M870.5 555.5h0M870.5 557.5h0M871.5 499.5h0M871.5 504.5h0M871.5 507.5h0M871.5 509.5h0M871.5 514.5h0M871.5 542.5h0M871.5 548.5h0M871.5 551.5h0M872.5 505.5h0M872.5 506.5h0M872.5 509.5h0M872.5 510.5h0M872.5 514.5h0M872.5 541.5h0M872.5 542.5h0M872.5 547.5h0M872.5 554.5h0M873.5 498.5h0M873.5 501.5h0M873.5 513.5h0M873.5 514.5h0M873.5 540.5h0M873.5 544.5h0M873.5 546.5h0M873.5 547.5h0M873.5 550.5h0M874.5 503.5h0M874.5 504.5h0M874.5 508.5h0M874.5 514.5h0M874.5 546.5h0M875.5 503.5h0M875.5 507.5h0M875.5 512.5h0M875.5 514.5h0M875.5 540.5h0M875.5 544.5h0M875.5 553.5h0M876.5 496.5h0M876.5 499.5h0M876.5 501.5h0M876.5 504.5h0M877.5 500.5h0M877.5 506.5h0M877.5 509.5h0M877.5 513.5h0M877.5 546.5h0M877.5 547.5h0M878.5 495.5h0M878.5 502.5h0M878.5 510.5h0M878.5 539.5h0M878.5 541.5h0M878.5 544.5h0M878.5 546.5h0M878.5 549.5h0M879.5 506.5h0M879.5 514.5h0M879.5 541.5h0M879.5 542.5h0M879.5 545.5h0M879.5 548.5h0M880.5 508.5h0M880.5 511.5h0M880.5 512.5h0M880.5 541.5h0M880.5 546.5h0M880.5 550.5h0M881.5 510.5h0M881.5 511.5h0M881.5 513.5h0M881.5 542.5h0M881.5 546.5h0M881.5 553.5h0M882.5 497.5h0M882.5 540.5h0M882.5 545.5h0M882.5 552.5h0M883.5 502.5h0M883.5 503.5h0M883.5 509.5h0M883.5 514.5h0M883.5 543.5h0M883.5 547.5h0M883.5 550.5h0M884.5 505.5h0M884.5 506.5h0M884.5 540.5h0M884.5 541.5h0M884.5 542.5h0M884.5 543.5h0M884.5 544.5h0M884.5 550.5h0M885.5 507.5h0M885.5 509.5h0M885.5 510.5h0M885.5 540.5h0M885.5 552.5h0M885.5 555.5h0M886.5 504.5h0M886.5 508.5h0M886.5 510.5h0M886.5 542.5h0M886.5 543.5h0M887.5 541.5h0M887.5 542.5h0M887.5 545.5h0M887.5 546.5h0M887.5 549.5h0M887.5 552.5h0M888.5 495.5h0M888.5 500.5h0M888.5 512.5h0M888.5 513.5h0M888.5 541.5h0M888.5 544.5h0M888.5 545.5h0M889.5 508.5h0M889.5 509.5h0M889.5 511.5h0M889.5 513.5h0M889.5 514.5h0M889.5 545.5h0M889.5 548.5h0M889.5 551.5h0M890.5 508.5h0M890.5 509.5h0M890.5 510.5h0M890.5 513.5h0M890.5 514.5h0M890.5 543.5h0M890.5 545.5h0M891.5 500.5h0M891.5 509.5h0M891.5 512.5h0M891.5 541.5h0M891.5 545.5h0M891.5 552.5h0M892.5 504.5h0M892.5 506.5h0M892.5 510.5h0M892.5 511.5h0M892.5 513.5h0M892.5 545.5h0M892.5 548.5h0M892.5 550.5h0M892.5 552.5h0M892.5 553.5h0M892.5 557.5h0M893.5 506.5h0M893.5 511.5h0M893.5 513.5h0M893.5 547.5h0M893.5 549.5h0M893.5 552.5h0M894.5 511.5h0M894.5 514.5h0M894.5 540.5h0M894.5 542.5h0M894.5 546.5h0M895.5 512.5h0M895.5 546.5h0M895.5 556.5h0M896.5 504.5h0M896.5 509.5h0M896.5 510.5h0M896.5 512.5h0M896.5 514.5h0M896.5 540.5h0M896.5 543.5h0M896.5 544.5h0M896.5 547.5h0M896.5 548.5h0M896.5 554.5h0M897.5 501.5h0M897.5 506.5h0M897.5 508.5h0M897.5 512.5h0M897.5 539.5h0M897.5 543.5h0M897.5 544.5h0M897.5 550.5h0M897.5 551.5h0M898.5 513.5h0M898.5 541.5h0M898.5 547.5h0M898.5 550.5h0M898.5 552.5h0M899.5 504.5h0M899.5 505.5h0M899.5 514.5h0M899.5 541.5h0M899.5 542.5h0M899.5 547.5h0M899.5 549.5h0M900.5 539.5h0M900.5 545.5h0M900.5 548.5h0M900.5 554.5h0M901.5 498.5h0M901.5 510.5h0M901.5 513.5h0M901.5 543.5h0M902.5 500.5h0M902.5 503.5h0M902.5 510.5h0M902.5 512.5h0M902.5 513.5h0M902.5 555.5h0M903.5 500.5h0M903.5 504.5h0M903.5 510.5h0M903.5 539.5h0M903.5 543.5h0M903.5 544.5h0M903.5 546.5h0M903.5 550.5h0M904.5 502.5h0M904.5 506.5h0M904.5 507.5h0M904.5 512.5h0M904.5 513.5h0M904.5 514.5h0M904.5 540.5h0M904.5 542.5h0M904.5 546.5h0M904.5 550.5h0M905.5 543.5h0M905.5 544.5h0M905.5 546.5h0M906.5 502.5h0M906.5 505.5h0M906.5 508.5h0M906.5 509.5h0M906.5 510.5h0M907.5 501.5h0M907.5 502.5h0M907.5 505.5h0M907.5 507.5h0M907.5 510.5h0M907.5 514.5h0M907.5 542.5h0M908.5 501.5h0M908.5 508.5h0M908.5 547.5h0M909.5 499.5h0M909.5 509.5h0M909.5 543.5h0M909.5 550.5h0M910.5 511.5h0M910.5 540.5h0M910.5 550.5h0M911.5 495.5h0M911.5 498.5h0M911.5 501.5h0M911.5 504.5h0M911.5 513.5h0M911.5 541.5h0M911.5 543.5h0M911.5 547.5h0M911.5 551.5h0M912.5 500.5h0M912.5 504.5h0M912.5 510.5h0M912.5 511.5h0M912.5 514.5h0M912.5 539.5h0M912.5 540.5h0M912.5 547.5h0M913.5 502.5h0M913.5 505.5h0M913.5 508.5h0M913.5 510.5h0M913.5 541.5h0M914.5 500.5h0M914.5 510.5h0M914.5 512.5h0M914.5 514.5h0M914.5 540.5h0M915.5 502.5h0M915.5 507.5h0M915.5 539.5h0M915.5 542.5h0M915.5 544.5h0M916.5 508.5h0M916.5 510.5h0M916.5 513.5h0M916.5 540.5h0M916.5 546.5h0M916.5 550.5h0M916.5 552.5h0M917.5 509.5h0M917.5 514.5h0M917.5 545.5h0M917.5 547.5h0M918.5 499.5h0M918.5 545.5h0M918.5 546.5h0M918.5 548.5h0M918.5 553.5h0M918.5 555.5h0M919.5 502.5h0M919.5 506.5h0M919.5 507.5h0M919.5 511.5h0M919.5 539.5h0M919.5 540.5h0M919.5 542.5h0M919.5 546.5h0M920.5 512.5h0M920.5 542.5h0M920.5 546.5h0M920.5 547.5h0M920.5 551.5h0M921.5 497.5h0M921.5 508.5h0M921.5 541.5h0M921.5 542.5h0M921.5 546.5h0M921.5 547.5h0M921.5 551.5h0M922.5 500.5h0M922.5 501.5h0M922.5 509.5h0M922.5 510.5h0M922.5 514.5h0M922.5 544.5h0M922.5 546.5h0M923.5 501.5h0M923.5 507.5h0M923.5 511.5h0M923.5 512.5h0M923.5 542.5h0M923.5 543.5h0M923.5 544.5h0M923.5 546.5h0M923.5 547.5h0M924.5 502.5h0M924.5 505.5h0M924.5 511.5h0M924.5 512.5h0M924.5 514.5h0M924.5 557.5h0M925.5 509.5h0M925.5 512.5h0M925.5 540.5h0M925.5 548.5h0M925.5 555.5h0M926.5 502.5h0M926.5 509.5h0M926.5 510.5h0M926.5 511.5h0M926.5 513.5h0M926.5 539.5h0M926.5 541.5h0M926.5 542.5h0M926.5 555.5h0M927.5 507.5h0M927.5 509.5h0M927.5 510.5h0M927.5 542.5h0M927.5 543.5h0M927.5 544.5h0M927.5 545.5h0M927.5 553.5h0M928.5 498.5h0M928.5 501.5h0M928.5 511.5h0M928.5 513.5h0M928.5 546.5h0M928.5 550.5h0M929.5 497.5h0M929.5 500.5h0M929.5 505.5h0M929.5 508.5h0M929.5 512.5h0M929.5 540.5h0M929.5 541.5h0M929.5 550.5h0M930.5 503.5h0M930.5 504.5h0M930.5 505.5h0M930.5 511.5h0M930.5 551.5h0M931.5 504.5h0M931.5 506.5h0M931.5 512.5h0M931.5 514.5h0M931.5 542.5h0M931.5 544.5h0M932.5 498.5h0M932.5 502.5h0M932.5 512.5h0M932.5 539.5h0M932.5 541.5h0M932.5 550.5h0M932.5 552.5h0M933.5 545.5h0M933.5 550.5h0M933.5 555.5h0M934.5 500.5h0M934.5 509.5h0M934.5 510.5h0M934.5 514.5h0M934.5 540.5h0M934.5 541.5h0M934.5 556.5h0M935.5 498.5h0M935.5 510.5h0M935.5 513.5h0M936.5 494.5h0M936.5 502.5h0M936.5 505.5h0M936.5 512.5h0M936.5 513.5h0M936.5 514.5h0M936.5 542.5h0M936.5 543.5h0M936.5 545.5h0M936.5 552.5h0M937.5 497.5h0M937.5 503.5h0M937.5 508.5h0M937.5 514.5h0M937.5 539.5h0M937.5 545.5h0M937.5 546.5h0M937.5 550.5h0M938.5 506.5h0M938.5 512.5h0M938.5 540.5h0M938.5 541.5h0M938.5 551.5h0M939.5 504.5h0M939.5 512.5h0M939.5 514.5h0M939.5 542.5h0M939.5 543.5h0M939.5 544.5h0M939.5 552.5h0M940.5 502.5h0M940.5 507.5h0M940.5 512.5h0M940.5 539.5h0M940.5 542.5h0M940.5 545.5h0M940.5 547.5h0M940.5 553.5h0M941.5 501.5h0M941.5 503.5h0M941.5 508.5h0M941.5 510.5h0M941.5 511.5h0M941.5 512.5h0M941.5 546.5h0M942.5 503.5h0M942.5 543.5h0M942.5 545.5h0M943.5 502.5h0M943.5 506.5h0M943.5 507.5h0M943.5 510.5h0M943.5 514.5h0M943.5 544.5h0M943.5 549.5h0M944.5 504.5h0M944.5 514.5h0M944.5 539.5h0M944.5 552.5h0M945.5 499.5h0M945.5 503.5h0M945.5 507.5h0M945.5 541.5h0M945.5 544.5h0M945.5 545.5h0M946.5 499.5h0M946.5 508.5h0M946.5 514.5h0M946.5 541.5h0M946.5 542.5h0M946.5 544.5h0M947.5 514.5h0M947.5 539.5h0M947.5 553.5h0M948.5 506.5h0M948.5 513.5h0M948.5 540.5h0M948.5 543.5h0M948.5 545.5h0M948.5 546.5h0M948.5 548.5h0M948.5 549.5h0M949.5 509.5h0M949.5 512.5h0M949.5 513.5h0M949.5 545.5h0M949.5 551.5h0M949.5 552.5h0M950.5 500.5h0M950.5 504.5h0M950.5 514.5h0M950.5 543.5h0M951.5 500.5h0M951.5 501.5h0M951.5 508.5h0M951.5 511.5h0M951.5 514.5h0M952.5 505.5h0M952.5 508.5h0M952.5 511.5h0M952.5 514.5h0M952.5 540.5h0M952.5 542.5h0M953.5 494.5h0M953.5 501.5h0M953.5 506.5h0M953.5 509.5h0M953.5 540.5h0M953.5 541.5h0M953.5 542.5h0M953.5 545.5h0M954.5 502.5h0M954.5 507.5h0M954.5 541.5h0M954.5 551.5h0M955.5 499.5h0M955.5 510.5h0M955.5 512.5h0M955.5 543.5h0M955.5 545.5h0M956.5 502.5h0M956.5 507.5h0M956.5 509.5h0M956.5 512.5h0M956.5 542.5h0M956.5 555.5h0M957.5 512.5h0M957.5 514.5h0M957.5 542.5h0M957.5 543.5h0M957.5 550.5h0M958.5 504.5h0M958.5 508.5h0M958.5 539.5h0M958.5 543.5h0M958.5 547.5h0M959.5 505.5h0M959.5 509.5h0M959.5 540.5h0M960.5 506.5h0M960.5 512.5h0M960.5 513.5h0M960.5 514.5h0M960.5 540.5h0M960.5 545.5h0M961.5 508.5h0M961.5 510.5h0M961.5 539.5h0M961.5 541.5h0M961.5 551.5h0M962.5 509.5h0M962.5 549.5h0M962.5 550.5h0M963.5 500.5h0M963.5 502.5h0M963.5 505.5h0M963.5 509.5h0M963.5 512.5h0M963.5 513.5h0M963.5 541.5h0M963.5 542.5h0M963.5 548.5h0M964.5 508.5h0M964.5 543.5h0M964.5 547.5h0M965.5 539.5h0M965.5 548.5h0M965.5 551.5h0M966.5 507.5h0M966.5 508.5h0M966.5 510.5h0M966.5 511.5h0M966.5 514.5h0M966.5 540.5h0M966.5 543.5h0M966.5 554.5h0M967.5 499.5h0M967.5 504.5h0M967.5 506.5h0M967.5 507.5h0M967.5 511.5h0M967.5 513.5h0M967.5 539.5h0M967.5 540.5h0M967.5 541.5h0M967.5 544.5h0M967.5 548.5h0M967.5 551.5h0M967.5 554.5h0M968.5 510.5h0M968.5 511.5h0M968.5 539.5h0M968.5 540.5h0M969.5 504.5h0M969.5 511.5h0M969.5 512.5h0M969.5 514.5h0M969.5 542.5h0M969.5 543.5h0M969.5 544.5h0M969.5 546.5h0M969.5 550.5h0M970.5 506.5h0M970.5 512.5h0M970.5 514.5h0M970.5 542.5h0M970.5 544.5h0M971.5 508.5h0M971.5 510.5h0M971.5 543.5h0M971.5 546.5h0M971.5 548.5h0M971.5 554.5h0M972.5 506.5h0M972.5 513.5h0M972.5 542.5h0M972.5 544.5h0M972.5 551.5h0M973.5 507.5h0M973.5 509.5h0M973.5 510.5h0M973.5 511.5h0M973.5 512.5h0M973.5 540.5h0M973.5 541.5h0M973.5 544.5h0M974.5 502.5h0M974.5 507.5h0M974.5 510.5h0M974.5 539.5h0M974.5 540.5h0M974.5 548.5h0M974.5 549.5h0M975.5 500.5h0M975.5 504.5h0M975.5 513.5h0M975.5 539.5h0M975.5 542.5h0M975.5 545.5h0M975.5 547.5h0M976.5 500.5h0M976.5 511.5h0M976.5 513.5h0M976.5 549.5h0M977.5 497.5h0M977.5 505.5h0M977.5 512.5h0M977.5 514.5h0M977.5 540.5h0M977.5 543.5h0M978.5 506.5h0M978.5 510.5h0M978.5 513.5h0M978.5 514.5h0M978.5 540.5h0M978.5 541.5h0M978.5 542.5h0M978.5 543.5h0M978.5 547.5h0M978.5 554.5h0M979.5 500.5h0M979.5 507.5h0M979.5 539.5h0M979.5 542.5h0M979.5 543.5h0M979.5 544.5h0M979.5 551.5h0M980.5 508.5h0M980.5 555.5h0M981.5 497.5h0M981.5 499.5h0M981.5 507.5h0M981.5 509.5h0M981.5 513.5h0M982.5 495.5h0M982.5 501.5h0M982.5 503.5h0M982.5 540.5h0M982.5 543.5h0M982.5 548.5h0M982.5 551.5h0M983.5 507.5h0M983.5 508.5h0M983.5 511.5h0M983.5 512.5h0M983.5 539.5h0M983.5 543.5h0M983.5 547.5h0M983.5 551.5h0M984.5 499.5h0M984.5 514.5h0M984.5 547.5h0M984.5 550.5h0M985.5 504.5h0M985.5 539.5h0M985.5 542.5h0M985.5 544.5h0M986.5 510.5h0M986.5 513.5h0M987.5 504.5h0M987.5 506.5h0M987.5 509.5h0M987.5 512.5h0M987.5 513.5h0M987.5 514.5h0M987.5 540.5h0M987.5 541.5h0M987.5 552.5h0M988.5 505.5h0M988.5 508.5h0M988.5 513.5h0M988.5 539.5h0M988.5 549.5h0M988.5 550.5h0M989.5 504.5h0M989.5 510.5h0M989.5 541.5h0M989.5 542.5h0M989.5 543.5h0M989.5 556.5h0M990.5 511.5h0M990.5 540.5h0M991.5 498.5h0M991.5 499.5h0M991.5 500.5h0M991.5 509.5h0M991.5 513.5h0M991.5 514.5h0M991.5 548.5h0M991.5 557.5h0M992.5 505.5h0M992.5 539.5h0M992.5 542.5h0M992.5 544.5h0M993.5 500.5h0M993.5 502.5h0M993.5 505.5h0M993.5 508.5h0M993.5 539.5h0M993.5 546.5h0M993.5 550.5h0M993.5 554.5h0M994.5 507.5h0M994.5 513.5h0M994.5 539.5h0M994.5 543.5h0M994.5 544.5h0M994.5 547.5h0M994.5 555.5h0M995.5 510.5h0M995.5 513.5h0M995.5 541.5h0M995.5 544.5h0M996.5 508.5h0M996.5 510.5h0M996.5 514.5h0M996.5 542.5h0M996.5 543.5h0M997.5 504.5h0M997.5 507.5h0M997.5 546.5h0M998.5 512.5h0M998.5 513.5h0M998.5 514.5h0M998.5 553.5h0M999.5 498.5h0M999.5 510.5h0M999.5 513.5h0M999.5 541.5h0M999.5 544.5h0M999.5 545.5h0M1000.5 499.5h0M1000.5 512.5h0M1001.5 494.5h0M1001.5 505.5h0M1001.5 514.5h0M1001.5 548.5h0M1001.5 552.5h0M1001.5 553.5h0M1002.5 501.5h0M1002.5 504.5h0M1002.5 556.5h0M1003.5 509.5h0M1003.5 511.5h0M1003.5 513.5h0M1003.5 514.5h0M1003.5 540.5h0M1003.5 545.5h0M1003.5 549.5h0M1003.5 552.5h0M1004.5 498.5h0M1004.5 500.5h0M1004.5 502.5h0M1004.5 507.5h0M1004.5 512.5h0M1004.5 513.5h0M1004.5 514.5h0M1004.5 542.5h0M1004.5 543.5h0M1004.5 551.5h0M1005.5 508.5h0M1005.5 513.5h0M1005.5 544.5h0M1005.5 545.5h0M1006.5 498.5h0M1006.5 503.5h0M1006.5 505.5h0M1006.5 507.5h0M1006.5 508.5h0M1006.5 512.5h0M1006.5 540.5h0M1006.5 541.5h0M1006.5 543.5h0M1006.5 547.5h0M1007.5 500.5h0M1007.5 506.5h0M1007.5 509.5h0M1007.5 540.5h0M1007.5 543.5h0M1007.5 544.5h0M1008.5 498.5h0M1008.5 503.5h0M1008.5 505.5h0M1008.5 507.5h0M1008.5 512.5h0M1008.5 539.5h0M1008.5 550.5h0M1009.5 500.5h0M1009.5 506.5h0M1009.5 513.5h0M1009.5 514.5h0M1009.5 539.5h0M1009.5 546.5h0M1009.5 548.5h0M1009.5 549.5h0M1010.5 494.5h0M1010.5 500.5h0M1010.5 511.5h0M1010.5 512.5h0M1010.5 539.5h0M1010.5 543.5h0M1010.5 551.5h0M1010.5 555.5h0M1011.5 500.5h0M1011.5 502.5h0M1011.5 504.5h0M1011.5 510.5h0M1011.5 539.5h0M1011.5 542.5h0M1012.5 506.5h0M1012.5 510.5h0M1012.5 514.5h0M1012.5 543.5h0M1012.5 544.5h0M1012.5 546.5h0M1012.5 552.5h0M1012.5 555.5h0M1013.5 495.5h0M1013.5 505.5h0M1013.5 539.5h0M1013.5 542.5h0M1013.5 552.5h0M1013.5 557.5h0M1014.5 504.5h0M1014.5 509.5h0M1014.5 514.5h0M1014.5 539.5h0M1014.5 540.5h0M1014.5 541.5h0M1014.5 544.5h0M1014.5 546.5h0M1015.5 502.5h0M1015.5 504.5h0M1015.5 506.5h0M1015.5 507.5h0M1015.5 514.5h0M1015.5 542.5h0M1015.5 550.5h0M1015.5 551.5h0M1016.5 500.5h0M1016.5 501.5h0M1016.5 505.5h0M1016.5 510.5h0M1016.5 514.5h0M1016.5 543.5h0M1016.5 544.5h0M1016.5 545.5h0M1016.5 551.5h0M1017.5 502.5h0M1017.5 506.5h0M1017.5 510.5h0M1017.5 539.5h0M1017.5 551.5h0M1018.5 511.5h0M1018.5 513.5h0M1018.5 539.5h0M1019.5 501.5h0M1019.5 502.5h0M1019.5 506.5h0M1019.5 508.5h0M1019.5 543.5h0M1019.5 556.5h0M1020.5 505.5h0M1020.5 511.5h0M1020.5 541.5h0M1020.5 545.5h0M1020.5 548.5h0M1021.5 503.5h0M1021.5 505.5h0M1021.5 506.5h0M1021.5 540.5h0M1021.5 541.5h0M1021.5 550.5h0M1022.5 511.5h0M1022.5 514.5h0M1022.5 540.5h0M1022.5 545.5h0M1023.5 507.5h0M1023.5 540.5h0M1023.5 542.5h0M1023.5 546.5h0M1024.5 499.5h0M1024.5 505.5h0M1024.5 510.5h0M1024.5 514.5h0M1024.5 539.5h0M1024.5 546.5h0M1024.5 547.5h0M1025.5 500.5h0M1025.5 502.5h0M1025.5 504.5h0M1025.5 539.5h0M1025.5 540.5h0M1025.5 541.5h0M1025.5 542.5h0M1025.5 544.5h0M1025.5 548.5h0M1026.5 503.5h0M1026.5 510.5h0M1026.5 511.5h0M1026.5 543.5h0M1026.5 551.5h0M1027.5 503.5h0M1027.5 508.5h0M1027.5 509.5h0M1027.5 511.5h0M1027.5 545.5h0M1027.5 551.5h0M1027.5 552.5h0M1028.5 499.5h0M1028.5 502.5h0M1028.5 504.5h0M1028.5 506.5h0M1028.5 510.5h0M1028.5 540.5h0M1028.5 541.5h0M1028.5 546.5h0M1028.5 550.5h0M1028.5 552.5h0M1029.5 500.5h0M1029.5 508.5h0M1029.5 509.5h0M1029.5 513.5h0M1029.5 514.5h0M1029.5 542.5h0M1029.5 543.5h0M1030.5 501.5h0M1030.5 505.5h0M1030.5 509.5h0M1030.5 512.5h0M1030.5 541.5h0M1030.5 542.5h0M1030.5 552.5h0M1031.5 509.5h0M1031.5 513.5h0M1031.5 542.5h0M1031.5 548.5h0M1032.5 506.5h0M1032.5 509.5h0M1032.5 511.5h0M1032.5 512.5h0M1032.5 540.5h0M1032.5 544.5h0M1032.5 550.5h0M1033.5 506.5h0M1033.5 514.5h0M1033.5 540.5h0M1033.5 542.5h0M1034.5 510.5h0M1034.5 511.5h0M1034.5 512.5h0M1034.5 540.5h0M1034.5 553.5h0M1035.5 503.5h0M1035.5 507.5h0M1035.5 508.5h0M1035.5 509.5h0M1035.5 514.5h0M1035.5 544.5h0M1035.5 548.5h0M1035.5 551.5h0M1036.5 510.5h0M1036.5 514.5h0M1036.5 539.5h0M1036.5 540.5h0M1036.5 544.5h0M1037.5 514.5h0M1037.5 540.5h0M1038.5 498.5h0M1038.5 508.5h0M1038.5 509.5h0M1038.5 513.5h0M1038.5 514.5h0M1038.5 541.5h0M1038.5 544.5h0M1038.5 545.5h0M1039.5 509.5h0M1039.5 511.5h0M1039.5 513.5h0M1039.5 541.5h0M1039.5 548.5h0M1039.5 550.5h0M1040.5 503.5h0M1040.5 509.5h0M1040.5 513.5h0M1040.5 514.5h0M1040.5 545.5h0M1041.5 504.5h0M1041.5 509.5h0M1041.5 514.5h0M1041.5 539.5h0M1041.5 540.5h0M1041.5 542.5h0M1041.5 548.5h0M1041.5 551.5h0M1042.5 499.5h0M1042.5 505.5h0M1042.5 514.5h0M1042.5 547.5h0M1042.5 548.5h0M1043.5 499.5h0M1043.5 511.5h0M1043.5 512.5h0M1043.5 513.5h0M1043.5 541.5h0M1044.5 503.5h0M1044.5 504.5h0M1044.5 508.5h0M1044.5 510.5h0M1044.5 514.5h0M1044.5 539.5h0M1044.5 542.5h0M1045.5 500.5h0M1045.5 507.5h0M1045.5 513.5h0M1045.5 542.5h0M1045.5 543.5h0M1045.5 545.5h0M1046.5 513.5h0M1046.5 514.5h0M1046.5 555.5h0M1047.5 510.5h0M1047.5 511.5h0M1047.5 512.5h0M1047.5 541.5h0M1047.5 547.5h0M1047.5 552.5h0M1048.5 507.5h0M1048.5 509.5h0M1048.5 512.5h0M1048.5 539.5h0M1048.5 554.5h0M1049.5 500.5h0M1049.5 505.5h0M1049.5 512.5h0M1049.5 540.5h0M1049.5 547.5h0M1049.5 552.5h0M1050.5 509.5h0M1050.5 512.5h0M1050.5 513.5h0M1050.5 539.5h0M1050.5 540.5h0M1050.5 543.5h0M1050.5 547.5h0M1050.5 557.5h0M1051.5 500.5h0M1051.5 505.5h0M1051.5 508.5h0M1051.5 539.5h0M1051.5 548.5h0M1052.5 496.5h0M1052.5 501.5h0M1052.5 511.5h0M1052.5 512.5h0M1052.5 539.5h0M1052.5 541.5h0M1052.5 547.5h0M1052.5 557.5h0M1053.5 496.5h0M1053.5 508.5h0M1053.5 512.5h0M1053.5 514.5h0M1053.5 546.5h0M1053.5 551.5h0M1053.5 555.5h0M1054.5 498.5h0M1054.5 505.5h0M1054.5 544.5h0M1054.5 545.5h0M1055.5 511.5h0M1055.5 513.5h0M1055.5 514.5h0M1055.5 539.5h0M1055.5 544.5h0M1055.5 545.5h0M1056.5 501.5h0M1056.5 509.5h0M1056.5 511.5h0M1056.5 513.5h0M1056.5 514.5h0M1056.5 539.5h0M1056.5 550.5h0M1056.5 551.5h0M1056.5 554.5h0M1057.5 497.5h0M1057.5 511.5h0M1057.5 512.5h0M1057.5 540.5h0M1057.5 547.5h0M1057.5 549.5h0M1057.5 550.5h0M1058.5 503.5h0M1058.5 504.5h0M1058.5 507.5h0M1058.5 509.5h0M1058.5 539.5h0M1058.5 540.5h0M1058.5 547.5h0M1058.5 551.5h0M1059.5 514.5h0M1059.5 540.5h0M1059.5 541.5h0M1059.5 543.5h0M1059.5 544.5h0M1059.5 549.5h0M1060.5 494.5h0M1060.5 500.5h0M1060.5 502.5h0M1060.5 503.5h0M1060.5 507.5h0M1060.5 514.5h0M1060.5 540.5h0M1060.5 541.5h0M1060.5 547.5h0M1061.5 503.5h0M1061.5 514.5h0M1061.5 541.5h0M1061.5 542.5h0M1062.5 544.5h0M1062.5 547.5h0M1063.5 506.5h0M1063.5 507.5h0M1063.5 509.5h0M1063.5 541.5h0M1063.5 542.5h0M1063.5 552.5h0M1064.5 501.5h0M1064.5 510.5h0M1064.5 511.5h0M1064.5 512.5h0M1064.5 513.5h0M1064.5 514.5h0M1064.5 544.5h0M1064.5 555.5h0M1065.5 496.5h0M1065.5 511.5h0M1065.5 512.5h0M1065.5 543.5h0M1065.5 549.5h0M1065.5 551.5h0M1066.5 504.5h0M1066.5 506.5h0M1066.5 508.5h0M1066.5 550.5h0M1067.5 501.5h0M1067.5 505.5h0M1067.5 512.5h0M1067.5 514.5h0M1067.5 540.5h0M1067.5 551.5h0M1067.5 552.5h0M1068.5 501.5h0M1068.5 505.5h0M1068.5 509.5h0M1068.5 513.5h0M1068.5 546.5h0M1069.5 505.5h0M1069.5 509.5h0M1069.5 547.5h0M1069.5 548.5h0M1069.5 551.5h0M1070.5 503.5h0M1070.5 508.5h0M1070.5 509.5h0M1070.5 514.5h0M1070.5 540.5h0M1070.5 550.5h0M1071.5 499.5h0M1071.5 500.5h0M1071.5 542.5h0M1071.5 543.5h0M1071.5 545.5h0M1071.5 550.5h0M1072.5 501.5h0M1072.5 508.5h0M1072.5 539.5h0M1072.5 540.5h0M1072.5 548.5h0M1072.5 554.5h0M1073.5 500.5h0M1073.5 503.5h0M1073.5 505.5h0M1073.5 506.5h0M1073.5 511.5h0M1073.5 512.5h0M1073.5 544.5h0M1073.5 546.5h0M1073.5 553.5h0M1074.5 502.5h0M1074.5 507.5h0M1074.5 542.5h0M1074.5 546.5h0M1075.5 503.5h0M1075.5 507.5h0M1075.5 512.5h0M1075.5 539.5h0M1075.5 540.5h0M1075.5 554.5h0M1076.5 513.5h0M1076.5 544.5h0M1077.5 501.5h0M1077.5 504.5h0M1077.5 509.5h0M1077.5 542.5h0M1077.5 545.5h0M1077.5 547.5h0M1077.5 548.5h0M1077.5 549.5h0M1078.5 507.5h0M1078.5 511.5h0M1078.5 512.5h0M1078.5 548.5h0M1078.5 555.5h0M1079.5 505.5h0M1079.5 539.5h0M1080.5 506.5h0M1080.5 507.5h0M1080.5 510.5h0M1080.5 514.5h0M1080.5 539.5h0M1080.5 540.5h0M1080.5 543.5h0M1081.5 506.5h0M1081.5 507.5h0M1081.5 511.5h0M1081.5 550.5h0M1082.5 509.5h0M1082.5 511.5h0M1082.5 539.5h0M1082.5 540.5h0M1082.5 543.5h0M1082.5 551.5h0M1083.5 513.5h0M1083.5 545.5h0M1083.5 546.5h0M1084.5 495.5h0M1084.5 496.5h0M1084.5 502.5h0M1084.5 509.5h0M1084.5 510.5h0M1084.5 514.5h0M1084.5 539.5h0M1084.5 543.5h0M1085.5 541.5h0M1085.5 549.5h0M1085.5 553.5h0M1086.5 506.5h0M1086.5 508.5h0M1086.5 511.5h0M1086.5 539.5h0M1086.5 542.5h0M1086.5 545.5h0M1086.5 547.5h0M1086.5 549.5h0M1086.5 559.5h0M1087.5 500.5h0M1087.5 503.5h0M1087.5 505.5h0M1087.5 512.5h0M1087.5 514.5h0M1087.5 539.5h0M1087.5 543.5h0M1087.5 544.5h0M1087.5 545.5h0M1087.5 546.5h0M1087.5 549.5h0M1087.5 556.5h0M1088.5 499.5h0M1088.5 500.5h0M1088.5 503.5h0M1088.5 504.5h0M1088.5 505.5h0M1088.5 510.5h0M1088.5 512.5h0M1088.5 514.5h0M1088.5 540.5h0M1088.5 541.5h0M1088.5 543.5h0M1088.5 550.5h0M1088.5 556.5h0M1089.5 498.5h0M1089.5 506.5h0M1089.5 512.5h0M1089.5 513.5h0M1089.5 514.5h0M1089.5 539.5h0M1089.5 540.5h0M1089.5 542.5h0M1089.5 543.5h0M1089.5 551.5h0M1089.5 553.5h0M1090.5 494.5h0M1090.5 498.5h0M1090.5 505.5h0M1090.5 509.5h0M1090.5 510.5h0M1090.5 511.5h0M1090.5 540.5h0M1090.5 546.5h0M1090.5 552.5h0M1091.5 499.5h0M1091.5 502.5h0M1091.5 504.5h0M1091.5 506.5h0M1091.5 511.5h0M1091.5 513.5h0M1091.5 539.5h0M1091.5 540.5h0M1091.5 543.5h0M1091.5 547.5h0M1091.5 548.5h0M1091.5 554.5h0M1092.5 499.5h0M1092.5 512.5h0M1092.5 514.5h0M1092.5 540.5h0M1092.5 543.5h0M1092.5 544.5h0M1092.5 550.5h0M1092.5 552.5h0M1093.5 497.5h0M1093.5 509.5h0M1093.5 511.5h0M1093.5 514.5h0M1094.5 499.5h0M1094.5 513.5h0M1094.5 540.5h0M1094.5 541.5h0M1094.5 542.5h0M1094.5 548.5h0M1095.5 495.5h0M1095.5 511.5h0M1095.5 512.5h0M1095.5 546.5h0M1095.5 547.5h0M1095.5 551.5h0M1096.5 500.5h0M1096.5 503.5h0M1096.5 509.5h0M1096.5 514.5h0M1096.5 539.5h0M1096.5 542.5h0M1096.5 543.5h0M1097.5 508.5h0M1097.5 512.5h0M1097.5 514.5h0M1097.5 541.5h0M1097.5 545.5h0M1097.5 547.5h0M1097.5 551.5h0M1098.5 500.5h0M1098.5 513.5h0M1098.5 514.5h0M1098.5 545.5h0M1098.5 555.5h0M1099.5 511.5h0M1099.5 542.5h0M1099.5 543.5h0M1099.5 552.5h0M1099.5 559.5h0M1100.5 499.5h0M1100.5 514.5h0M1100.5 542.5h0M1100.5 543.5h0M1101.5 500.5h0M1101.5 501.5h0M1101.5 507.5h0M1101.5 539.5h0M1101.5 540.5h0M1101.5 543.5h0M1101.5 545.5h0M1101.5 557.5h0M1102.5 506.5h0M1102.5 514.5h0M1102.5 541.5h0M1103.5 497.5h0M1103.5 505.5h0M1103.5 508.5h0M1103.5 539.5h0M1103.5 545.5h0M1104.5 504.5h0M1104.5 509.5h0M1104.5 510.5h0M1104.5 511.5h0M1104.5 513.5h0M1104.5 541.5h0M1104.5 544.5h0M1104.5 545.5h0M1104.5 546.5h0M1104.5 547.5h0M1105.5 506.5h0M1105.5 509.5h0M1105.5 510.5h0M1105.5 513.5h0M1105.5 539.5h0M1105.5 541.5h0M1105.5 548.5h0M1106.5 500.5h0M1106.5 504.5h0M1106.5 508.5h0M1106.5 509.5h0M1106.5 514.5h0M1106.5 540.5h0M1106.5 542.5h0M1106.5 544.5h0M1107.5 508.5h0M1107.5 511.5h0M1107.5 513.5h0M1107.5 514.5h0M1107.5 550.5h0M1107.5 554.5h0M1108.5 501.5h0M1108.5 505.5h0M1108.5 513.5h0M1108.5 539.5h0M1108.5 542.5h0M1108.5 552.5h0M1108.5 554.5h0M1109.5 498.5h0M1109.5 502.5h0M1109.5 539.5h0M1109.5 543.5h0M1109.5 552.5h0M1110.5 514.5h0M1110.5 541.5h0M1110.5 542.5h0M1110.5 546.5h0M1111.5 502.5h0M1111.5 503.5h0M1111.5 506.5h0M1111.5 508.5h0M1111.5 509.5h0M1111.5 539.5h0M1111.5 547.5h0M1111.5 552.5h0M1112.5 500.5h0M1112.5 502.5h0M1112.5 503.5h0M1112.5 512.5h0M1112.5 542.5h0M1112.5 555.5h0M1113.5 501.5h0M1113.5 510.5h0M1113.5 511.5h0M1113.5 541.5h0M1113.5 543.5h0M1113.5 544.5h0M1114.5 496.5h0M1114.5 513.5h0M1114.5 539.5h0M1114.5 540.5h0M1114.5 542.5h0M1114.5 543.5h0M1114.5 547.5h0M1115.5 503.5h0M1115.5 511.5h0M1115.5 512.5h0M1115.5 513.5h0M1115.5 539.5h0M1116.5 511.5h0M1116.5 543.5h0M1117.5 504.5h0M1117.5 509.5h0M1117.5 540.5h0M1117.5 548.5h0M1118.5 503.5h0M1118.5 504.5h0M1118.5 505.5h0M1118.5 508.5h0M1118.5 509.5h0M1118.5 514.5h0M1118.5 540.5h0M1118.5 542.5h0M1118.5 547.5h0M1118.5 553.5h0M1119.5 507.5h0M1119.5 509.5h0M1119.5 512.5h0M1119.5 514.5h0M1119.5 539.5h0M1119.5 541.5h0M1119.5 544.5h0M1119.5 552.5h0M1120.5 503.5h0M1120.5 507.5h0M1120.5 508.5h0M1120.5 510.5h0M1120.5 512.5h0M1120.5 514.5h0M1120.5 548.5h0M1120.5 553.5h0M1121.5 508.5h0M1121.5 512.5h0M1121.5 514.5h0M1121.5 542.5h0M1122.5 496.5h0M1122.5 506.5h0M1122.5 540.5h0M1122.5 545.5h0M1123.5 504.5h0M1123.5 511.5h0M1123.5 514.5h0M1123.5 539.5h0M1123.5 540.5h0M1123.5 541.5h0M1123.5 543.5h0M1123.5 544.5h0M1123.5 552.5h0M1123.5 554.5h0M1123.5 556.5h0M1124.5 506.5h0M1124.5 509.5h0M1124.5 510.5h0M1124.5 513.5h0M1124.5 541.5h0M1124.5 543.5h0M1124.5 547.5h0M1124.5 548.5h0M1125.5 507.5h0M1125.5 511.5h0M1125.5 545.5h0M1125.5 550.5h0M1125.5 551.5h0M1125.5 552.5h0M1126.5 500.5h0M1126.5 509.5h0M1126.5 511.5h0M1126.5 514.5h0M1127.5 502.5h0M1127.5 503.5h0M1127.5 504.5h0M1127.5 510.5h0M1127.5 542.5h0M1127.5 543.5h0M1127.5 546.5h0M1127.5 551.5h0M1128.5 503.5h0M1128.5 505.5h0M1128.5 508.5h0M1128.5 510.5h0M1128.5 514.5h0M1128.5 541.5h0M1129.5 503.5h0M1129.5 507.5h0M1129.5 508.5h0M1129.5 512.5h0M1129.5 513.5h0M1129.5 539.5h0M1129.5 540.5h0M1130.5 510.5h0M1130.5 542.5h0M1130.5 543.5h0M1130.5 545.5h0M1131.5 503.5h0M1131.5 510.5h0M1131.5 512.5h0M1131.5 541.5h0M1131.5 543.5h0M1131.5 550.5h0M1131.5 553.5h0M1131.5 554.5h0M1132.5 501.5h0M1132.5 503.5h0M1132.5 512.5h0M1132.5 540.5h0M1132.5 543.5h0M1133.5 501.5h0M1133.5 508.5h0M1133.5 510.5h0M1133.5 511.5h0M1133.5 545.5h0M1133.5 546.5h0M1133.5 559.5h0M1134.5 514.5h0M1134.5 540.5h0M1134.5 548.5h0M1134.5 552.5h0M1135.5 512.5h0M1135.5 543.5h0M1136.5 500.5h0M1136.5 503.5h0M1136.5 507.5h0M1136.5 542.5h0M1136.5 544.5h0M1136.5 545.5h0M1136.5 548.5h0M1136.5 550.5h0M1136.5 553.5h0M1137.5 510.5h0M1137.5 513.5h0M1137.5 514.5h0M1137.5 542.5h0M1137.5 544.5h0M1137.5 547.5h0M1137.5 548.5h0M1138.5 495.5h0M1138.5 508.5h0M1138.5 511.5h0M1138.5 541.5h0M1138.5 549.5h0M1138.5 552.5h0M1139.5 499.5h0M1139.5 506.5h0M1139.5 508.5h0M1139.5 543.5h0M1140.5 499.5h0M1140.5 501.5h0M1140.5 514.5h0M1140.5 540.5h0M1140.5 541.5h0M1140.5 543.5h0M1140.5 547.5h0M1140.5 548.5h0M1141.5 503.5h0M1141.5 506.5h0M1141.5 510.5h0M1141.5 513.5h0M1141.5 539.5h0M1142.5 506.5h0M1142.5 507.5h0M1142.5 540.5h0M1142.5 551.5h0M1142.5 552.5h0M1142.5 553.5h0M1143.5 509.5h0M1143.5 510.5h0M1143.5 512.5h0M1143.5 539.5h0M1143.5 541.5h0M1143.5 545.5h0M1143.5 548.5h0M1144.5 500.5h0M1144.5 509.5h0M1144.5 512.5h0M1144.5 514.5h0M1144.5 540.5h0M1144.5 543.5h0M1144.5 560.5h0M1145.5 504.5h0M1145.5 506.5h0M1145.5 507.5h0M1145.5 508.5h0M1145.5 511.5h0M1145.5 554.5h0M1146.5 501.5h0M1146.5 502.5h0M1146.5 514.5h0M1146.5 539.5h0M1146.5 541.5h0M1146.5 544.5h0M1147.5 503.5h0M1147.5 510.5h0M1147.5 555.5h0M1148.5 502.5h0M1148.5 511.5h0M1148.5 512.5h0M1148.5 513.5h0M1148.5 543.5h0M1148.5 547.5h0M1149.5 505.5h0M1149.5 507.5h0M1149.5 513.5h0M1149.5 514.5h0M1149.5 548.5h0M1149.5 553.5h0M1150.5 496.5h0M1150.5 502.5h0M1150.5 508.5h0M1150.5 509.5h0M1150.5 512.5h0M1150.5 544.5h0M1151.5 496.5h0M1151.5 509.5h0M1151.5 540.5h0M1151.5 543.5h0M1152.5 501.5h0M1152.5 504.5h0M1152.5 508.5h0M1152.5 513.5h0M1152.5 541.5h0M1152.5 542.5h0M1152.5 544.5h0M1152.5 552.5h0M1152.5 553.5h0M1152.5 556.5h0M1153.5 504.5h0M1153.5 512.5h0M1153.5 539.5h0M1153.5 546.5h0M1154.5 509.5h0M1154.5 542.5h0M1154.5 545.5h0M1155.5 498.5h0M1155.5 510.5h0M1155.5 539.5h0M1155.5 545.5h0M1156.5 503.5h0M1156.5 509.5h0M1156.5 511.5h0M1156.5 513.5h0M1156.5 539.5h0M1156.5 540.5h0M1156.5 543.5h0M1156.5 546.5h0M1156.5 548.5h0M1157.5 505.5h0M1157.5 509.5h0M1157.5 514.5h0M1157.5 540.5h0M1158.5 501.5h0M1158.5 508.5h0M1158.5 509.5h0M1158.5 512.5h0M1158.5 514.5h0M1158.5 539.5h0M1158.5 547.5h0M1158.5 556.5h0M1159.5 500.5h0M1159.5 504.5h0M1159.5 508.5h0M1159.5 512.5h0M1159.5 513.5h0M1159.5 540.5h0M1159.5 541.5h0M1159.5 542.5h0M1159.5 546.5h0M1159.5 548.5h0M1159.5 552.5h0M1160.5 509.5h0M1160.5 543.5h0M1160.5 558.5h0M1161.5 502.5h0M1161.5 504.5h0M1161.5 507.5h0M1161.5 508.5h0M1161.5 510.5h0M1161.5 539.5h0M1161.5 545.5h0M1161.5 547.5h0M1161.5 549.5h0M1162.5 506.5h0M1162.5 509.5h0M1162.5 511.5h0M1162.5 541.5h0M1162.5 549.5h0M1163.5 496.5h0M1163.5 505.5h0M1163.5 511.5h0M1163.5 512.5h0M1163.5 513.5h0M1163.5 543.5h0M1163.5 544.5h0M1163.5 545.5h0M1163.5 546.5h0M1163.5 548.5h0M1163.5 549.5h0M1163.5 551.5h0M1163.5 552.5h0M1164.5 499.5h0M1164.5 501.5h0M1164.5 507.5h0M1164.5 511.5h0M1164.5 514.5h0M1165.5 497.5h0M1165.5 502.5h0M1165.5 514.5h0M1165.5 539.5h0M1165.5 540.5h0M1165.5 543.5h0M1165.5 544.5h0M1165.5 547.5h0M1165.5 552.5h0M1166.5 502.5h0M1166.5 514.5h0M1166.5 540.5h0M1167.5 498.5h0M1167.5 500.5h0M1167.5 502.5h0M1167.5 512.5h0M1167.5 540.5h0M1167.5 541.5h0M1167.5 548.5h0M1167.5 550.5h0M1167.5 554.5h0M1168.5 498.5h0M1168.5 504.5h0M1168.5 548.5h0M1168.5 550.5h0M1168.5 554.5h0M1169.5 504.5h0M1169.5 507.5h0M1169.5 509.5h0M1169.5 512.5h0M1169.5 545.5h0M1169.5 546.5h0M1169.5 549.5h0M1169.5 551.5h0M1170.5 508.5h0M1170.5 514.5h0M1170.5 539.5h0M1170.5 545.5h0M1170.5 547.5h0M1170.5 553.5h0M1170.5 556.5h0M1171.5 513.5h0M1171.5 543.5h0M1171.5 544.5h0M1171.5 545.5h0M1172.5 505.5h0M1172.5 508.5h0M1172.5 513.5h0M1172.5 539.5h0M1172.5 540.5h0M1172.5 541.5h0M1172.5 544.5h0M1172.5 545.5h0M1172.5 547.5h0M1172.5 548.5h0M1172.5 549.5h0M1173.5 504.5h0M1173.5 509.5h0M1173.5 511.5h0M1173.5 514.5h0M1173.5 542.5h0M1174.5 499.5h0M1174.5 513.5h0M1174.5 542.5h0M1175.5 504.5h0M1175.5 507.5h0M1175.5 508.5h0M1175.5 509.5h0M1175.5 551.5h0M1176.5 539.5h0M1176.5 541.5h0M1176.5 547.5h0M1176.5 552.5h0M1177.5 499.5h0M1177.5 500.5h0M1177.5 504.5h0M1177.5 505.5h0M1177.5 507.5h0M1177.5 511.5h0M1177.5 540.5h0M1177.5 541.5h0M1177.5 542.5h0M1177.5 551.5h0M1178.5 500.5h0M1178.5 504.5h0M1178.5 506.5h0M1178.5 513.5h0M1178.5 539.5h0M1178.5 540.5h0M1178.5 545.5h0M1178.5 548.5h0M1178.5 552.5h0M1178.5 554.5h0M1179.5 498.5h0M1179.5 509.5h0M1179.5 510.5h0M1179.5 512.5h0M1179.5 539.5h0M1179.5 544.5h0M1180.5 499.5h0M1180.5 501.5h0M1180.5 505.5h0M1180.5 509.5h0M1180.5 543.5h0M1180.5 548.5h0M1181.5 500.5h0M1181.5 505.5h0M1181.5 543.5h0M1181.5 550.5h0M1182.5 508.5h0M1182.5 510.5h0M1182.5 511.5h0M1182.5 513.5h0M1182.5 542.5h0M1183.5 505.5h0M1183.5 514.5h0M1183.5 543.5h0M1183.5 551.5h0M1183.5 552.5h0M1184.5 502.5h0M1184.5 504.5h0M1184.5 507.5h0M1184.5 539.5h0M1184.5 540.5h0M1184.5 541.5h0M1184.5 543.5h0M1184.5 549.5h0M1184.5 553.5h0M1185.5 502.5h0M1185.5 508.5h0M1185.5 511.5h0M1185.5 514.5h0M1186.5 513.5h0M1186.5 540.5h0M1186.5 541.5h0M1186.5 542.5h0M1186.5 547.5h0M1186.5 548.5h0M1186.5 552.5h0M1187.5 499.5h0M1187.5 513.5h0M1187.5 541.5h0M1187.5 550.5h0M1188.5 500.5h0M1188.5 510.5h0M1188.5 539.5h0M1188.5 544.5h0M1188.5 553.5h0M1189.5 497.5h0M1189.5 539.5h0M1189.5 541.5h0M1189.5 542.5h0M1189.5 546.5h0M1189.5 547.5h0M1189.5 552.5h0M1189.5 553.5h0M1190.5 505.5h0M1190.5 513.5h0M1190.5 514.5h0M1190.5 539.5h0M1190.5 545.5h0M1190.5 549.5h0M1190.5 550.5h0M1190.5 551.5h0M1191.5 502.5h0M1191.5 503.5h0M1191.5 506.5h0M1191.5 510.5h0M1191.5 511.5h0M1191.5 513.5h0M1191.5 542.5h0M1192.5 502.5h0M1192.5 503.5h0M1192.5 504.5h0M1192.5 539.5h0M1192.5 551.5h0M1192.5 554.5h0M1193.5 505.5h0M1193.5 511.5h0M1193.5 541.5h0M1193.5 545.5h0M1194.5 501.5h0M1194.5 510.5h0M1194.5 512.5h0M1194.5 514.5h0M1194.5 540.5h0M1194.5 545.5h0M1194.5 548.5h0M1194.5 549.5h0M1195.5 501.5h0M1195.5 513.5h0M1195.5 541.5h0M1195.5 546.5h0M1196.5 496.5h0M1196.5 504.5h0M1196.5 506.5h0M1196.5 511.5h0M1196.5 514.5h0M1196.5 545.5h0M1196.5 547.5h0M1196.5 550.5h0M1196.5 552.5h0M1197.5 499.5h0M1197.5 508.5h0M1197.5 539.5h0M1197.5 541.5h0M1197.5 547.5h0M1197.5 548.5h0M1197.5 551.5h0M1198.5 502.5h0M1198.5 509.5h0M1198.5 510.5h0M1198.5 513.5h0M1198.5 548.5h0M1199.5 505.5h0M1199.5 511.5h0M1199.5 512.5h0M1199.5 543.5h0M1200.5 509.5h0M1200.5 544.5h0M1200.5 547.5h0M1200.5 552.5h0M1201.5 498.5h0M1201.5 500.5h0M1201.5 504.5h0M1201.5 506.5h0M1201.5 509.5h0M1201.5 510.5h0M1201.5 511.5h0M1201.5 546.5h0M1201.5 548.5h0M1201.5 549.5h0M1202.5 504.5h0M1202.5 505.5h0M1202.5 507.5h0M1202.5 509.5h0M1202.5 543.5h0M1202.5 551.5h0M1203.5 497.5h0M1203.5 503.5h0M1203.5 510.5h0M1203.5 511.5h0M1203.5 513.5h0M1203.5 514.5h0M1203.5 545.5h0M1204.5 504.5h0M1204.5 509.5h0M1204.5 510.5h0M1204.5 539.5h0M1204.5 540.5h0M1204.5 541.5h0M1204.5 543.5h0M1204.5 545.5h0M1204.5 547.5h0M1204.5 550.5h0M1204.5 551.5h0M1204.5 552.5h0M1205.5 494.5h0M1205.5 497.5h0M1205.5 503.5h0M1205.5 504.5h0M1205.5 506.5h0M1205.5 512.5h0M1205.5 513.5h0M1205.5 541.5h0M1205.5 542.5h0M1205.5 543.5h0M1205.5 549.5h0M1206.5 501.5h0M1206.5 540.5h0M1206.5 544.5h0M1206.5 553.5h0M1207.5 499.5h0M1207.5 500.5h0M1207.5 505.5h0M1207.5 507.5h0M1207.5 508.5h0M1207.5 510.5h0M1207.5 513.5h0M1207.5 514.5h0M1207.5 543.5h0M1207.5 544.5h0M1207.5 550.5h0M1207.5 553.5h0M1208.5 502.5h0M1208.5 505.5h0M1208.5 508.5h0M1208.5 509.5h0M1208.5 511.5h0M1208.5 513.5h0M1208.5 539.5h0M1208.5 541.5h0M1208.5 544.5h0M1208.5 548.5h0M1208.5 551.5h0M1209.5 506.5h0M1209.5 509.5h0M1209.5 542.5h0M1209.5 547.5h0M1209.5 548.5h0M1209.5 552.5h0M1209.5 556.5h0M1210.5 500.5h0M1210.5 508.5h0M1210.5 509.5h0M1210.5 545.5h0M1210.5 547.5h0M1210.5 552.5h0M1211.5 505.5h0M1211.5 508.5h0M1211.5 509.5h0M1211.5 540.5h0M1211.5 541.5h0M1211.5 545.5h0M1211.5 547.5h0M1212.5 508.5h0M1212.5 510.5h0M1212.5 512.5h0M1212.5 539.5h0M1212.5 540.5h0M1213.5 545.5h0M1213.5 549.5h0M1213.5 552.5h0M1214.5 539.5h0M1215.5 503.5h0M1215.5 504.5h0M1215.5 513.5h0M1215.5 514.5h0M1215.5 540.5h0M1215.5 541.5h0M1215.5 543.5h0M1215.5 544.5h0M1215.5 545.5h0M1215.5 549.5h0M1215.5 554.5h0M1216.5 493.5h0M1216.5 512.5h0M1216.5 513.5h0M1216.5 514.5h0M1216.5 545.5h0M1216.5 556.5h0M1217.5 501.5h0M1217.5 505.5h0M1217.5 506.5h0M1217.5 509.5h0M1217.5 511.5h0M1217.5 550.5h0M1218.5 499.5h0M1218.5 500.5h0M1218.5 506.5h0M1218.5 511.5h0M1218.5 514.5h0M1218.5 544.5h0M1219.5 498.5h0M1219.5 500.5h0M1219.5 504.5h0M1219.5 505.5h0M1219.5 508.5h0M1219.5 512.5h0M1219.5 514.5h0M1219.5 539.5h0M1219.5 541.5h0M1219.5 543.5h0M1219.5 546.5h0M1219.5 554.5h0M1220.5 497.5h0M1220.5 503.5h0M1220.5 507.5h0M1220.5 510.5h0M1220.5 540.5h0M1220.5 541.5h0M1220.5 544.5h0M1220.5 545.5h0M1221.5 503.5h0M1221.5 511.5h0M1221.5 513.5h0M1221.5 539.5h0M1221.5 547.5h0M1221.5 549.5h0M1221.5 551.5h0M1221.5 555.5h0M1222.5 501.5h0M1222.5 503.5h0M1222.5 508.5h0M1222.5 509.5h0M1222.5 511.5h0M1222.5 512.5h0M1222.5 514.5h0M1222.5 546.5h0M1222.5 548.5h0M1222.5 551.5h0M1223.5 498.5h0M1223.5 505.5h0M1223.5 511.5h0M1223.5 513.5h0M1223.5 539.5h0M1223.5 541.5h0M1223.5 542.5h0M1223.5 545.5h0M1223.5 550.5h0M1224.5 501.5h0M1224.5 505.5h0M1224.5 552.5h0M1224.5 553.5h0M1225.5 494.5h0M1225.5 505.5h0M1225.5 541.5h0M1226.5 541.5h0M1226.5 547.5h0M1226.5 553.5h0M1227.5 500.5h0M1227.5 504.5h0M1227.5 505.5h0M1227.5 509.5h0M1227.5 513.5h0M1227.5 559.5h0M1228.5 502.5h0M1228.5 505.5h0M1228.5 508.5h0M1228.5 509.5h0M1228.5 543.5h0M1228.5 544.5h0M1228.5 548.5h0M1228.5 550.5h0M1228.5 553.5h0M1228.5 556.5h0M1229.5 498.5h0M1229.5 503.5h0M1229.5 508.5h0M1229.5 511.5h0M1229.5 512.5h0M1229.5 540.5h0M1229.5 547.5h0M1230.5 500.5h0M1230.5 509.5h0M1230.5 539.5h0M1230.5 547.5h0M1230.5 549.5h0M1230.5 552.5h0M1231.5 503.5h0M1231.5 504.5h0M1231.5 506.5h0M1231.5 510.5h0M1231.5 514.5h0M1231.5 539.5h0M1231.5 540.5h0M1231.5 544.5h0M1231.5 548.5h0M1231.5 549.5h0M1231.5 554.5h0M1232.5 508.5h0M1232.5 514.5h0M1232.5 540.5h0M1232.5 548.5h0M1232.5 553.5h0M1233.5 506.5h0M1233.5 507.5h0M1233.5 509.5h0M1233.5 540.5h0M1233.5 541.5h0M1233.5 542.5h0M1233.5 543.5h0M1233.5 544.5h0M1233.5 545.5h0M1233.5 549.5h0M1233.5 550.5h0M1234.5 499.5h0M1234.5 507.5h0M1234.5 508.5h0M1234.5 511.5h0M1234.5 514.5h0M1234.5 544.5h0M1234.5 546.5h0M1234.5 547.5h0M1234.5 552.5h0M1235.5 506.5h0M1235.5 514.5h0M1235.5 539.5h0M1235.5 546.5h0M1236.5 497.5h0M1236.5 504.5h0M1236.5 505.5h0M1236.5 507.5h0M1236.5 509.5h0M1236.5 510.5h0M1236.5 511.5h0M1236.5 513.5h0M1236.5 514.5h0M1236.5 539.5h0M1236.5 542.5h0M1236.5 553.5h0M1237.5 505.5h0M1237.5 506.5h0M1237.5 509.5h0M1237.5 512.5h0M1237.5 513.5h0M1237.5 542.5h0M1237.5 547.5h0M1238.5 502.5h0M1238.5 505.5h0M1238.5 512.5h0M1238.5 513.5h0M1238.5 539.5h0M1238.5 540.5h0M1239.5 501.5h0M1239.5 505.5h0M1239.5 506.5h0M1239.5 507.5h0M1239.5 508.5h0M1239.5 511.5h0M1239.5 512.5h0M1239.5 539.5h0M1239.5 542.5h0M1239.5 543.5h0M1239.5 551.5h0M1240.5 499.5h0M1240.5 512.5h0M1240.5 541.5h0M1240.5 543.5h0M1240.5 544.5h0M1240.5 548.5h0M1240.5 552.5h0M1241.5 499.5h0M1241.5 506.5h0M1241.5 507.5h0M1241.5 510.5h0M1241.5 514.5h0M1241.5 541.5h0M1241.5 544.5h0M1241.5 546.5h0M1241.5 556.5h0M1242.5 501.5h0M1242.5 504.5h0M1242.5 511.5h0M1242.5 539.5h0M1242.5 541.5h0M1242.5 543.5h0M1242.5 545.5h0M1243.5 499.5h0M1243.5 500.5h0M1243.5 511.5h0M1243.5 512.5h0M1243.5 540.5h0M1243.5 543.5h0M1243.5 551.5h0M1243.5 556.5h0M1244.5 503.5h0M1244.5 504.5h0M1244.5 505.5h0M1244.5 512.5h0M1245.5 497.5h0M1245.5 504.5h0M1245.5 506.5h0M1245.5 513.5h0M1245.5 514.5h0M1246.5 513.5h0M1246.5 514.5h0M1246.5 539.5h0M1246.5 543.5h0M1246.5 546.5h0M1246.5 549.5h0M1246.5 551.5h0M1246.5 553.5h0M1247.5 498.5h0M1247.5 503.5h0M1247.5 551.5h0M1248.5 498.5h0M1248.5 506.5h0M1248.5 509.5h0M1248.5 512.5h0M1248.5 513.5h0M1248.5 542.5h0M1248.5 547.5h0M1248.5 553.5h0M1249.5 494.5h0M1249.5 507.5h0M1249.5 508.5h0M1249.5 509.5h0M1249.5 510.5h0M1249.5 511.5h0M1249.5 513.5h0M1249.5 514.5h0M1249.5 541.5h0M1249.5 542.5h0M1249.5 548.5h0M1250.5 512.5h0M1251.5 495.5h0M1251.5 500.5h0M1251.5 503.5h0M1251.5 507.5h0M1251.5 513.5h0M1251.5 539.5h0M1251.5 540.5h0M1251.5 541.5h0M1251.5 544.5h0M1251.5 545.5h0M1252.5 500.5h0M1252.5 510.5h0M1252.5 511.5h0M1252.5 512.5h0M1252.5 514.5h0M1252.5 539.5h0M1252.5 540.5h0M1253.5 508.5h0M1253.5 513.5h0M1253.5 542.5h0M1253.5 544.5h0M1253.5 545.5h0M1253.5 546.5h0M1253.5 547.5h0M1253.5 551.5h0M1254.5 502.5h0M1254.5 507.5h0M1254.5 508.5h0M1254.5 514.5h0M1254.5 539.5h0M1254.5 540.5h0M1254.5 543.5h0M1254.5 544.5h0M1254.5 545.5h0M1255.5 505.5h0M1255.5 544.5h0M1255.5 546.5h0M1255.5 547.5h0M1255.5 551.5h0M1256.5 504.5h0M1256.5 505.5h0M1256.5 507.5h0M1256.5 514.5h0M1256.5 542.5h0M1256.5 547.5h0M1256.5 549.5h0M1257.5 504.5h0M1257.5 510.5h0M1257.5 512.5h0M1257.5 544.5h0M1257.5 552.5h0M1258.5 498.5h0M1258.5 499.5h0M1258.5 502.5h0M1258.5 503.5h0M1258.5 510.5h0M1258.5 511.5h0M1258.5 546.5h0M1258.5 547.5h0M1258.5 548.5h0M1259.5 498.5h0M1259.5 501.5h0M1259.5 507.5h0M1259.5 510.5h0M1259.5 512.5h0M1259.5 513.5h0M1259.5 539.5h0M1259.5 540.5h0M1259.5 541.5h0M1259.5 544.5h0M1259.5 553.5h0M1260.5 502.5h0M1260.5 510.5h0M1260.5 514.5h0M1260.5 539.5h0M1260.5 546.5h0M1260.5 547.5h0M1261.5 504.5h0M1261.5 508.5h0M1261.5 513.5h0M1261.5 548.5h0M1262.5 502.5h0M1262.5 508.5h0M1262.5 512.5h0M1262.5 553.5h0M1263.5 509.5h0M1263.5 510.5h0M1263.5 513.5h0M1263.5 514.5h0M1263.5 539.5h0M1263.5 540.5h0M1263.5 545.5h0M1263.5 549.5h0M1264.5 501.5h0M1264.5 506.5h0M1264.5 507.5h0M1264.5 512.5h0M1264.5 513.5h0M1264.5 543.5h0M1264.5 548.5h0M1264.5 552.5h0M1265.5 504.5h0M1265.5 506.5h0M1265.5 541.5h0M1266.5 501.5h0M1266.5 508.5h0M1266.5 512.5h0M1266.5 514.5h0M1266.5 542.5h0M1266.5 545.5h0M1267.5 496.5h0M1267.5 509.5h0M1267.5 511.5h0M1267.5 512.5h0M1267.5 539.5h0M1267.5 541.5h0M1267.5 542.5h0M1267.5 549.5h0M1267.5 550.5h0M1268.5 502.5h0M1268.5 503.5h0M1268.5 505.5h0M1268.5 539.5h0M1268.5 540.5h0M1268.5 546.5h0M1268.5 554.5h0M1269.5 509.5h0M1269.5 511.5h0M1269.5 514.5h0M1269.5 540.5h0M1269.5 546.5h0M1269.5 551.5h0M1270.5 508.5h0M1270.5 511.5h0M1270.5 513.5h0M1270.5 514.5h0M1270.5 540.5h0M1270.5 543.5h0M1270.5 544.5h0M1270.5 547.5h0M1270.5 551.5h0M1270.5 553.5h0M1271.5 495.5h0M1271.5 510.5h0M1271.5 539.5h0M1271.5 540.5h0M1271.5 543.5h0M1271.5 547.5h0M1271.5 553.5h0M1272.5 502.5h0M1272.5 509.5h0M1272.5 541.5h0M1272.5 545.5h0M1272.5 549.5h0M1272.5 552.5h0M1272.5 555.5h0M1272.5 558.5h0M1273.5 539.5h0M1273.5 544.5h0M1274.5 501.5h0M1274.5 504.5h0M1274.5 511.5h0M1274.5 540.5h0M1274.5 543.5h0M1274.5 549.5h0M1275.5 512.5h0M1275.5 539.5h0M1275.5 541.5h0M1275.5 542.5h0M1275.5 549.5h0"/>
<path class="pk" stroke-width="4.0" d="M1286.7 420.1h0M1289.9 427.9h0M1287.1 416.5h0M1289.7 436.7h0M1285.8 380.5h0M1282.2 384.2h0M1284.6 421.3h0M1286.7 411.9h0M1289.4 400.4h0M1288 434.1h0M1280.4 390h0M1284.3 419.4h0M1285.6 396.4h0M1280.6 380.9h0M1279.1 384h0M1282.7 390.8h0M1285.4 418h0M1283.4 406.7h0M1278.8 391.5h0M1283.8 406.8h0M1285 396.6h0M1288.4 417.2h0M1287.7 393.9h0M1284.9 416.4h0M1288.5 389.6h0M1280.4 398.5h0M1284.9 414.6h0M1286.8 413.3h0M1288.8 422.4h0M1288 399.6h0M1288.1 415.2h0M1284.8 419.7h0M1288 388.3h0M1283.5 393.8h0M1279.6 389.6h0M1289 442.5h0M1288.9 437.6h0M1283.7 394.2h0M1286.4 393.6h0M1280 401h0M1285 400.9h0M1278.7 396.9h0M1280.8 397.6h0M1288.4 413.7h0M1287.9 401.6h0M1282.1 395.2h0M1278.7 386.2h0M1287.9 400.6h0M1279.4 385.4h0M1284.1 408.1h0M1289.4 388.4h0M1288.8 424.9h0M1288.9 444.1h0M1282 386.2h0M1286.1 382.7h0M1285.7 388.9h0M1279.1 398.6h0M1282.1 404.3h0M1284.7 411.6h0M1287.2 387.7h0M1287 403.4h0M1288.9 421.3h0M1281.1 381.2h0M1280 391.9h0M1288.9 389.4h0M1289.2 443.8h0M1287.8 381.1h0M1283.5 380.1h0M1286 422.7h0M1289 446.6h0M1285.5 402.8h0M1289.6 384.6h0M1278.8 382.2h0M1280.4 400.9h0M1284.3 399.2h0M1281.4 402.5h0M1282 409.8h0M1288.4 400.2h0M1288.1 408.1h0M1283.9 411.7h0M1282.7 415.4h0M1289.5 390.8h0M1286.7 383.7h0M1287 403.2h0M1285.5 408.8h0M1289.9 421.4h0M1282.2 411.4h0M1284.1 410h0M1289.8 410.6h0M1287.6 422.8h0M1280.4 403.6h0M1290 398.9h0M1281.5 401.9h0M1282.4 409.8h0M1288.8 415.5h0M1289.3 438.4h0M1288.2 418.9h0M1288.7 428.2h0M1281.3 406.3h0M1286.5 394.8h0M1280.9 388.2h0M1288.6 429.1h0M1288.7 427.2h0M1283.1 404.6h0M1282.7 410.7h0M1286.3 408h0M1285.6 398.6h0M1285.8 382.1h0M1282 391.7h0M1287.2 390h0M1286.4 386h0M1284.7 409.6h0M1288.6 387.2h0M1289.5 425.1h0M1283.8 408.2h0M1282.5 404.7h0M1288.1 387.9h0M1285.5 395.8h0M1282.8 395.5h0M1289.9 403.3h0M1286.8 413.6h0M1289.2 424.8h0M1284.7 407h0M1288.1 402.3h0M1282.9 401.3h0M1285.4 388.3h0M1289.7 428.6h0M1288.8 434.2h0M1289.7 381h0M1282.3 380.6h0M1282.5 408.1h0M1289.3 431h0M1288.9 424.7h0M1282.7 381.6h0M1285.3 402.4h0M1286.8 383.7h0M1288.7 435h0M1282.4 407.2h0M1283.1 403.1h0M1284.2 409.1h0M1288 387.6h0M1288.9 442.6h0M1283.3 392.5h0M1288 390.7h0M1285.5 407.1h0M1289.1 435.8h0M1289.8 434.1h0M1283.7 391.9h0M1288.1 435.3h0M1289.4 443.4h0M1289.3 398.3h0M1283.3 396h0M1288.9 380h0M1289.7 400.1h0M1285.7 386.9h0M1282.9 404.2h0M1280.7 386.8h0M1289.6 394.7h0M1281.2 400.1h0M1282.4 386.2h0M1288.5 414.5h0M1288.6 419.2h0M1289.6 440.6h0M1290.2 418.5h0M1279.4 397.4h0M1289.1 445.4h0M1280.9 388.2h0M1287.6 405.8h0M1287.9 422.6h0M1282 412.5h0M1288.5 434.9h0M1281 396.1h0M1286.4 418.1h0M1290 398.7h0M1290.1 392.2h0M1279.4 395.4h0M1282.5 380.3h0M1287.1 382.4h0M1281.9 387.9h0M1284.8 404.1h0M1286.8 414.6h0M1284.5 398.8h0M1279.9 397.8h0M1288.2 389.6h0M1283.3 400.6h0M1287.6 416.2h0M1282.1 410.5h0M1283 395.3h0M1280.4 388.2h0M1283.3 393.9h0M1290.2 405.4h0M1279 383.5h0M1286.3 404.7h0M1280.5 401.4h0M1289.1 423.5h0M1281.1 394.5h0M1284.7 412h0M1286.8 419h0M1287.7 403.7h0M1285.6 391.4h0M1289.3 424.7h0M1286.9 382.8h0M1289.7 415.3h0M1281 405.6h0M1284.4 419.8h0M1287.5 390h0M1287.5 400.8h0M1286.8 392.9h0M1287.3 399.5h0M1282.7 382.6h0M1288.8 386.9h0M1289.7 390.8h0M1282.7 407.2h0M1288.8 394.8h0M1285.2 391.8h0M1284.5 404.7h0M1288.5 414.4h0M1289.3 438.5h0M1284.5 399.3h0M1289.5 426.3h0M1290.2 401.3h0M1280.8 388.2h0M1287.1 382.7h0M1288 395h0M1283.6 404.7h0M1288.9 446.6h0M1287.6 386.1h0M1279.9 387.2h0M1289.2 404.7h0M1288.2 411.8h0M1289.4 419.2h0M1286.2 394.4h0M1279.5 387.4h0M1288.1 387.8h0M1289.7 399.3h0M1279.6 397h0M1285.4 384.3h0M1288 382h0M1289.2 412.9h0M1282 402.8h0M1289.6 448h0M1288.8 439.5h0M1289.2 444.2h0M1288 428.3h0M1282.3 393.8h0M1285 393.3h0M1281.5 397.2h0M1282.2 384.7h0M1286.9 384.9h0M1289.1 397.9h0M1283.3 389.7h0M1286 405.5h0M1282.1 391.7h0M1287.1 404.3h0M1289.8 427.3h0M1288.4 390.8h0M1287.5 396.8h0M1288.6 390.3h0M1289.1 444h0M1288.2 386.2h0M1289.7 419.9h0M1289.6 439.5h0M1281.7 387.6h0M1289 411.1h0M1287.6 401.7h0M1281 386.8h0M1282 385.6h0M1283.2 387.4h0M1282.9 392.8h0M1284.9 408h0M1285.3 401.4h0M1287.7 394.3h0M1286.5 407.6h0M1281.1 389.8h0M1284.6 415.9h0M1280.2 382.8h0M1288.7 424.6h0M1281.4 388h0M1280.1 401.8h0M1284.5 418.2h0M1283.4 402h0M1282.3 395.7h0M1279.1 391.3h0M1285 417.7h0M1282.8 415.9h0M1280.4 390.2h0M1283.6 395.2h0M1284.1 398.8h0M1283.1 413h0M1295.1 397.1h0M1293.6 390.4h0M1302 403.8h0M1294.4 380.1h0M1301.6 395.5h0M1294.3 397.8h0M1298.8 381.7h0M1301.5 404.3h0M1301.5 380.9h0M1298.8 383.9h0M1293.5 386.2h0M1293.2 384.3h0M1294.9 389.6h0M1302.8 392.6h0M1302.1 394.9h0M1293.2 394.3h0M1293.6 389h0M1301.2 401.8h0M1298.9 383h0M1302.2 384.7h0M1293.9 385.6h0M1302.1 405h0M1302.7 402.7h0M1293.3 383.3h0M1300.1 384.7h0M1302 383.4h0M1302.7 398.6h0M1303.9 384.4h0M1296.3 381.1h0M1295.1 399.4h0M1301.6 389.7h0M1297.8 380.7h0M1302 399.4h0M1301.7 392.3h0M1295.1 394.1h0M1293.3 384.1h0M1292 380.8h0M1294.5 384h0M1293.4 382.3h0M1302.5 405.4h0M1299.6 382.2h0M1295.3 380.2h0M1293.4 390.5h0M1302.2 389.3h0M1294.7 384h0M1293.4 383.1h0M1294.8 385.7h0M1296 382.7h0M1302.4 387.1h0M1295.1 392.4h0M1298.4 380h0M1294.7 386.8h0M1296.8 384.8h0M1294.4 393.8h0M1295.1 380.3h0M1302.8 398.4h0M1294.8 391.8h0M1293.7 383.6h0M1301.5 402.8h0M1292.6 382.6h0M1294.3 394.2h0M1293.2 400.1h0M1302.4 390.9h0M1293.7 384h0M1297.7 381.6h0M1302 382.3h0M1294.4 398.4h0M1294.8 394.4h0M1293.6 400.4h0M1293.9 401.1h0M1294.7 385.8h0M1293.2 388.2h0M1301.5 384.6h0M1302.2 384h0M1293.5 387.7h0M1295.1 400.1h0M1301.9 399.7h0M1301.6 380.9h0M1301.1 383.7h0M1293.3 383.8h0M1303.5 384.4h0M1297.5 382.6h0M1295.1 384.7h0M1298.4 383.1h0M1300.9 380.6h0M1303.3 384.1h0M1295.4 382h0M1298.6 383.5h0M1291.8 381h0M1302.9 400.6h0M1302.3 405.2h0M1295 395.2h0M1294.7 390.7h0M1301.7 400.6h0M1296.9 382.5h0M1301.6 382.3h0M1302.5 385.5h0M1300.7 382.3h0M1302 384.9h0M1301.5 389.5h0M1297.1 380.8h0M1293.5 384.6h0M1294.9 397.4h0M1300.3 382.2h0M1302.4 399.6h0M1294.9 384.2h0M1301.5 388.3h0M1302.2 393.6h0M1301.8 399.7h0M1294.1 401.3h0M1294.8 380.7h0M1294.3 387.7h0M1293.7 383.6h0M1294.4 386.5h0M1302.1 400.9h0M1301.3 389.2h0M1302.2 388.6h0M1302.7 389.8h0M1292.6 380.1h0M1301.6 385.6h0M1301.5 415.5h0M1279.5 459h0"/>
<rect x="105.5" y="498.8" width="1255.5" height="48.9" fill="#f00" fill-opacity=".1"/>
<rect x="162.2" y="513.8" width="1113.8" height="26.2" fill="#ffa500" fill-opacity=".1"/>
<rect x="1276" y="370" width="14" height="52.6" fill="#ffa500" fill-opacity=".1"/>
<rect x="1290" y="370" width="13" height="12.6" fill="#ffa500" fill-opacity=".1"/>
<path d="M160.9 526.5H1277.5" stroke="#ffa500" stroke-width="2.9" fill="none"/>
<path d="M1275.4 398.1H1291" stroke="#ffa500" stroke-width="2.9" fill="none"/>
<path d="M105.5 523H1361" stroke="#f00" stroke-width="2.08" fill="none"/>
</g>
<g clip-path="url(#c3)">
<path class="pk" stroke-width="2.4" d="M165.5 1007.6V1008.1M166.5 1007.4V1008.1M167.5 1007.2V1008.1M168.5 1007.3V1008.1M169.5 1007.4V1008.1M170.5 1007.6V1008.1M171.5 1007.4V1009.5M172.5 1007.5V1009.5M173.5 1007.5V1009.5M174.5 1007.4V1009.5M175.5 1007.2V1008.1M176.5 1007.2V1008.1M177.5 1007.5V1008.1M178.5 1007.3V1008.1M179.5 1007.5V1008.1M180.5 1006.9V1008.1M181.5 1007V1009.5M182.5 1007.5V1009.5M183.5 1007.5V1009.5M184.5 1007.4V1009.5M185.5 1007V1009.5M186.5 1007.2V1008.1M187.5 1007.5V1008.1M188.5 1007.4V1008.1M189.5 1007.1V1008.1M190.5 1007V1008.1M191.5 1007.4V1009.5M192.5 1007.1V1009.5M193.5 1006.9V1009.5M194.5 1007.1V1009.5M195.5 1007.2V1009.5M196.5 1007V1008.1M197.5 1007V1008.1M198.5 1006.9V1008.1M199.5 1007.1V1008.1M200.5 1007.1V1008.1M201.5 1007V1008.1M202.5 1007.2V1009.5M203.5 1007.6V1009.5M204.5 1007V1009.5M205.5 1007.4V1008.1M206.5 1007V1008.1M207.5 1007V1008.1M208.5 1007.4V1008.1M209.5 1007.6V1009.5M210.5 1007.5V1009.5M211.5 1007.2V1008.1M212.5 1007.2V1008.1M213.5 1007.4V1008.1M214.5 1007.2V1008.1M215.5 1007.3V1008.1M216.5 1007V1008.1M217.5 1007.5V1009.5M218.5 1007.5V1009.5M219.5 1007.1V1009.5M220.5 1007.5V1009.5M221.5 1007.2V1008.1M222.5 1006.9V1008.1M223.5 1007.6V1008.1M224.5 1007.3V1009.5M225.5 1007.1V1009.5M226.5 1007.1V1009.5M227.5 1007V1009.5M228.5 1007.2V1008.1M229.5 1007.3V1008.1M230.5 1007.5V1008.1M231.5 1007.6V1008.1M232.5 1007.3V1009.5M233.5 1007.5V1009.5M234.5 1007.3V1008.1M235.5 1007.2V1008.1M236.5 1007.1V1008.1M237.5 1007.6V1009.5M238.5 1007.5V1009.5M239.5 1007.2V1009.5M240.5 1007.6V1009.5M241.5 1007.5V1009.5M242.5 1007.6V1008.1M243.5 1007.6V1008.1M244.5 1007.4V1008.1M245.5 1007.6V1008.1M246.5 1007.6V1009.5M247.5 1007.6V1009.5M248.5 1007.4V1009.5M249.5 1007.6V1009.5M250.5 1007V1009.5M251.5 1007.5V1009.5M252.5 1007.4V1008.1M253.5 1007.3V1008.1M254.5 1007.3V1008.1M255.5 1007V1008.1M256.5 1007.1V1008.1M257.5 1007.6V1008.1M258.5 1007.3V1009.5M259.5 1007.6V1009.5M260.5 1007.1V1009.5M261.5 1007.3V1008.1M262.5 1007.1V1008.1M263.5 1007.6V1008.1M264.5 1007.5V1008.1M265.5 1007.4V1008.1M266.5 1007.6V1008.1M267.5 1006.9V1009.5M268.5 1007.4V1009.5M269.5 1007.2V1009.5M270.5 1007.3V1009.5M271.5 1007.6V1009.5M272.5 1007V1008.1M273.5 1007.5V1008.1M274.5 1007.1V1008.1M275.5 1007.2V1008.1M276.5 1007.5V1009.5M277.5 1006.9V1009.5M278.5 1007.5V1009.5M279.5 1007.6V1009.5M280.5 1007.2V1009.5M281.5 1007.1V1008.1M282.5 1007.5V1008.1M283.5 1007.6V1009.5M284.5 1007.2V1009.5M285.5 1007.1V1009.5M286.5 1007.3V1009.5M287.5 1007.5V1008.1M288.5 1007.5V1008.1M289.5 1007.6V1008.1M290.5 1007V1008.1M291.5 1007V1008.1M292.5 1006.9V1009.5M293.5 1007.6V1009.5M294.5 1007.5V1009.5M295.5 1007.6V1008.1M296.5 1007.4V1008.1M297.5 1007.6V1008.1M298.5 1007.4V1008.1M299.5 1007.5V1009.5M300.5 1007.3V1009.5M301.5 1007.4V1009.5M302.5 1007.4V1008.1M303.5 1007.2V1008.1M304.5 1007V1008.1M305.5 1007.6V1008.1M306.5 1007.4V1008.1M307.5 1007.6V1009.5M308.5 1007.5V1009.5M309.5 1006.9V1008.1M310.5 1007.2V1008.1M311.5 1007.4V1009.5M312.5 1007.2V1009.5M313.5 1007.2V1009.5M314.5 1007.4V1009.5M315.5 1007.1V1009.5M316.5 1007V1009.5M317.5 1007.4V1008.1M318.5 1007.1V1008.1M319.5 1007.3V1008.1M320.5 1007.6V1008.1M321.5 1006.9V1008.1M322.5 1007.5V1008.1M323.5 1007.2V1009.5M324.5 1007V1009.5M325.5 1007.3V1008.1M326.5 1006.9V1008.1M327.5 1006.9V1008.1M328.5 1007.6V1009.5M329.5 1007.2V1009.5M330.5 1007.2V1009.5M331.5 1007.4V1008.1M332.5 1007V1008.1M333.5 1007V1009.5M334.5 1007.6V1009.5M335.5 1007.4V1009.5M336.5 1007.3V1009.5M337.5 1007.1V1009.5M338.5 1007V1009.5M339.5 1007.1V1008.1M340.5 1007.4V1008.1M341.5 1007.3V1009.5M342.5 1007.6V1009.5M343.5 1007.6V1009.5M344.5 1007V1009.5M345.5 1007.3V1009.5M346.5 1007.4V1009.5M347.5 1007.5V1008.1M348.5 1006.9V1008.1M349.5 1007.4V1008.1M350.5 1007.3V1008.1M351.5 1007.6V1009.5M352.5 1007V1009.5M353.5 1006.9V1008.1M354.5 1007V1008.1M355.5 1007V1009.5M356.5 1007.4V1009.5M357.5 1007.5V1008.1M358.5 1006.9V1008.1M359.5 1007.3V1009.5M360.5 1007.5V1009.5M361.5 1007.3V1009.5M362.5 1007V1009.5M363.5 1007.3V1009.5M364.5 1007.1V1009.5M365.5 1006.9V1008.1M366.5 1007.3V1008.1M367.5 1007.6V1008.1M368.5 1007.4V1008.1M369.5 1007.4V1008.1M370.5 1007.5V1009.5M371.5 1007.2V1009.5M372.5 1007.5V1008.1M373.5 1007V1008.1M374.5 1007.2V1008.1M375.5 1007.2V1008.1M376.5 1007.1V1008.1M377.5 1006.9V1009.5M378.5 1007.6V1009.5M379.5 1007.2V1009.5M380.5 1007.2V1009.5M381.5 1007.4V1009.5M382.5 1007.2V1008.1M383.5 1007V1008.1M384.5 1007.1V1009.5M385.5 1007.6V1009.5M386.5 1007.5V1008.1M387.5 1006.9V1008.1M388.5 1007.4V1008.1M389.5 1007.5V1008.1M390.5 1007.3V1009.5M391.5 1007.2V1009.5M392.5 1007.2V1009.5M393.5 1007.2V1009.5M394.5 1007.5V1008.1M395.5 1007V1008.1M396.5 1007.2V1008.1M397.5 1007.5V1009.5M398.5 1007.4V1009.5M399.5 1007.5V1009.5M400.5 1007.6V1009.5M401.5 1006.9V1009.5M402.5 1007.4V1008.1M403.5 1007.2V1008.1M404.5 1007.3V1008.1M405.5 1007.3V1008.1M406.5 1007.3V1009.5M407.5 1007.4V1009.5M408.5 1007.3V1008.1M409.5 1007.5V1008.1M410.5 1007.2V1008.1M411.5 1007.6V1008.1M412.5 1007.2V1008.1M413.5 1007.3V1009.5M414.5 1006.9V1009.5M415.5 1007.4V1009.5M416.5 1006.9V1008.1M417.5 1007.5V1008.1M418.5 1007.2V1008.1M419.5 1007.5V1008.1M420.5 1007.3V1008.1M421.5 1007.3V1008.1M422.5 1007.6V1009.5M423.5 1007.4V1009.5M424.5 1007V1009.5M425.5 1007.2V1009.5M426.5 1007.3V1009.5M427.5 1007.6V1009.5M428.5 1007.4V1008.1M429.5 1007.4V1008.1M430.5 1007.1V1008.1M431.5 1007.1V1008.1M432.5 1007V1009.5M433.5 1007V1009.5M434.5 1007.1V1009.5M435.5 1007.2V1009.5M436.5 1007.5V1008.1M437.5 1007.2V1008.1M438.5 1006.9V1009.5M439.5 1007.1V1009.5M440.5 1007.1V1009.5M441.5 1007.5V1008.1M442.5 1007.2V1008.1M443.5 1007.1V1008.1M444.5 1007V1008.1M445.5 1007.2V1008.1M446.5 1007.3V1009.5M447.5 1007.1V1009.5M448.5 1007.5V1009.5M449.5 1006.9V1009.5M450.5 1007.5V1008.1M451.5 1006.9V1008.1M452.5 1007.4V1008.1M453.5 1007.2V1008.1M454.5 1007.5V1008.1M455.5 1007V1008.1M456.5 1007.6V1009.5M457.5 1007V1009.5M458.5 1007V1009.5M459.5 1007.5V1009.5M460.5 1007.5V1009.5M461.5 1007.4V1009.5M462.5 1007.6V1008.1M463.5 1006.9V1008.1M464.5 1007.6V1009.5M465.5 1007V1009.5M466.5 1007.3V1009.5M467.5 1007.4V1008.1M468.5 1007.1V1008.1M469.5 1007.4V1008.1M470.5 1007V1008.1M471.5 1007V1008.1M472.5 1007.1V1008.1M473.5 1007.5V1009.5M474.5 1007V1009.5M475.5 1006.9V1009.5M476.5 1007V1009.5M477.5 1007.2V1009.5M478.5 1007.3V1008.1M479.5 1007V1008.1M480.5 1007V1008.1M481.5 1007.5V1009.5M482.5 1007.1V1009.5M483.5 1007.1V1009.5M484.5 1007V1009.5M485.5 1007.6V1009.5M486.5 1007.6V1009.5M487.5 1007V1008.1M488.5 1007.5V1008.1M489.5 1007.3V1008.1M490.5 1007V1008.1M491.5 1007.6V1008.1M492.5 1007.4V1009.5M493.5 1007.5V1009.5M494.5 1007.3V1008.1M495.5 1007.3V1008.1M496.5 1007V1008.1M497.5 1007.2V1008.1M498.5 1007.2V1008.1M499.5 1007.3V1008.1M500.5 1007V1009.5M501.5 1006.9V1009.5M502.5 1007.5V1008.1M503.5 1006.9V1008.1M504.5 1007.4V1008.1M505.5 1007.1V1009.5M506.5 1007.5V1009.5M507.5 1007.4V1009.5M508.5 1006.9V1009.5M509.5 1007.4V1009.5M510.5 1006.9V1009.5M511.5 1007.2V1008.1M512.5 1007V1008.1M513.5 1007.3V1008.1M514.5 1007.3V1009.5M515.5 1007.4V1009.5M516.5 1007.6V1008.1M517.5 1007.1V1008.1M518.5 1007.2V1008.1M519.5 1007.4V1008.1M520.5 1007V1008.1M521.5 1007.1V1009.5M522.5 1007.1V1009.5M523.5 1007.3V1009.5M524.5 1007.4V1009.5M525.5 1007.3V1009.5M526.5 1007.1V1009.5M527.5 1007.3V1008.1M528.5 1007.5V1008.1M529.5 1007.1V1008.1M530.5 1007.6V1008.1M531.5 1007.6V1009.5M532.5 1007V1009.5M533.5 1006.9V1009.5M534.5 1006.9V1008.1M535.5 1007.1V1008.1M536.5 1007.4V1009.5M537.5 1007.1V1009.5M538.5 1006.9V1009.5M539.5 1007V1009.5M540.5 1007.4V1008.1M541.5 1006.9V1008.1M542.5 1007V1008.1M543.5 1007V1008.1M544.5 1007.1V1008.1M545.5 1007.6V1008.1M546.5 1006.9V1009.5M547.5 1006.9V1009.5M548.5 1007V1009.5M549.5 1007.4V1009.5M550.5 1007V1009.5M551.5 1007.3V1009.5M552.5 1007.5V1008.1M553.5 1007.3V1008.1M554.5 1007V1008.1M555.5 1006.9V1009.5M556.5 1007.2V1009.5M557.5 1006.9V1009.5M558.5 1006.9V1009.5M559.5 1007V1008.1M560.5 1007.6V1008.1M561.5 1007.3V1008.1M562.5 1007.5V1009.5M563.5 1007V1009.5M564.5 1007.1V1009.5M565.5 1007.5V1009.5M566.5 1007.4V1008.1M567.5 1007.5V1008.1M568.5 1007.4V1008.1M569.5 1007.2V1009.5M570.5 1007.1V1009.5M571.5 1006.9V1008.1M572.5 1007V1008.1M573.5 1006.9V1009.5M574.5 1007.2V1009.5M575.5 1007.5V1009.5M576.5 1006.9V1008.1M577.5 1007.6V1008.1M578.5 1007.6V1008.1M579.5 1007.2V1009.5M580.5 1007.1V1009.5M581.5 1006.9V1009.5M582.5 1007.6V1009.5M583.5 1007.4V1008.1M584.5 1006.9V1008.1M585.5 1006.9V1008.1M586.5 1007.6V1008.1M587.5 1007.5V1008.1M588.5 1007V1009.5M589.5 1006.9V1009.5M590.5 1007.6V1009.5M591.5 1007.2V1009.5M592.5 1007.2V1008.1M593.5 1006.9V1008.1M594.5 1007.4V1008.1M595.5 1007.4V1009.5M596.5 1007V1009.5M597.5 1007.6V1009.5M598.5 1007.1V1009.5M599.5 1007V1009.5M600.5 1007.6V1009.5M601.5 1006.9V1008.1M602.5 1006.9V1008.1M603.5 1007.4V1008.1M604.5 1007.4V1008.1M605.5 1007.5V1009.5M606.5 1006.9V1009.5M607.5 1007.3V1009.5M608.5 1007.2V1009.5M609.5 1007.5V1009.5M610.5 1007.6V1008.1M611.5 1007.2V1008.1M612.5 1006.9V1009.5M613.5 1007.2V1009.5M614.5 1006.9V1008.1M615.5 1007.5V1008.1M616.5 1007.2V1008.1M617.5 1007.6V1008.1M618.5 1007V1008.1M619.5 1007.2V1009.5M620.5 1007.1V1009.5M621.5 1007.2V1009.5M622.5 1007.5V1009.5M623.5 1007.6V1008.1M624.5 1006.9V1008.1M625.5 1007.2V1008.1M626.5 1007.3V1009.5M627.5 1007.6V1009.5M628.5 1007.2V1008.1M629.5 1007.6V1008.1M630.5 1007.4V1008.1M631.5 1007.5V1009.5M632.5 1007.2V1009.5M633.5 1007.6V1008.1M634.5 1007.6V1008.1M635.5 1007.3V1008.1M636.5 1007.6V1008.1M637.5 1007.5V1009.5M638.5 1007.5V1009.5M639.5 1007V1008.1M640.5 1006.9V1008.1M641.5 1007.6V1008.1M642.5 1007.3V1008.1M643.5 1006.9V1009.5M644.5 1007.4V1009.5M645.5 1006.9V1009.5M646.5 1007.3V1008.1M647.5 1007.3V1008.1M648.5 1007.6V1009.5M649.5 1007.3V1009.5M650.5 1007V1008.1M651.5 1007.5V1008.1M652.5 1007.4V1008.1M653.5 1007.5V1008.1M654.5 1006.9V1008.1M655.5 1007V1009.5M656.5 1007.3V1009.5M657.5 1007.5V1009.5M658.5 1007.5V1008.1M659.5 1007.3V1008.1M660.5 1007.6V1008.1M661.5 1007.3V1008.1M662.5 1007.6V1008.1M663.5 1007.6V1008.1M664.5 1007.6V1009.5M665.5 1007.4V1009.5M666.5 1007.3V1009.5M667.5 1007.2V1009.5M668.5 1006.9V1009.5M669.5 1007.6V1008.1M670.5 1007.6V1008.1M671.5 1007.2V1008.1M672.5 1007.2V1008.1M673.5 1007.6V1008.1M674.5 1007.1V1009.5M675.5 1007.4V1009.5M676.5 1007.1V1008.1M677.5 1007.6V1008.1M678.5 1007.1V1009.5M679.5 1007.6V1009.5M680.5 1007V1009.5M681.5 1007.4V1008.1M682.5 1007.5V1008.1M683.5 1007.5V1009.5M684.5 1007.3V1009.5M685.5 1007.6V1009.5M686.5 1007.5V1009.5M687.5 1007.4V1009.5M688.5 1007.2V1009.5M689.5 1007.1V1008.1M690.5 1007V1008.1M691.5 1007.4V1008.1M692.5 1007.6V1008.1M693.5 1007.4V1008.1M694.5 1007.4V1009.5M695.5 1007.6V1009.5M696.5 1007.5V1009.5M697.5 1007.6V1009.5M698.5 1007.4V1009.5M699.5 1007V1009.5M700.5 1007.2V1008.1M701.5 1007.4V1008.1M702.5 1007.6V1008.1M703.5 1006.9V1009.5M704.5 1007.1V1009.5M705.5 1007V1009.5M706.5 1006.9V1008.1M707.5 1006.9V1008.1M708.5 1007.2V1008.1M709.5 1007.6V1008.1M710.5 1007.4V1009.5M711.5 1007.3V1009.5M712.5 1006.9V1009.5M713.5 1007.4V1009.5M714.5 1007.3V1008.1M715.5 1007.5V1008.1M716.5 1007V1008.1M717.5 1007.5V1008.1M718.5 1007V1008.1M719.5 1006.9V1009.5M720.5 1006.9V1009.5M721.5 1007.6V1009.5M722.5 1007.4V1009.5M723.5 1007.5V1008.1M724.5 1007.4V1008.1M725.5 1007.1V1008.1M726.5 1007.4V1008.1M727.5 1007V1008.1M728.5 1007.4V1008.1M729.5 1007.4V1009.5M730.5 1007.2V1009.5M731.5 1007.6V1009.5M732.5 1007.2V1008.1M733.5 1007.1V1008.1M734.5 1007.6V1008.1M735.5 1007.1V1009.5M736.5 1007.5V1009.5M737.5 1006.9V1009.5M738.5 1007.1V1009.5M739.5 1007.3V1009.5M740.5 1007.3V1008.1M741.5 1007.5V1008.1M742.5 1006.9V1009.5M743.5 1006.9V1009.5M744.5 1007V1008.1M745.5 1007.6V1008.1M746.5 1007V1009.5M747.5 1007.1V1009.5M748.5 1006.9V1009.5M749.5 1007.5V1009.5M750.5 1007.3V1008.1M751.5 1007.6V1008.1M752.5 1007V1009.5M753.5 1007.2V1009.5M754.5 1007V1009.5M755.5 1007.3V1008.1M756.5 1007.2V1008.1M757.5 1006.9V1008.1M758.5 1007.6V1009.5M759.5 1007V1009.5M760.5 1007.3V1009.5M761.5 1007.1V1009.5M762.5 1007.2V1009.5M763.5 1007.6V1008.1M764.5 1006.9V1008.1M765.5 1007.3V1008.1M766.5 1007.2V1009.5M767.5 1007.6V1009.5M768.5 1006.9V1009.5M769.5 1007.6V1009.5M770.5 1007.5V1009.5M771.5 1007.1V1009.5M772.5 1006.9V1008.1M773.5 1006.9V1008.1M774.5 1007.5V1009.5M775.5 1007.2V1009.5M776.5 1007.5V1009.5M777.5 1007.6V1009.5M778.5 1007.4V1009.5M779.5 1007V1008.1M780.5 1007.1V1008.1M781.5 1007.1V1008.1M782.5 1007V1008.1M783.5 1007.5V1008.1M784.5 1007.4V1008.1M785.5 1007.1V1009.5M786.5 1007.3V1009.5M787.5 1007.4V1009.5M788.5 1007V1009.5M789.5 1007.3V1008.1M790.5 1007V1008.1M791.5 1007.4V1008.1M792.5 1007V1009.5M793.5 1007.2V1009.5M794.5 1007.3V1009.5M795.5 1007V1009.5M796.5 1007.3V1008.1M797.5 1007.2V1008.1M798.5 1006.9V1008.1M799.5 1007.5V1008.1M800.5 1007.4V1008.1M801.5 1007.1V1008.1M802.5 1006.9V1009.5M803.5 1007.3V1009.5M804.5 1006.9V1008.1M805.5 1007.5V1008.1M806.5 1007.4V1009.5M807.5 1007.1V1009.5M808.5 1007.6V1009.5M809.5 1007.4V1009.5M810.5 1007.5V1008.1M811.5 1007.2V1008.1M812.5 1006.9V1009.5M813.5 1007.3V1009.5M814.5 1007.2V1009.5M815.5 1006.9V1009.5M816.5 1007.3V1008.1M817.5 1007.5V1008.1M818.5 1007.5V1009.5M819.5 1007V1009.5M820.5 1007V1009.5M821.5 1007.4V1009.5M822.5 1007V1009.5M823.5 1007.4V1008.1M824.5 1007.3V1008.1M825.5 1007V1009.5M826.5 1007.5V1009.5M827.5 1007.1V1009.5M828.5 1007.2V1009.5M829.5 1007.6V1008.1M830.5 1006.9V1008.1M831.5 1007.5V1008.1M832.5 1007.4V1008.1M833.5 1006.9V1009.5M834.5 1007V1009.5M835.5 1007.1V1009.5M836.5 1007.3V1009.5M837.5 1007V1009.5M838.5 1007.4V1008.1M839.5 1007.2V1008.1M840.5 1007.5V1008.1M841.5 1007.2V1009.5M842.5 1007.4V1009.5M843.5 1006.9V1009.5M844.5 1007.4V1009.5M845.5 1007.1V1008.1M846.5 1007.1V1008.1M847.5 1007.4V1008.1M848.5 1007.6V1008.1M849.5 1007.6V1008.1M850.5 1007.2V1008.1M851.5 1007.3V1009.5M852.5 1007V1009.5M853.5 1007V1009.5M854.5 1007.6V1008.1M855.5 1007V1008.1M856.5 1007.5V1008.1M857.5 1007.1V1008.1M858.5 1007.2V1009.5M859.5 1007.6V1009.5M860.5 1006.9V1009.5M861.5 1007.1V1009.5M862.5 1007.6V1008.1M863.5 1007.3V1008.1M864.5 1007.3V1008.1M865.5 1007.2V1009.5M866.5 1007.6V1009.5M867.5 1007V1008.1M868.5 1007.2V1008.1M869.5 1007.2V1008.1M870.5 1007.4V1008.1M871.5 1007.3V1008.1M872.5 1007.3V1008.1M873.5 1007.4V1009.5M874.5 1006.9V1009.5M875.5 1007.3V1009.5M876.5 1007.4V1009.5M877.5 1007V1009.5M878.5 1007.2V1009.5M879.5 1007V1008.1M880.5 1007V1008.1M881.5 1007.2V1008.1M882.5 1007.3V1008.1M883.5 1007.5V1008.1M884.5 1007.4V1009.5M885.5 1007.4V1009.5M886.5 1007.5V1008.1M887.5 1006.9V1008.1M888.5 1006.9V1008.1M889.5 1007.4V1008.1M890.5 1007.6V1009.5M891.5 1007V1009.5M892.5 1007.4V1008.1M893.5 1007.3V1008.1M894.5 1007.2V1009.5M895.5 1007.4V1009.5M896.5 1006.9V1009.5M897.5 1007.3V1009.5M898.5 1006.9V1009.5M899.5 1007.1V1009.5M900.5 1007.2V1008.1M901.5 1006.9V1008.1M902.5 1007.4V1008.1M903.5 1007.1V1009.5M904.5 1007V1009.5M905.5 1006.9V1009.5M906.5 1007V1008.1M907.5 1007.6V1008.1M908.5 1007.5V1009.5M909.5 1006.9V1009.5M910.5 1007.2V1008.1M911.5 1006.9V1008.1M912.5 1007.1V1008.1M913.5 1007.6V1008.1M914.5 1007.3V1008.1M915.5 1007.3V1008.1M916.5 1007.6V1009.5M917.5 1007V1009.5M918.5 1007.3V1008.1M919.5 1007.6V1008.1M920.5 1006.9V1009.5M921.5 1007.5V1009.5M922.5 1007.1V1009.5M923.5 1007.6V1009.5M924.5 1007.1V1008.1M925.5 1007V1008.1M926.5 1007.2V1009.5M927.5 1007.1V1009.5M928.5 1006.9V1008.1M929.5 1007.5V1008.1M930.5 1007V1008.1M931.5 1007.2V1009.5M932.5 1007.4V1009.5M933.5 1007.4V1009.5M934.5 1007.4V1008.1M935.5 1007.1V1008.1M936.5 1006.9V1008.1M937.5 1007.3V1009.5M938.5 1007.3V1009.5M939.5 1007V1009.5M940.5 1007.6V1009.5M941.5 1007.6V1009.5M942.5 1007.4V1008.1M943.5 1007V1008.1M944.5 1007.5V1008.1M945.5 1007.3V1009.5M946.5 1007.5V1009.5M947.5 1006.9V1008.1M948.5 1007.1V1008.1M949.5 1007.5V1009.5M950.5 1007.4V1009.5M951.5 1006.9V1009.5M952.5 1007.2V1009.5M953.5 1007.5V1008.1M954.5 1007.3V1008.1M955.5 1006.9V1008.1M956.5 1007.2V1009.5M957.5 1007.6V1009.5M958.5 1007.1V1009.5M959.5 1007.5V1009.5M960.5 1007.3V1009.5M961.5 1007.3V1008.1M962.5 1007V1008.1M963.5 1007.6V1008.1M964.5 1007.5V1009.5M965.5 1007.2V1009.5M966.5 1007.5V1009.5M967.5 1007V1009.5M968.5 1006.9V1008.1M969.5 1007.2V1008.1M970.5 1007.4V1008.1M971.5 1007V1008.1M972.5 1007V1009.5M973.5 1007.2V1009.5M974.5 1007.2V1009.5M975.5 1007.4V1009.5M976.5 1007.1V1008.1M977.5 1007.6V1008.1M978.5 1007.5V1008.1M979.5 1006.9V1008.1M980.5 1006.9V1008.1M981.5 1007.6V1009.5M982.5 1007.1V1009.5M983.5 1007.4V1009.5M984.5 1007.3V1009.5M985.5 1007.5V1009.5M986.5 1007.5V1009.5M987.5 1007.6V1008.1M988.5 1006.9V1008.1M989.5 1007.4V1008.1M990.5 1007.5V1009.5M991.5 1007.2V1009.5M992.5 1007.1V1009.5M993.5 1007.2V1009.5M994.5 1007.5V1009.5M995.5 1007.3V1009.5M996.5 1007.1V1008.1M997.5 1006.9V1008.1M998.5 1007.6V1009.5M999.5 1007.2V1009.5M1000.5 1007V1008.1M1001.5 1007.1V1008.1M1002.5 1007.2V1008.1M1003.5 1007.1V1008.1M1004.5 1007.2V1008.1M1005.5 1007V1008.1M1006.5 1007.1V1009.5M1007.5 1007.4V1009.5M1008.5 1007.6V1009.5M1009.5 1007.5V1009.5M1010.5 1007.5V1009.5M1011.5 1006.9V1009.5M1012.5 1007.5V1008.1M1013.5 1006.9V1008.1M1014.5 1007.1V1008.1M1015.5 1007.5V1008.1M1016.5 1006.9V1009.5M1017.5 1007.3V1009.5M1018.5 1007.1V1009.5M1019.5 1007V1009.5M1020.5 1007.5V1008.1M1021.5 1006.9V1008.1M1022.5 1007.6V1008.1M1023.5 1006.9V1009.5M1024.5 1007.3V1009.5M1025.5 1007.1V1009.5M1026.5 1007.3V1009.5M1027.5 1007.6V1009.5M1028.5 1007.6V1009.5M1029.5 1006.9V1008.1M1030.5 1007.6V1008.1M1031.5 1007.1V1008.1M1032.5 1007.2V1008.1M1033.5 1007.5V1009.5M1034.5 1007.4V1009.5M1035.5 1007.6V1009.5M1036.5 1007.4V1008.1M1037.5 1007.4V1008.1M1038.5 1007.2V1008.1M1039.5 1007V1008.1M1040.5 1007.5V1008.1M1041.5 1007.2V1009.5M1042.5 1007.1V1009.5M1043.5 1006.9V1009.5M1044.5 1007.6V1009.5M1045.5 1007V1009.5M1046.5 1007.1V1008.1M1047.5 1007.4V1008.1M1048.5 1006.9V1008.1M1049.5 1007.6V1008.1M1050.5 1007.1V1008.1M1051.5 1007.4V1009.5M1052.5 1007V1009.5M1053.5 1007.1V1008.1M1054.5 1007.3V1008.1M1055.5 1007.4V1008.1M1056.5 1007V1008.1M1057.5 1007.2V1008.1M1058.5 1007.5V1009.5M1059.5 1007.4V1009.5M1060.5 1007V1008.1M1061.5 1007.5V1008.1M1062.5 1007.6V1008.1M1063.5 1007.1V1008.1M1064.5 1007.5V1008.1M1065.5 1007V1008.1M1066.5 1007V1009.5M1067.5 1007V1009.5M1068.5 1007.4V1009.5M1069.5 1007.2V1008.1M1070.5 1007.4V1008.1M1071.5 1007.1V1008.1M1072.5 1007.3V1008.1M1073.5 1006.9V1009.5M1074.5 1007.2V1009.5M1075.5 1007.3V1009.5M1076.5 1007V1009.5M1077.5 1007V1009.5M1078.5 1007.6V1009.5M1079.5 1007.2V1008.1M1080.5 1007.1V1008.1M1081.5 1007V1008.1M1082.5 1007.2V1008.1M1083.5 1006.9V1008.1M1084.5 1007.4V1009.5M1085.5 1007.6V1009.5M1086.5 1006.9V1008.1M1087.5 1007.3V1008.1M1088.5 1007.4V1009.5M1089.5 1007.5V1009.5M1090.5 1007.1V1008.1M1091.5 1007V1008.1M1092.5 1007.1V1008.1M1093.5 1007.4V1008.1M1094.5 1007.5V1008.1M1095.5 1007.5V1008.1M1096.5 1007.3V1009.5M1097.5 1007.2V1009.5M1098.5 1007.3V1009.5M1099.5 1007.1V1009.5M1100.5 1006.9V1009.5M1101.5 1007.3V1008.1M1102.5 1007.3V1008.1M1103.5 1007.4V1009.5M1104.5 1007.2V1009.5M1105.5 1007.1V1009.5M1106.5 1007.5V1008.1M1107.5 1007.3V1008.1M1108.5 1007V1008.1M1109.5 1007.2V1009.5M1110.5 1007.6V1009.5M1111.5 1007.2V1008.1M1112.5 1007.2V1008.1M1113.5 1006.9V1008.1M1114.5 1007.5V1009.5M1115.5 1007.2V1009.5M1116.5 1006.9V1009.5M1117.5 1007.5V1009.5M1118.5 1007V1009.5M1119.5 1007.1V1009.5M1120.5 1007.6V1008.1M1121.5 1007.5V1008.1M1122.5 1007.6V1008.1M1123.5 1007.4V1008.1M1124.5 1007.5V1008.1M1125.5 1007.1V1008.1M1126.5 1006.9V1009.5M1127.5 1007.1V1009.5M1128.5 1007V1009.5M1129.5 1006.9V1009.5M1130.5 1006.9V1008.1M1131.5 1007.2V1008.1M1132.5 1007.1V1008.1M1133.5 1007.3V1008.1M1134.5 1007.4V1008.1M1135.5 1007.4V1008.1M1136.5 1007.4V1009.5M1137.5 1007.3V1009.5M1138.5 1006.9V1009.5M1139.5 1007.1V1009.5M1140.5 1007.2V1008.1M1141.5 1006.9V1008.1M1142.5 1007.5V1008.1M1143.5 1007.2V1008.1M1144.5 1007.5V1009.5M1145.5 1006.9V1009.5M1146.5 1007.6V1008.1M1147.5 1007.4V1008.1M1148.5 1007.2V1008.1M1149.5 1007.3V1009.5M1150.5 1007.3V1009.5M1151.5 1007V1009.5M1152.5 1007.6V1008.1M1153.5 1007.6V1008.1M1154.5 1007.6V1008.1M1155.5 1007.6V1009.5M1156.5 1007.3V1009.5M1157.5 1007.4V1009.5M1158.5 1007V1009.5M1159.5 1006.9V1008.1M1160.5 1007.2V1008.1M1161.5 1007.1V1008.1M1162.5 1007.4V1008.1M1163.5 1007.1V1009.5M1164.5 1006.9V1009.5M1165.5 1007.1V1009.5M1166.5 1007.4V1008.1M1167.5 1007.4V1008.1M1168.5 1007.4V1008.1M1169.5 1007.5V1008.1M1170.5 1007.6V1008.1M1171.5 1006.9V1008.1M1172.5 1007V1009.5M1173.5 1006.9V1009.5M1174.5 1007.2V1008.1M1175.5 1007.3V1008.1M1176.5 1007V1008.1M1177.5 1007V1009.5M1178.5 1007.4V1009.5M1179.5 1007.2V1009.5M1180.5 1007V1009.5M1181.5 1007.6V1009.5M1182.5 1007.5V1009.5M1183.5 1007.3V1008.1M1184.5 1007.5V1008.1M1185.5 1007V1008.1M1186.5 1007.2V1009.5M1187.5 1007.1V1009.5M1188.5 1007.1V1009.5M1189.5 1006.9V1009.5M1190.5 1007.3V1008.1M1191.5 1007.1V1008.1M1192.5 1007.3V1009.5M1193.5 1007.4V1009.5M1194.5 1007.6V1008.1M1195.5 1006.9V1008.1M1196.5 1006.9V1008.1M1197.5 1007.5V1009.5M1198.5 1007.1V1009.5M1199.5 1007.4V1009.5M1200.5 1007.3V1009.5M1201.5 1007.4V1009.5M1202.5 1007.4V1009.5M1203.5 1007.5V1008.1M1204.5 1007V1008.1M1205.5 1007.5V1008.1M1206.5 1007.1V1008.1M1207.5 1007.6V1008.1M1208.5 1007.1V1009.5M1209.5 1007.6V1009.5M1210.5 1007.5V1009.5M1211.5 1007.6V1009.5M1212.5 1007.6V1009.5M1213.5 1006.9V1008.1M1214.5 1007.2V1008.1M1215.5 1007.5V1008.1M1216.5 1007.4V1009.5M1217.5 1007.1V1009.5M1218.5 1007.1V1009.5M1219.5 1007.3V1009.5M1220.5 1007V1009.5M1221.5 1007.4V1008.1M1222.5 1007.6V1008.1M1223.5 1007.1V1008.1M1224.5 1007V1009.5M1225.5 1007.6V1009.5M1226.5 1007.1V1009.5M1227.5 1007.1V1008.1M1228.5 1007.4V1008.1M1229.5 1007.4V1008.1M1230.5 1007.6V1008.1M1231.5 1007.6V1008.1M1232.5 1007.4V1009.5M1233.5 1007.2V1009.5M1234.5 1006.9V1009.5M1235.5 1007.1V1009.5M1236.5 1007.5V1009.5M1237.5 1006.9V1009.5M1238.5 1007V1008.1M1239.5 1007.6V1008.1M1240.5 1007V1008.1M1241.5 1006.9V1009.5M1242.5 1007.5V1009.5M1243.5 1007.4V1009.5M1244.5 1007.5V1009.5M1245.5 1007V1008.1M1246.5 1007V1008.1M1247.5 1007V1008.1M1248.5 1007.6V1008.1M1249.5 1007.1V1009.5M1250.5 1007.1V1009.5M1251.5 1007.4V1009.5M1252.5 1007V1009.5M1253.5 1007.5V1009.5M1254.5 1006.9V1009.5M1255.5 1007.4V1008.1M1256.5 1007.1V1008.1M1257.5 1007.2V1008.1M1258.5 1007.5V1008.1M1259.5 1007.4V1009.5M1260.5 1007.3V1009.5M1261.5 1007V1008.1M1262.5 1007.1V1008.1M1263.5 1006.9V1009.5M1264.5 1007.5V1009.5M1265.5 1007V1009.5M1266.5 1007.4V1009.5M1267.5 1007.6V1009.5M1268.5 1007.4V1008.1M1269.5 1007.4V1008.1M1270.5 1007.1V1008.1M1271.5 1007.1V1009.5M1272.5 1007.5V1009.5M1273.5 1007.5V1009.5M1274.5 1006.9V1009.5M1275.5 1007.6V1009.5M1276.5 1007.6V1008.1M1277.5 1006.9V1008.1M1278.5 1007.1V1009.5"/>
<path class="pk" stroke-width="2.4" d="M267.5 1001.7h0M309.5 1003.3h0M432.5 1004.6h0M628 997.2h0M1043 1001.5h0M1062 1004.6h0M810 1004.5h0M906 1004.6h0M400 1004.8h0M715.5 1004.3h0M691 1004.8h0"/>
<path class="pk" stroke-width="2.4" d="M1302.9 1007.4h0M1289.1 1007h0M1303.8 1004.7h0M1299.1 1006.2h0M1286.4 1004.7h0M1286.8 1005.4h0M1280.6 999.7h0M1295.3 1006.2h0M1290.1 1009h0M1283.7 1008.1h0M1303.8 1006.7h0M1284.3 1004.1h0M1298.5 1006.5h0M1293.1 1006.8h0M1300.8 1009.2h0M1289.3 1008.5h0M1289.3 1005.4h0M1278.5 1001.4h0M1284.7 1007h0M1293.5 1006h0M1298.3 1008.9h0M1282.2 1007.5h0M1299.2 1008h0M1299.6 1004.2h0M1303.2 1009.4h0M1284.2 1004.7h0M1287.4 1008.9h0M1296.4 1006.1h0M1291.2 1004.3h0M1288.1 1006.7h0M1294.5 1008.4h0M1278.4 1003.9h0M1278.3 1004.1h0M1303.8 1007.4h0M1279.6 1005.3h0M1286.1 1008h0M1299.9 1006.2h0M1285.5 1007.4h0M1284.3 1007h0M1303.6 1006.4h0M1286.8 1004.4h0M1301.8 1007h0M1301.4 1007h0M1279.5 1002.9h0M1298.9 1009.3h0M1284.1 1004.2h0M1293 1006.1h0M1301.6 1007.6h0M1279.2 1009h0M1301.5 1006h0M1283.6 1002.7h0M1280.6 1002.8h0M1281.9 1002.5h0M1287 1006.1h0M1287.5 1006.7h0M1283.3 1005.2h0M1283.8 1002.7h0M1280.8 1004.1h0M1279.2 1000.9h0M1297.9 1008.2h0M1281.4 1002.7h0M1282.4 1003.3h0M1285.6 1005.6h0M1302.3 1008.3h0M1281.8 1002h0M1290.7 1009.1h0M1284.4 1009.2h0M1282 1008.4h0M1288.4 1004.8h0M1290.2 1004.5h0M1303.3 1005.4h0M1292.5 1008.4h0M1299.3 1008.9h0M1289.7 1004.7h0M1290.5 1005.3h0M1292.2 1004.5h0M1301.1 1007.3h0M1278 1003.7h0M1287.2 1006h0M1292.2 1003.7h0M1301.5 1008.7h0M1279 1006.9h0M1300.5 1009.1h0M1300 1004.9h0M1290.3 1006.3h0M1282.1 1002.4h0M1278.8 1002.7h0M1284.7 1004.9h0M1303.8 1008.6h0M1281.7 1007.2h0M1298.1 1006h0M1290 1006.5h0M1300.6 1005.4h0M1278.9 1004.8h0M1301.5 1008.4h0M1280.5 1005.2h0M1299.6 1004h0M1297.6 1006.9h0M1301.7 1009.4h0M1284.1 1008.1h0M1279.8 1005.3h0M1293.3 1006.8h0M1304.3 1007.8h0M1300.4 1008.2h0M1295.6 1004.5h0M1294.7 1001.6h0M1281.9 1002.5h0M1279.9 999.4h0M1280.8 1006.2h0M1294 1001.8h0M1285.8 1004.3h0M1304.2 1009.3h0M1290.2 1004.5h0M1302.4 1007.2h0M1290 1007.9h0M1293.4 1009h0M1300.8 1004.8h0M1292.5 1002.9h0M1281 1008.9h0M1279.2 1005h0M1288 1007.4h0M1301.2 1007.6h0M1283.5 1005.3h0M1281.3 1009.4h0M1292.5 1005.2h0M1292.8 1002.8h0M1279.5 1000.2h0M1281.3 1003.7h0M1280.3 1000.9h0M1300.1 1006.1h0M1283.2 1008.2h0M1293.4 1005.7h0M1282.2 1003.9h0M1289.9 1007.3h0M1302.3 1007.4h0M1291.9 1004.1h0M1293.1 1008.6h0M1287.4 1005.4h0M1293.6 1004.9h0M1290.8 1007.5h0M1300.1 1007.4h0M1288.3 1006.9h0M1287.5 1007.7h0M1279.9 1008.3h0M1291.5 1007.1h0M1303.7 1009.4h0M1280.6 1008.9h0M1295.3 1006.4h0M1289.4 1007.6h0M1283.2 1002h0M1287.3 1008.7h0M1278.2 1008.9h0M1282.2 1008.3h0M1288.3 1004.4h0M1283.9 1007.7h0M1293.6 1006.3h0M1297.2 1005.2h0M1298 1006.8h0M1303.7 1009h0M1303.2 1009.2h0M1297.4 1008.5h0M1291.5 1005.1h0M1292.1 1003.4h0M1286.2 1007.2h0M1304.3 1005.9h0M1303.2 1006.9h0M1286.4 1006.1h0M1293.5 1004h0M1293.6 1007.6h0M1297.1 1008.6h0M1294 1004.5h0M1290.2 1004.6h0M1300.3 1005h0M1292.5 1007.2h0M1279.7 999.8h0M1278.4 1000.3h0M1291.9 1007.7h0M1299.2 1007.9h0M1286.9 1009h0M1301.2 1008.3h0M1279.8 999.6h0M1302.4 1006.6h0M1290.1 1009h0M1280.9 1004.8h0M1285.3 1008.2h0M1289.9 1007.3h0M1291.7 1007.3h0M1291.8 1006.8h0M1281.6 1002.5h0M1304.1 1007.6h0M1290 1006.3h0M1296.1 1005.8h0M1282 1005.3h0M1297.8 1008.1h0M1284.9 1008.3h0M1290.4 1006.2h0M1296.4 1009h0M1292.7 1009.3h0M1303.4 1008.2h0M1299.5 1009.4h0M1283.9 1005.1h0M1285.1 1007.8h0M1296.4 1006.1h0M1288 1005.2h0M1278.3 1007.2h0M1281.7 1002.4h0M1300.1 1004.4h0M1293 1008.3h0M1302.9 1008h0M1284.8 1006.9h0M1295.7 1004.1h0M1291.3 1006.2h0M1295.2 1006.9h0M1281.7 1006.6h0M1279.7 1004h0M1279 1004.4h0M1292.6 1005.6h0M1303.9 1004.8h0M1282.9 1008.8h0M1284.4 1008.1h0M1278.4 1003.4h0M1288.4 1007.7h0M1286.7 1005.6h0M1299 1006.4h0M1296.1 1005h0M1301.9 1006.7h0M1278.4 999.8h0M1290 1005.4h0M1288.2 1005.9h0M1286.4 1007.9h0M1278.7 1005.2h0M1288.6 1006.6h0M1298.9 1006.5h0M1290.9 1005.8h0M1281.4 1005.9h0M1295.7 1006.8h0M1284.9 1009.2h0M1297.9 1005.2h0M1303.6 1008.6h0M1302.6 1008.5h0M1294.7 1009.1h0M1303.4 1005.5h0M1300.8 1008.5h0M1281.1 1007.3h0M1280.9 1003.7h0M1299.3 1009.1h0M1289.7 1003.5h0M1286.5 1008.9h0M1299.4 1009.4h0M1287.4 1006.7h0M1297.7 1008h0M1291.1 1007.2h0M1297.7 1007.7h0M1303.2 1005.3h0M1278 1007h0M1298.4 1005.5h0M1303.8 1005.3h0M1286.6 1006.8h0M1282.2 1002.7h0M1285.2 1009.1h0M1294.9 1004.6h0M1296.6 1007.8h0M1283.6 1005.9h0M1297.1 1004.5h0M1279 1004.1h0M1280.2 1005.6h0M1286.4 1009.3h0M1291.1 1006.5h0M1278.8 1003.1h0M1293.2 1002.6h0M1298.3 1008.5h0M1293.1 1008.9h0M1303.1 1004.6h0M1278.2 1008.1h0M1296.5 1009.1h0M1282.4 1009.2h0M1298.1 1006.9h0M1292.3 1007.7h0M1280.8 1009.3h0M1296 1004.3h0M1281.4 1003.1h0M1300.2 1009.2h0M1281.5 1004.5h0M1286.4 1006.1h0M1289.3 1007.7h0M1299.8 1005.8h0M1283.7 1009.3h0M1296.6 1007.9h0M1287.1 1005.7h0M1291.1 1004.7h0M1301.3 1008.7h0M1278.7 1000.2h0M1287.3 1008.9h0M1287 1008.9h0M1283.9 1007.4h0M1285.8 1008.6h0M1288.8 1003.2h0M1282.6 1005.8h0M1299.1 1004h0M1299.5 1008.9h0"/>
<path class="pk" stroke-width="3.0" d="M222.5 840.5h0M222.5 878.5h0M267.5 840.5h0M267.5 878.5h0M309.5 840.5h0M309.5 878.5h0M628 840.5h0M628 878.5h0M691 840.5h0M691 878.5h0M715.5 840.5h0M715.5 878.5h0M810 840.5h0M810 878.5h0M814.5 840.5h0M814.5 878.5h0M1043 840.5h0M1043 878.5h0M1062 840.5h0M1062 878.5h0M1163 840.5h0M1163 878.5h0M1282.5 840.5h0M1285.5 840.5h0M1282.5 878.5h0M1285.5 878.5h0"/>
<path d="M161.3 763.5H167M1276 763.5H1280.5M1290 763.5H1293" stroke="#000" stroke-width="3" fill="none"/>
<path d="M222.5 955.1l2 4.7h-4zM267.5 955.1l2 4.7h-4zM309.5 955.1l2 4.7h-4zM628 955.1l2 4.7h-4zM691 955.1l2 4.7h-4zM715.5 955.1l2 4.7h-4zM810 955.1l2 4.7h-4zM814.5 955.1l2 4.7h-4zM1043 955.1l2 4.7h-4zM1062 955.1l2 4.7h-4zM1163 955.1l2 4.7h-4zM162.4 955.1l2 4.7h-4zM164.6 955.1l2 4.7h-4zM166.6 955.1l2 4.7h-4zM1276.2 955.1l2 4.7h-4zM1279.4 955.1l2 4.7h-4zM1282.4 955.1l2 4.7h-4zM1285 955.1l2 4.7h-4zM1287.6 955.1l2 4.7h-4zM1291.3 955.1l2 4.7h-4zM1292.6 955.1l2 4.7h-4z" fill="#f00"/>
<path class="pr" stroke-width="2.4" d="M1279.4 992.4h0M1163 990.7h0"/>
<path class="gr" d="M105.5 763.5H1485.5M105.5 802.5H1485.5M105.5 840.5H1485.5M105.5 878.5H1485.5M105.5 916.5H1485.5M105.5 957.5H1485.5M105.5 983.5H1485.5M105.5 1009.5H1485.5"/>
<path d="M105.5 954.5H1485.5" stroke="#000" stroke-width="1.3" fill="none"/>
</g>
<path class="vl" d="M162.0 320.9V36M1276.0 320.9V36M1290.0 320.9V36M1303.0 320.9V36"/>
<path class="vl" d="M162.0 665.9V381M1276.0 665.9V381M1290.0 665.9V381M1303.0 665.9V381"/>
<path class="vl" d="M162.0 953.9V726M1276.0 953.9V726M1290.0 953.9V726M1303.0 953.9V726"/>
<path class="vl" d="M162.0 1010.9V955M1276.0 1010.9V955M1290.0 1010.9V955M1303.0 1010.9V955"/>
<rect class="sp" x="105.5" y="35.5" width="1380.0" height="286"/>
<path class="tk" d="M162.5 321.5v5.2M369.5 321.5v5.2M575.5 321.5v5.2M782.5 321.5v5.2M988.5 321.5v5.2M1195.5 321.5v5.2M1401.5 321.5v5.2"/>
<rect class="sp" x="105.5" y="380.5" width="1380.0" height="286"/>
<path class="tk" d="M162.5 666.5v5.2M369.5 666.5v5.2M575.5 666.5v5.2M782.5 666.5v5.2M988.5 666.5v5.2M1195.5 666.5v5.2M1401.5 666.5v5.2"/>
<rect class="sp" x="105.5" y="725.5" width="1380.0" height="286"/>
<path class="tk" d="M162.5 1011.5v5.2M369.5 1011.5v5.2M575.5 1011.5v5.2M782.5 1011.5v5.2M988.5 1011.5v5.2M1195.5 1011.5v5.2M1401.5 1011.5v5.2"/>
<path class="tk" d="M105.5 297.5h-5.2M105.5 234.5h-5.2M105.5 171.5h-5.2M105.5 108.5h-5.2M105.5 45.5h-5.2"/>
<path class="tk" d="M105.5 620.5h-5.2M105.5 559.5h-5.2M105.5 499.5h-5.2M105.5 438.5h-5.2"/>
<path class="tk" d="M105.5 763.5h-5.2M105.5 802.5h-5.2M105.5 840.5h-5.2M105.5 878.5h-5.2M105.5 916.5h-5.2M105.5 957.5h-5.2M105.5 983.5h-5.2M105.5 1009.5h-5.2"/>
<path class="tk" stroke-width=".83" d="M105.5 970.5h-2.78M105.5 996.5h-2.78"/>
<rect class="lg" x="1361.3" y="42.6" width="117.4" height="26.9" rx="2.8"/>
<path d="M1366 54H1396" stroke="#008000" stroke-width="2.08"/>
<rect class="lg" x="1348.3" y="247.5" width="130.5" height="66.9" rx="2.8"/>
<path class="pr" stroke-width="4.2" d="M1367.4 260.5h0"/>
<path class="po" stroke-width="4.2" d="M1367.4 281.4h0"/>
<path class="pk" stroke-width="4.2" d="M1367.4 302.3h0"/>
<rect class="lg" x="1365" y="387.5" width="113.7" height="48" rx="2.8"/>
<path d="M1369.2 399.4H1399.8" stroke="#ffa500" stroke-width="3"/>
<path d="M1369.2 421.9H1399.4" stroke="#f00" stroke-width="2.08"/>
<rect class="lg" x="1348.3" y="613.2" width="130.5" height="46" rx="2.8"/>
<path class="po" stroke-width="4.2" d="M1367.4 626.2h0"/>
<path class="pk" stroke-width="4.2" d="M1367.4 647.1h0"/>
<g style="filter:opacity(.999)">
<text x="162.5" y="342.1" text-anchor="middle">0</text>
<text x="369.5" y="342.1" text-anchor="middle">5000</text>
<text x="575.5" y="342.1" text-anchor="middle">10000</text>
<text x="782.5" y="342.1" text-anchor="middle">15000</text>
<text x="988.5" y="342.1" text-anchor="middle">20000</text>
<text x="1194.6" y="342.1" text-anchor="middle">25000</text>
<text x="1400.2" y="342.1" text-anchor="middle">30000</text>
<text x="162.5" y="687.1" text-anchor="middle">0</text>
<text x="369.5" y="687.1" text-anchor="middle">5000</text>
<text x="575.5" y="687.1" text-anchor="middle">10000</text>
<text x="782.5" y="687.1" text-anchor="middle">15000</text>
<text x="988.5" y="687.1" text-anchor="middle">20000</text>
<text x="1194.6" y="687.1" text-anchor="middle">25000</text>
<text x="1400.2" y="687.1" text-anchor="middle">30000</text>
<text x="162.5" y="1032.1" text-anchor="middle">0</text>
<text x="369.5" y="1032.1" text-anchor="middle">5000</text>
<text x="575.5" y="1032.1" text-anchor="middle">10000</text>
<text x="782.5" y="1032.1" text-anchor="middle">15000</text>
<text x="988.5" y="1032.1" text-anchor="middle">20000</text>
<text x="1194.6" y="1032.1" text-anchor="middle">25000</text>
<text x="1400.2" y="1032.1" text-anchor="middle">30000</text>
<text x="93.9" y="302.6" text-anchor="end">7.0</text>
<text x="93.9" y="239.6" text-anchor="end">7.1</text>
<text x="93.9" y="176.6" text-anchor="end">7.2</text>
<text x="93.9" y="113.5" text-anchor="end">7.3</text>
<text x="93.9" y="50.5" text-anchor="end">7.4</text>
<text x="95" y="625.5" text-anchor="end">7.28</text>
<text x="95" y="564.5" text-anchor="end">7.30</text>
<text x="95" y="504.6" text-anchor="end">7.32</text>
<text x="95" y="443.6" text-anchor="end">7.34</text>
<text x="96.3" y="768.8" text-anchor="end">not Kalman</text>
<text x="95.7" y="807.8" text-anchor="end">not track</text>
<text x="96.3" y="845.8" text-anchor="end">Ion. rad.</text>
<text x="95.4" y="883.8" text-anchor="end">dr &gt; 5</text>
<text x="95.5" y="921" text-anchor="end">OBS not OK</text>
<text x="95.2" y="962" text-anchor="end">10</text>
<text x="95.4" y="988" text-anchor="end">5</text>
<text x="96.9" y="1014" text-anchor="end">0</text>
<text transform="translate(68.6 983.6) rotate(-90)" text-anchor="middle">dr</text>
<text class="t" x="795.5" y="26.9" text-anchor="middle">AGASC ID 238560296.0</text>
<text class="t" x="794.9" y="371.9" text-anchor="middle">Magnitude Estimates</text>
<text x="718.7" y="311.8" text-anchor="middle">10984</text>
<text x="1296.6" y="271.8" text-anchor="middle">41918</text>
<text x="1283" y="291.8" text-anchor="middle">65519</text>
<text x="718.7" y="656.8" text-anchor="middle">10984</text>
<text x="1296.6" y="616.8" text-anchor="middle">41918</text>
<text x="1283" y="636.8" text-anchor="middle">65519</text>
<text x="1407.3" y="58.7">mag<tspan class="sub" dy="2.3" dx="-.8" letter-spacing=".2">AGASC</tspan></text>
<text x="1393" y="263.7">not OK</text><text x="1393" y="284.8">Highlighted</text><text x="1393" y="305.7">OK</text>
<text x="1410" y="403.7">mag<tspan class="sub" dy="2.3" dx="-.8" letter-spacing=".2">OBSID</tspan></text>
<text x="1409.2" y="426.7">mag</text>
<text x="1393" y="629.7">Highlighted</text><text x="1393" y="650.6">OK</text>
</g>
</svg></body></html>
